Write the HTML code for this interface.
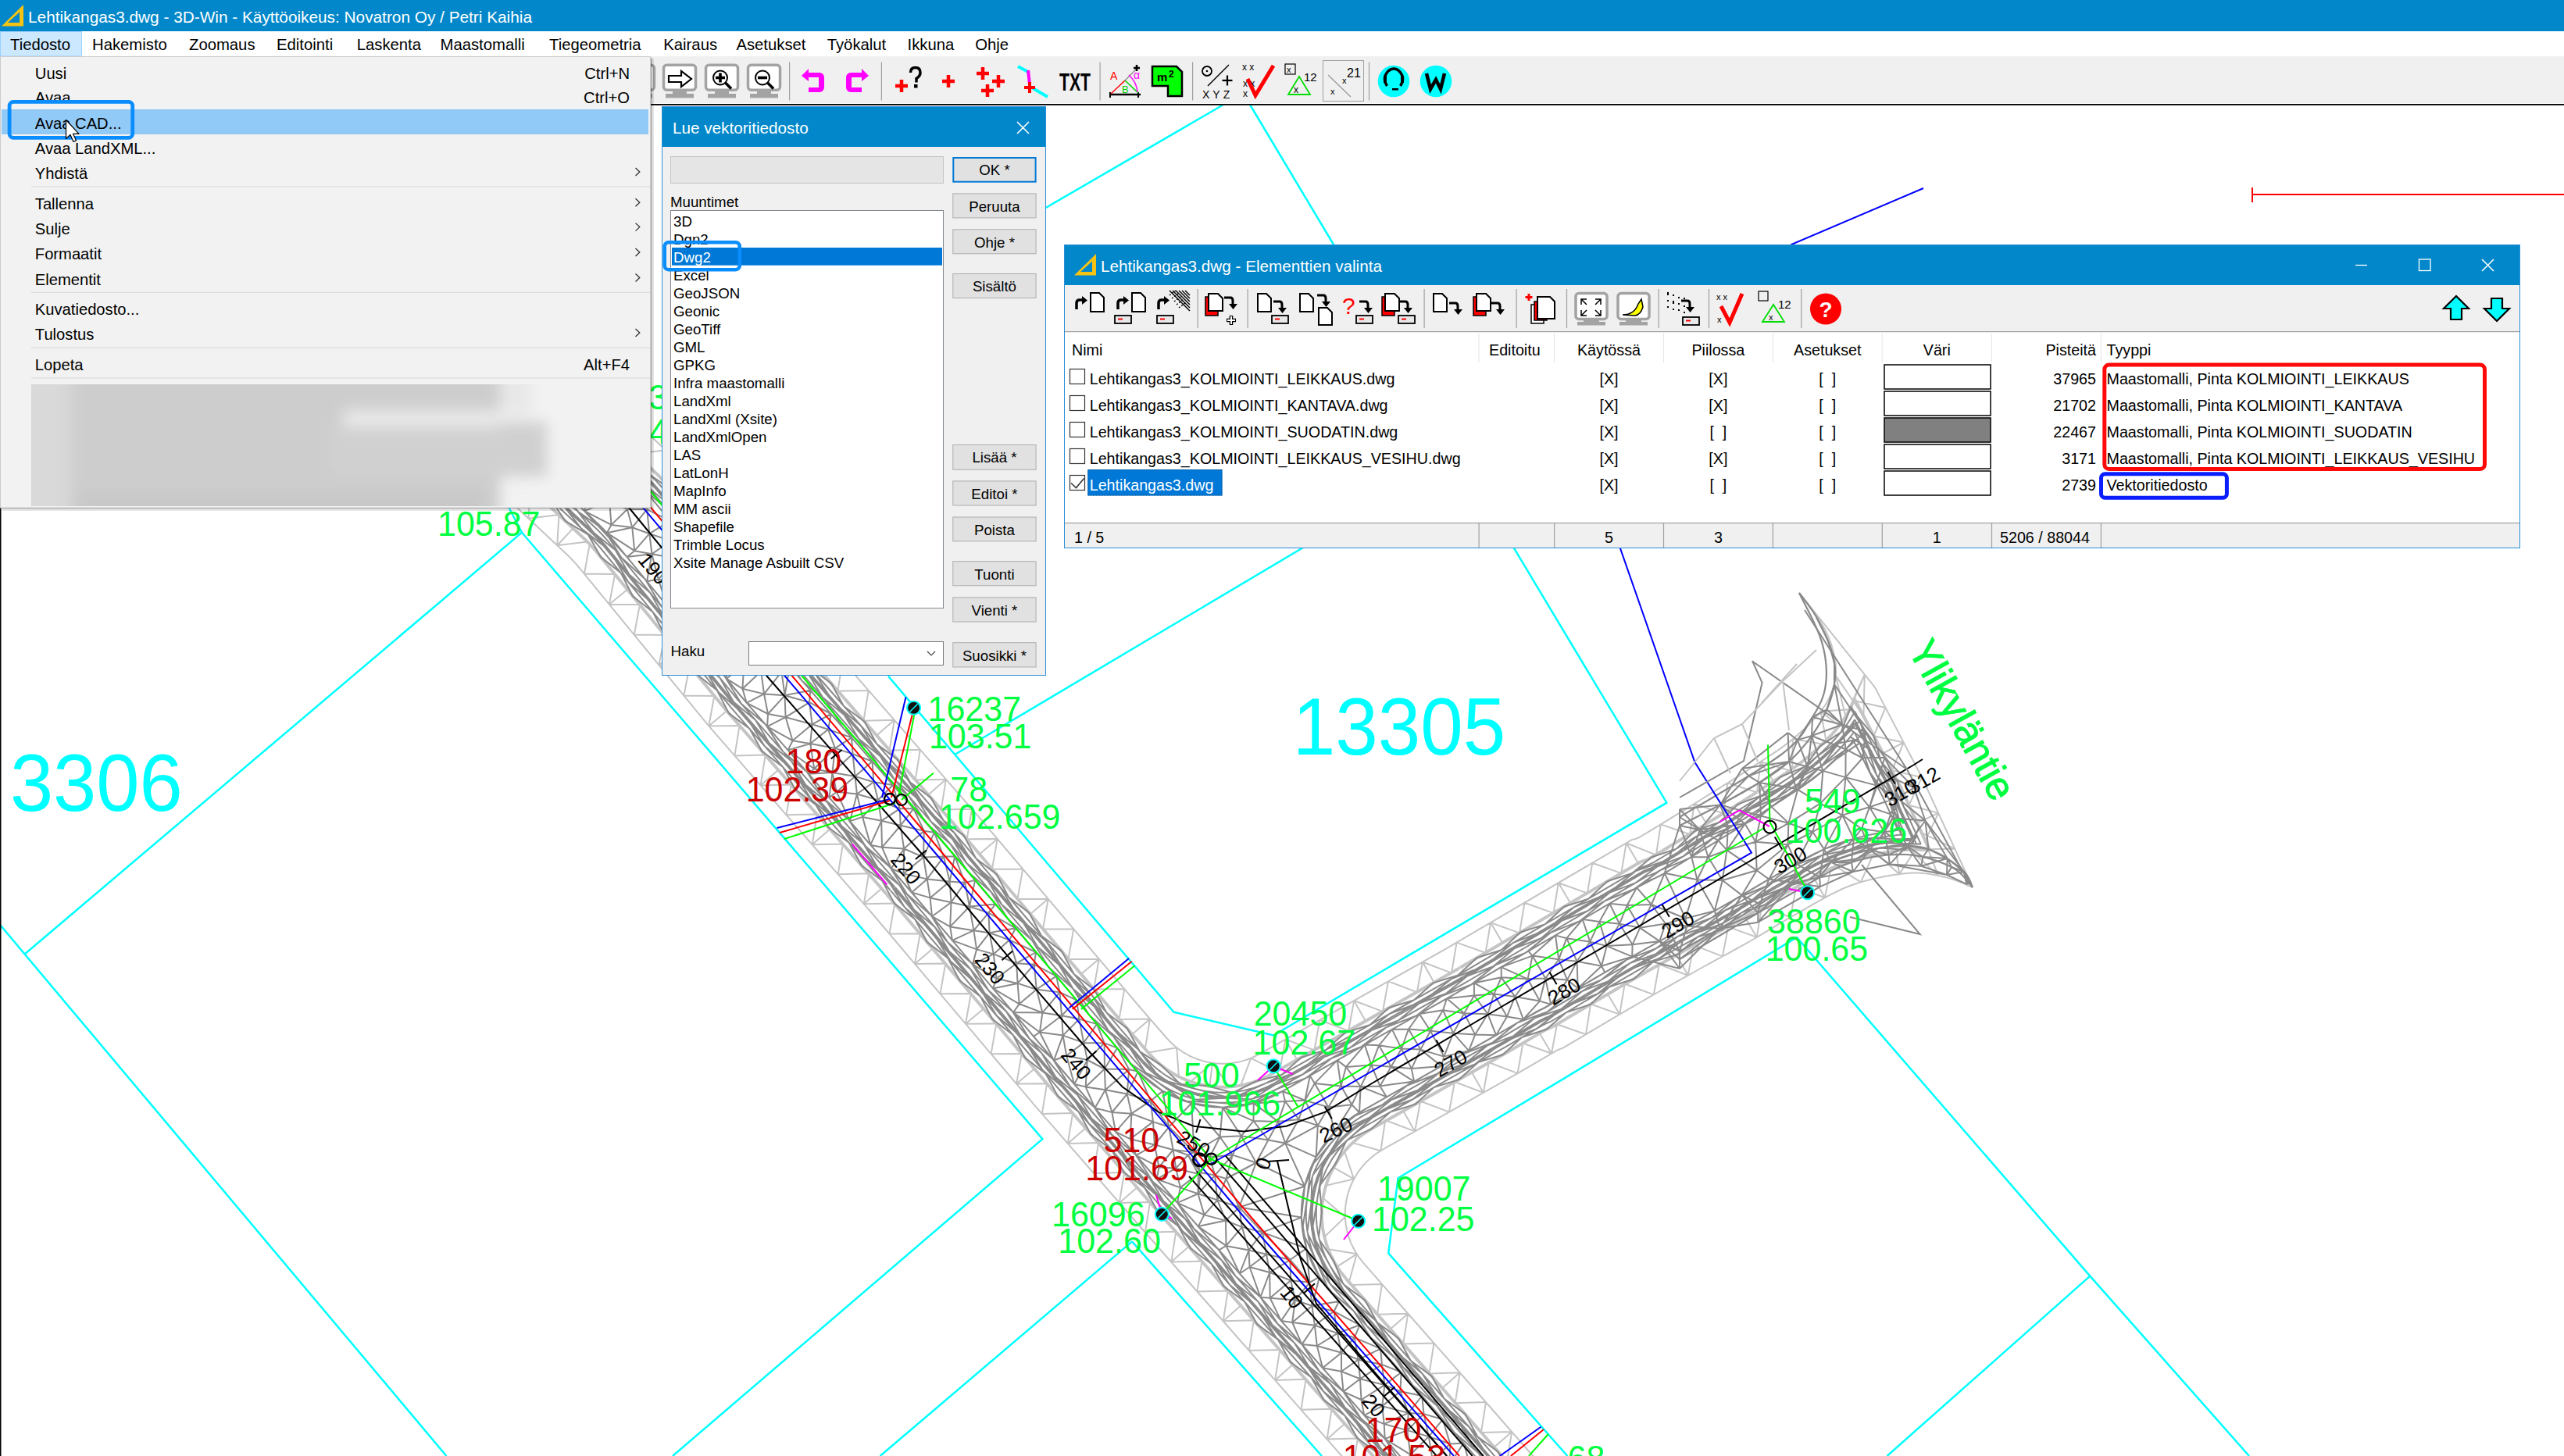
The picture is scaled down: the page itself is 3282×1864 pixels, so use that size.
<!DOCTYPE html>
<html><head><meta charset="utf-8"><style>
html,body{margin:0;padding:0;background:#fff;overflow:hidden}
svg{display:block;font-family:"Liberation Sans",sans-serif}
</style></head><body>
<svg width="3282" height="1864" viewBox="0 0 3282 1864">
<rect x="0" y="0" width="3282" height="1864" fill="#fff"/>
<polyline points="0.0,1183.9 571.5,1864.0" fill="none" stroke="#00ffff" stroke-width="2.5"/><polyline points="31.0,1222.0 668.0,681.8 652.0,651.0 600.0,560.0" fill="none" stroke="#00ffff" stroke-width="2.5"/><polyline points="668.0,681.8 1334.4,1458.1 861.0,1864.0" fill="none" stroke="#00ffff" stroke-width="2.5"/><polyline points="1449.0,1589.4 1126.6,1864.0" fill="none" stroke="#00ffff" stroke-width="2.5"/><polyline points="1449.0,1589.4 1692.0,1864.0" fill="none" stroke="#00ffff" stroke-width="2.5"/><polyline points="1566.0,134.0 1330.0,271.0 1100.0,405.0" fill="none" stroke="#00ffff" stroke-width="2.5"/><polyline points="1600.0,134.0 1707.0,313.0 1800.0,470.0" fill="none" stroke="#00ffff" stroke-width="2.5"/><polyline points="1137.0,865.6 1502.5,1295.7 1630.2,1325.5 2133.4,1027.7 1938.5,702.7 1880.0,600.0" fill="none" stroke="#00ffff" stroke-width="2.5"/><polyline points="1222.6,965.7 1700.0,682.0" fill="none" stroke="#00ffff" stroke-width="2.5"/><polyline points="2000.0,1381.9 1789.6,1508.2 1777.2,1604.4 2006.4,1864.0" fill="none" stroke="#00ffff" stroke-width="2.5"/><polyline points="2000.0,1381.9 2300.0,1200.0 2675.3,1633.6 2879.0,1864.0" fill="none" stroke="#00ffff" stroke-width="2.5"/><polyline points="2675.3,1633.6 2415.5,1864.0" fill="none" stroke="#00ffff" stroke-width="2.5"/><path d="M493.1 491.4L493.6 492.0M493.6 492.0L494.4 492.8M494.4 492.8L494.9 493.3M494.9 493.3L729.0 713.1M729.0 713.1L730.4 714.5M730.4 714.5L737.5 722.1M737.5 722.1L738.8 723.6M738.8 723.6L906.0 927.9M906.0 927.9L906.3 928.2M906.3 928.2L906.7 928.7M906.7 928.7L906.8 928.8M906.8 928.8L908.0 930.2M908.0 930.2L908.1 930.3M908.1 930.3L1111.1 1163.3M1111.1 1163.3L1111.3 1163.4M1111.3 1163.4L1112.0 1164.3M1112.0 1164.3L1112.2 1164.5M1112.2 1164.5L1321.1 1411.2M1321.1 1411.2L1321.4 1411.6M1321.4 1411.6L1453.8 1564.0M1453.8 1564.0L1774.2 1928.5M1774.2 1928.5L1774.3 1928.6M1774.3 1928.6L1884.5 2054.5M1884.5 2054.5L1885.0 2055.0M1885.0 2055.0L1885.7 2055.8M1885.7 2055.8L1886.3 2056.3M1886.3 2056.3L1886.8 2055.9M1886.8 2055.9L1887.7 2055.2M1887.7 2055.2L1888.3 2054.8M1888.3 2054.8L2022.7 1937.1M2022.7 1937.1L2023.2 1936.6M2023.2 1936.6L2024.0 1935.9M2024.0 1935.9L2024.5 1935.4M2024.5 1935.4L2024.1 1934.8M2024.1 1934.8L2023.4 1933.9M2023.4 1933.9L2022.9 1933.3M2022.9 1933.3L1912.8 1807.5M1912.8 1807.5L1745.9 1617.6M1745.9 1617.6L1744.9 1616.4M1744.9 1616.4L1740.5 1610.8M1740.5 1610.8L1738.7 1608.4M1738.7 1608.4L1735.3 1603.0M1735.3 1603.0L1733.8 1600.5M1733.8 1600.5L1730.9 1594.8M1730.9 1594.8L1729.6 1592.1M1729.6 1592.1L1727.3 1586.1M1727.3 1586.1L1726.3 1583.3M1726.3 1583.3L1724.6 1577.1M1724.6 1577.1L1723.9 1574.2M1723.9 1574.2L1722.8 1567.9M1722.8 1567.9L1722.4 1565.0M1722.4 1565.0L1721.9 1558.6M1721.9 1558.6L1721.8 1555.6M1721.8 1555.6L1721.9 1549.2M1721.9 1549.2L1722.1 1546.3M1722.1 1546.3L1722.9 1539.9M1722.9 1539.9L1723.4 1537.0M1723.4 1537.0L1724.8 1530.7M1724.8 1530.7L1725.5 1527.9M1725.5 1527.9L1727.5 1521.8M1727.5 1521.8L1728.6 1519.0M1728.6 1519.0L1731.2 1513.1M1731.2 1513.1L1732.5 1510.5M1732.5 1510.5L1735.7 1504.9M1735.7 1504.9L1737.2 1502.4M1737.2 1502.4L1740.9 1497.1M1740.9 1497.1L1742.7 1494.8M1742.7 1494.8L1746.9 1489.9M1746.9 1489.9L1749.0 1487.8M1749.0 1487.8L1753.6 1483.4M1753.6 1483.4L1755.9 1481.4M1755.9 1481.4L1760.9 1477.5M1760.9 1477.5L1763.3 1475.8M1763.3 1475.8L1769.4 1472.0M1769.4 1472.0L1770.7 1471.2M1770.7 1471.2L1943.9 1373.4M1943.9 1373.4L1945.2 1372.7M1945.2 1372.7L1991.8 1345.3M1991.8 1345.3L1994.0 1344.1M1994.0 1344.1L1996.2 1343.2M1996.2 1343.2L1998.6 1342.4M1998.6 1342.4L2000.0 1342.0M2000.0 1342.0L2000.6 1341.6M2000.6 1341.6L2007.8 1337.4M2007.8 1337.4L2018.4 1331.1M2018.4 1331.1L2031.0 1323.6M2031.0 1323.6L2045.0 1315.3M2045.0 1315.3L2059.6 1306.7M2059.6 1306.7L2059.6 1306.7M2059.6 1306.7L2074.0 1298.2M2074.0 1298.2L2074.1 1298.1M2074.1 1298.1L2087.7 1290.1M2087.7 1290.1L2087.8 1290.1M2087.8 1290.1L2099.9 1283.0M2099.9 1283.0L2100.1 1283.0M2100.1 1283.0L2111.0 1276.7M2111.0 1276.7L2111.1 1276.6M2111.1 1276.6L2121.8 1270.5M2121.8 1270.5L2121.9 1270.5M2121.9 1270.5L2132.3 1264.6M2132.3 1264.6L2132.4 1264.6M2132.4 1264.6L2142.5 1258.9M2142.5 1258.9L2142.5 1258.9M2142.5 1258.9L2152.3 1253.4M2152.3 1253.4L2152.4 1253.4M2152.4 1253.4L2161.9 1248.1M2161.9 1248.1L2171.1 1243.0M2171.1 1243.0L2180.0 1238.0M2180.0 1238.0L2180.0 1238.0M2180.0 1238.0L2188.4 1233.3M2188.4 1233.3L2188.5 1233.3M2188.5 1233.3L2196.5 1228.9M2196.5 1228.9L2196.5 1228.9M2196.5 1228.9L2204.1 1224.8M2204.1 1224.8L2204.2 1224.7M2204.2 1224.7L2211.5 1220.8M2211.5 1220.8L2218.6 1216.9M2218.6 1216.9L2225.7 1213.0M2225.7 1213.0L2232.7 1209.1M2232.7 1209.1L2239.9 1205.0M2239.9 1205.0L2240.1 1205.0M2240.1 1205.0L2247.0 1201.0M2247.0 1201.0L2247.2 1200.9M2247.2 1200.9L2253.8 1196.9M2253.8 1196.9L2260.6 1192.9M2260.6 1192.9L2267.2 1188.8M2267.2 1188.8L2267.3 1188.8M2267.3 1188.8L2273.9 1184.8M2273.9 1184.8L2274.1 1184.7M2274.1 1184.7L2280.8 1180.7M2280.8 1180.7L2281.1 1180.5M2281.1 1180.5L2288.1 1176.5M2288.1 1176.5L2288.4 1176.3M2288.4 1176.3L2296.0 1172.0M2296.0 1172.0L2304.2 1167.4M2304.2 1167.4L2304.3 1167.3M2304.3 1167.3L2312.8 1162.3M2312.8 1162.3L2321.7 1157.2M2321.7 1157.2L2321.9 1157.1M2321.9 1157.1L2330.7 1152.1M2330.7 1152.1L2331.2 1151.8M2331.2 1151.8L2339.9 1147.0M2339.9 1147.0L2340.6 1146.7M2340.6 1146.7L2349.1 1142.3M2349.1 1142.3L2350.1 1141.8M2350.1 1141.8L2358.2 1138.0M2358.2 1138.0L2359.5 1137.4M2359.5 1137.4L2367.3 1134.3M2367.3 1134.3L2368.8 1133.7M2368.8 1133.7L2376.6 1131.0M2376.6 1131.0L2377.8 1130.6M2377.8 1130.6L2386.2 1128.1M2386.2 1128.1L2387.3 1127.8M2387.3 1127.8L2395.9 1125.6M2395.9 1125.6L2396.8 1125.4M2396.8 1125.4L2405.5 1123.4M2405.5 1123.4L2406.4 1123.2M2406.4 1123.2L2414.9 1121.6M2414.9 1121.6L2415.8 1121.4M2415.8 1121.4L2424.0 1120.1M2424.0 1120.1L2424.8 1120.0M2424.8 1120.0L2432.6 1118.9M2432.6 1118.9L2433.4 1118.8M2433.4 1118.8L2440.3 1118.1M2440.3 1118.1L2441.7 1118.0M2441.7 1118.0L2447.4 1117.6M2447.4 1117.6L2449.3 1117.6M2449.3 1117.6L2454.4 1117.6M2454.4 1117.6L2456.1 1117.6M2456.1 1117.6L2461.0 1117.9M2461.0 1117.9L2462.5 1118.1M2462.5 1118.1L2467.2 1118.6M2467.2 1118.6L2468.5 1118.8M2468.5 1118.8L2473.2 1119.5M2473.2 1119.5L2474.2 1119.7M2474.2 1119.7L2479.0 1120.6M2479.0 1120.6L2479.6 1120.8M2479.6 1120.8L2484.6 1121.8M2484.6 1121.8L2484.8 1121.9M2484.8 1121.9L2489.5 1122.9M2489.5 1122.9L2490.5 1123.1M2490.5 1123.1L2494.4 1124.1M2494.4 1124.1L2496.1 1124.6M2496.1 1124.6L2499.9 1125.8M2499.9 1125.8L2501.2 1126.2M2501.2 1126.2L2505.2 1127.7M2505.2 1127.7L2506.1 1128.0M2506.1 1128.0L2510.3 1129.7M2510.3 1129.7L2510.9 1129.9M2510.9 1129.9L2514.9 1131.7M2514.9 1131.7L2515.2 1131.8M2515.2 1131.8L2519.0 1133.5M2519.0 1133.5L2522.2 1134.9M2522.2 1134.9L2522.6 1135.0M2522.6 1135.0L2524.3 1135.7M2524.3 1135.7L2524.9 1135.9M2524.9 1135.9L2524.7 1135.3M2524.7 1135.3L2460.2 995.3M2460.2 995.3L2459.8 994.7M2459.8 994.7L2400.3 880.6M2400.3 880.6L2400.0 880.0M2400.0 880.0L2399.5 879.4M2399.5 879.4L2303.5 759.6M2303.5 759.6L2303.3 759.4M2303.3 759.4L2303.4 759.6M2303.4 759.6L2305.8 762.8M2305.8 762.8L2306.0 763.1M2306.0 763.1L2309.8 768.2M2309.8 768.2L2314.5 774.3M2314.5 774.3L2314.7 774.5M2314.7 774.5L2319.6 781.2M2319.6 781.2L2319.9 781.6M2319.9 781.6L2324.8 788.4M2324.8 788.4L2325.3 789.1M2325.3 789.1L2329.7 795.6M2329.7 795.6L2330.4 796.7M2330.4 796.7L2334.0 802.5M2334.0 802.5L2335.0 804.2M2335.0 804.2L2337.5 809.0M2337.5 809.0L2338.4 811.0M2338.4 811.0L2340.5 815.7M2340.5 815.7L2341.0 817.0M2341.0 817.0L2343.0 822.1M2343.0 822.1L2343.5 823.4M2343.5 823.4L2345.1 828.4M2345.1 828.4L2345.5 829.9M2345.5 829.9L2346.8 834.7M2346.8 834.7L2347.2 836.3M2347.2 836.3L2348.2 840.9M2348.2 840.9L2348.5 842.7M2348.5 842.7L2349.2 847.1M2349.2 847.1L2349.5 849.0M2349.5 849.0L2349.8 853.0M2349.8 853.0L2349.9 855.2M2349.9 855.2L2350.0 858.9M2350.0 858.9L2349.9 861.1M2349.9 861.1L2349.7 864.6M2349.7 864.6L2349.5 866.8M2349.5 866.8L2349.1 870.1M2349.1 870.1L2348.7 872.4M2348.7 872.4L2348.1 875.5M2348.1 875.5L2347.5 877.7M2347.5 877.7L2346.6 880.9M2346.6 880.9L2345.9 883.0M2345.9 883.0L2344.7 886.2M2344.7 886.2L2343.9 888.1M2343.9 888.1L2342.4 891.5M2342.4 891.5L2341.6 893.3M2341.6 893.3L2339.6 896.9M2339.6 896.9L2338.8 898.4M2338.8 898.4L2336.5 902.2M2336.5 902.2L2335.5 903.8M2335.5 903.8L2332.8 907.7M2332.8 907.7L2331.7 909.1M2331.7 909.1L2328.4 913.3M2328.4 913.3L2327.5 914.4M2327.5 914.4L2323.6 918.9M2323.6 918.9L2322.8 919.8M2322.8 919.8L2318.4 924.4M2318.4 924.4L2317.7 925.2M2317.7 925.2L2312.9 929.9M2312.9 929.9L2312.3 930.5M2312.3 930.5L2307.1 935.4M2307.1 935.4L2306.6 935.8M2306.6 935.8L2301.2 940.7M2301.2 940.7L2300.8 941.1M2300.8 941.1L2295.3 945.7M2295.3 945.7L2294.7 946.3M2294.7 946.3L2289.2 950.6M2289.2 950.6L2288.4 951.3M2288.4 951.3L2282.7 955.6M2282.7 955.6L2282.0 956.1M2282.0 956.1L2275.9 960.4M2275.9 960.4L2275.4 960.8M2275.4 960.8L2268.9 965.2M2268.9 965.2L2268.5 965.4M2268.5 965.4L2261.7 969.9M2261.7 969.9L2261.5 970.0M2261.5 970.0L2254.4 974.6M2254.4 974.6L2247.3 979.2M2247.3 979.2L2240.0 984.0M2240.0 984.0L2233.0 988.6M2233.0 988.6L2232.8 988.7M2232.8 988.7L2225.9 993.2M2225.9 993.2L2225.8 993.3M2225.8 993.3L2218.8 997.7M2218.8 997.7L2218.7 997.8M2218.7 997.8L2211.6 1002.3M2211.6 1002.3L2211.5 1002.3M2211.5 1002.3L2204.2 1006.9M2204.2 1006.9L2204.2 1007.0M2204.2 1007.0L2196.5 1011.7M2196.5 1011.7L2196.5 1011.7M2196.5 1011.7L2188.5 1016.7M2188.5 1016.7L2180.0 1022.0M2180.0 1022.0L2171.1 1027.5M2171.1 1027.5L2161.9 1033.2M2161.9 1033.2L2161.9 1033.3M2161.9 1033.3L2152.4 1039.1M2152.4 1039.1L2152.3 1039.1M2152.3 1039.1L2142.5 1045.2M2142.5 1045.2L2142.5 1045.2M2142.5 1045.2L2132.4 1051.4M2132.4 1051.4L2132.3 1051.4M2132.3 1051.4L2121.9 1057.8M2121.9 1057.8L2121.8 1057.8M2121.8 1057.8L2111.1 1064.3M2111.1 1064.3L2111.1 1064.3M2111.1 1064.3L2100.0 1071.0M2100.0 1071.0L2100.0 1071.0M2100.0 1071.0L2099.9 1071.1M2099.9 1071.1L2097.2 1072.5M2097.2 1072.5L2094.4 1073.6M2094.4 1073.6L2091.6 1074.5M2091.6 1074.5L2090.2 1074.7M2090.2 1074.7L2089.4 1074.9M2089.4 1074.9L2088.7 1075.2M2088.7 1075.2L2087.7 1075.8M2087.7 1075.8L2087.1 1076.1M2087.1 1076.1L1853.9 1212.9M1853.9 1212.9L1853.7 1213.0M1853.7 1213.0L1852.5 1213.6M1852.5 1213.6L1852.3 1213.8M1852.3 1213.8L1612.6 1349.2M1612.6 1349.2L1611.3 1349.9M1611.3 1349.9L1604.9 1353.0M1604.9 1353.0L1602.3 1354.2M1602.3 1354.2L1596.3 1356.5M1596.3 1356.5L1593.5 1357.4M1593.5 1357.4L1587.4 1359.1M1587.4 1359.1L1584.6 1359.8M1584.6 1359.8L1578.3 1360.8M1578.3 1360.8L1575.4 1361.2M1575.4 1361.2L1569.0 1361.7M1569.0 1361.7L1566.1 1361.7M1566.1 1361.7L1559.8 1361.6M1559.8 1361.6L1556.8 1361.4M1556.8 1361.4L1550.5 1360.6M1550.5 1360.6L1547.6 1360.1M1547.6 1360.1L1541.4 1358.7M1541.4 1358.7L1538.6 1357.9M1538.6 1357.9L1532.6 1356.0M1532.6 1356.0L1529.8 1354.9M1529.8 1354.9L1524.0 1352.3M1524.0 1352.3L1521.4 1351.0M1521.4 1351.0L1515.9 1347.9M1515.9 1347.9L1513.4 1346.3M1513.4 1346.3L1508.2 1342.7M1508.2 1342.7L1505.9 1340.9M1505.9 1340.9L1501.0 1336.8M1501.0 1336.8L1498.9 1334.7M1498.9 1334.7L1494.0 1329.6M1494.0 1329.6L1493.0 1328.5M1493.0 1328.5L1461.7 1292.5M1461.7 1292.5L1461.6 1292.4M1461.6 1292.4L1460.9 1291.6M1460.9 1291.6L1460.8 1291.5M1460.8 1291.5L1251.9 1044.7M1251.9 1044.7L1251.1 1043.8M1251.1 1043.8L1048.8 811.7M1048.8 811.7L1048.5 811.4M1048.5 811.4L1046.9 809.5M1046.9 809.5L1046.6 809.1M1046.6 809.1L873.9 598.2M873.9 598.2L873.6 597.8M873.6 597.8L871.9 595.9M871.9 595.9L871.6 595.5M871.6 595.5L865.8 589.4M865.8 589.4L865.5 589.0M865.5 589.0L863.6 587.1M863.6 587.1L863.3 586.8M863.3 586.8L620.8 359.2M620.8 359.2L620.3 358.7M620.3 358.7L619.4 357.9M619.4 357.9L618.9 357.5M618.9 357.5L618.3 358.0M618.3 358.0L617.5 358.8M617.5 358.8L617.0 359.3M617.0 359.3L494.8 489.5M494.8 489.5L494.3 490.0M494.3 490.0L493.5 490.9M493.5 490.9L493.1 491.4M493.1 491.4L552.4 471.9M493.1 491.4L553.5 507.2M493.1 491.4L535.3 490.1M529.7 526.0L538.4 486.8M529.7 526.0L568.5 521.2M566.4 560.5L568.7 521.5M566.4 560.5L605.2 555.7M566.4 560.5L586.9 538.6M603.1 594.9L605.4 555.9M603.1 594.9L641.9 590.2M639.8 629.4L642.1 590.4M639.8 629.4L678.6 624.6M639.8 629.4L660.3 607.5M676.5 663.8L678.8 624.9M676.5 663.8L715.3 659.1M713.2 698.3L715.5 659.3M713.2 698.3L751.9 693.6M713.2 698.3L733.7 676.4M747.9 734.7L754.8 696.7M747.9 734.7L786.9 735.0M779.8 773.7L787.1 735.3M779.8 773.7L818.8 774.0M779.8 773.7L803.0 754.7M811.7 812.6L819.0 774.3M811.7 812.6L850.7 813.0M843.5 851.6L850.9 813.2M843.5 851.6L882.6 851.9M843.5 851.6L866.8 832.6M875.4 890.5L882.8 852.2M875.4 890.5L914.5 890.9M907.3 929.5L914.3 890.7M907.3 929.5L946.6 928.9M907.3 929.5L930.2 910.0M940.4 967.4L946.6 928.9M940.4 967.4L979.4 966.5M973.5 1005.4L979.7 966.8M973.5 1005.4L1012.5 1004.5M973.5 1005.4L996.1 985.7M1006.6 1043.3L1012.8 1004.8M1006.6 1043.3L1045.6 1042.4M1039.7 1081.3L1045.8 1042.7M1039.7 1081.3L1078.7 1080.4M1039.7 1081.3L1062.3 1061.5M1072.7 1119.2L1078.9 1080.7M1072.7 1119.2L1111.8 1118.3M1105.8 1157.2L1112.0 1118.6M1105.8 1157.2L1144.7 1156.4M1105.8 1157.2L1128.4 1137.4M1138.4 1195.5L1145.2 1157.0M1138.4 1195.5L1177.5 1195.2M1171.0 1233.9L1177.7 1195.4M1171.0 1233.9L1210.0 1233.6M1171.0 1233.9L1193.9 1214.5M1203.5 1272.3L1210.2 1233.9M1203.5 1272.3L1242.6 1272.0M1236.0 1310.7L1242.8 1272.3M1236.0 1310.7L1275.1 1310.4M1236.0 1310.7L1258.9 1291.4M1268.6 1349.2L1275.3 1310.7M1268.6 1349.2L1307.6 1348.9M1301.1 1387.6L1307.8 1349.1M1301.1 1387.6L1340.2 1387.3M1301.1 1387.6L1324.0 1368.2M1333.8 1425.9L1340.1 1387.3M1333.8 1425.9L1372.9 1425.1M1366.8 1463.9L1373.1 1425.3M1366.8 1463.9L1405.9 1463.1M1366.8 1463.9L1389.5 1444.2M1399.8 1501.9L1406.1 1463.3M1399.8 1501.9L1438.9 1501.1M1432.8 1539.9L1439.1 1501.3M1432.8 1539.9L1471.9 1539.1M1432.8 1539.9L1455.5 1520.2M1465.9 1577.8L1472.0 1539.2M1465.9 1577.8L1505.0 1576.8M1499.2 1615.6L1505.2 1577.1M1499.2 1615.6L1538.2 1614.6M1499.2 1615.6L1521.7 1595.8M1532.4 1653.4L1538.4 1614.9M1532.4 1653.4L1571.5 1652.4M1565.7 1691.3L1571.7 1652.7M1565.7 1691.3L1604.7 1690.2M1565.7 1691.3L1588.2 1671.4M1598.9 1729.1L1604.9 1690.5M1598.9 1729.1L1637.9 1728.0M1632.1 1766.9L1638.2 1728.3M1632.1 1766.9L1671.2 1765.8M1632.1 1766.9L1654.7 1747.1M1665.4 1804.7L1671.4 1766.1M1665.4 1804.7L1704.4 1803.7M1698.6 1842.5L1704.6 1803.9M1698.6 1842.5L1737.6 1841.5M1698.6 1842.5L1721.1 1822.7M1731.8 1880.3L1737.9 1841.7M1731.8 1880.3L1770.9 1879.3M1765.1 1918.1L1771.1 1879.5M1765.1 1918.1L1804.1 1917.1M1765.1 1918.1L1787.6 1898.3M1798.3 1956.0L1804.4 1917.4M1798.3 1956.0L1837.3 1955.0M1831.4 1993.9L1837.5 1955.3M1831.4 1993.9L1870.5 1992.9M1831.4 1993.9L1854.0 1974.1M1864.6 2031.8L1870.7 1993.2M1864.6 2031.8L1905.7 1999.7M1899.6 2044.9L1872.6 1995.4M1899.6 2044.9L1907.9 1997.7M1899.6 2044.9L1889.1 2014.2M1937.4 2011.7L1898.9 2005.6M1937.4 2011.7L1936.5 1972.7M1975.3 1978.6L1936.8 1972.5M1975.3 1978.6L1974.4 1939.5M1975.3 1978.6L1955.6 1956.0M2013.2 1945.4L1963.6 1949.0M2013.2 1945.4L1965.9 1913.7M2001.5 1908.8L1967.6 1945.5M2001.5 1908.8L1962.4 1909.7M2001.5 1908.8L1978.9 1928.5M1968.3 1870.9L1962.2 1909.5M1968.3 1870.9L1929.3 1871.8M1935.2 1833.0L1929.0 1871.6M1935.2 1833.0L1896.1 1833.9M1935.2 1833.0L1912.6 1852.8M1902.0 1795.1L1895.9 1833.7M1902.0 1795.1L1862.9 1796.2M1868.7 1757.3L1862.7 1795.9M1868.7 1757.3L1829.7 1758.4M1868.7 1757.3L1846.2 1777.1M1835.5 1719.5L1829.5 1758.1M1835.5 1719.5L1796.5 1720.6M1802.3 1681.7L1796.2 1720.3M1802.3 1681.7L1763.2 1682.7M1802.3 1681.7L1779.7 1701.5M1769.0 1643.9L1763.0 1682.5M1769.0 1643.9L1730.0 1644.9M1736.7 1605.3L1726.8 1641.3M1736.7 1605.3L1700.3 1599.3M1736.7 1605.3L1711.5 1621.6M1721.9 1557.9L1695.3 1583.5M1721.9 1557.9L1693.5 1533.8M1733.1 1509.4L1697.3 1517.7M1733.1 1509.4L1721.0 1474.0M1733.1 1509.4L1707.0 1494.7M1767.3 1473.3L1731.4 1463.1M1767.3 1473.3L1773.0 1435.5M1811.1 1448.4L1774.5 1434.6M1811.1 1448.4L1818.1 1410.0M1811.1 1448.4L1796.3 1422.3M1854.9 1423.6L1818.4 1409.8M1854.9 1423.6L1861.9 1385.2M1898.7 1398.9L1862.2 1385.0M1898.7 1398.9L1905.8 1360.5M1898.7 1398.9L1884.0 1372.8M1942.6 1374.1L1906.1 1360.3M1942.6 1374.1L1949.4 1335.4M1986.0 1348.7L1949.3 1335.5M1986.0 1348.7L1993.0 1311.3M1986.0 1348.7L1970.8 1322.8M2029.9 1324.3L1993.1 1311.2M2029.9 1324.3L2036.1 1285.7M2073.2 1298.6L2036.5 1285.5M2073.2 1298.6L2079.6 1260.2M2073.2 1298.6L2058.0 1272.8M2116.8 1273.4L2080.3 1259.8M2116.8 1273.4L2123.7 1235.0M2160.7 1248.7L2124.3 1234.7M2160.7 1248.7L2168.0 1210.4M2160.7 1248.7L2146.1 1222.5M2204.8 1224.4L2168.5 1210.1M2204.8 1224.4L2212.4 1186.1M2248.8 1199.9L2211.7 1186.4M2248.8 1199.9L2254.9 1161.2M2248.8 1199.9L2233.5 1174.1M2292.0 1174.2L2255.7 1160.7M2292.0 1174.2L2299.0 1135.7M2335.8 1149.3L2299.6 1135.3M2335.8 1149.3L2343.7 1111.7M2335.8 1149.3L2321.4 1123.0M2381.9 1129.4L2349.8 1109.0M2381.9 1129.4L2397.5 1094.5M2431.1 1119.1L2402.4 1093.4M2431.1 1119.1L2452.0 1087.6M2431.1 1119.1L2427.1 1089.4M2481.1 1121.1L2445.2 1087.7M2481.1 1121.1L2459.7 1066.1M2502.2 1086.6L2445.2 1087.7M2502.2 1086.6L2459.7 1066.1M2481.2 1040.9L2464.4 1076.2M2481.2 1040.9L2443.4 1030.8M2481.2 1040.9L2453.9 1053.5M2460.1 995.2L2443.5 1030.9M2460.1 995.2L2421.5 986.1M2436.8 950.5L2421.8 986.6M2436.8 950.5L2398.6 942.3M2436.8 950.5L2410.2 964.4M2413.5 905.9L2398.5 942.0M2413.5 905.9L2375.4 897.6M2386.8 863.5L2385.4 916.9M2386.8 863.5L2362.4 917.3M2386.8 863.5L2373.5 894.9M2349.7 864.9L2385.4 916.9M2349.7 864.9L2362.4 917.3M2330.5 910.7L2367.6 908.2M2330.5 910.7L2337.4 947.8M2330.5 910.7L2354.1 929.2M2294.8 946.1L2332.7 952.5M2294.8 946.1L2294.1 984.3M2253.7 975.1L2290.9 986.5M2253.7 975.1L2249.1 1013.9M2253.7 975.1L2270.0 1000.3M2211.4 1002.4L2248.4 1014.3M2211.4 1002.4L2206.2 1041.1M2168.7 1029.0L2205.7 1041.3M2168.7 1029.0L2163.2 1067.7M2168.7 1029.0L2184.5 1054.5M2125.8 1055.4L2162.7 1068.0M2125.8 1055.4L2120.0 1094.0M2081.7 1079.2L2119.4 1094.4M2081.7 1079.2L2075.3 1117.8M2081.7 1079.2L2096.9 1105.1M2038.3 1104.7L2075.0 1117.9M2038.3 1104.7L2031.9 1143.2M1994.9 1130.2L2031.6 1143.4M1994.9 1130.2L1988.5 1168.7M1994.9 1130.2L2010.1 1156.1M1951.5 1155.7L1988.2 1168.9M1951.5 1155.7L1945.1 1194.2M1908.0 1181.1L1944.8 1194.4M1908.0 1181.1L1901.6 1219.6M1908.0 1181.1L1923.2 1207.0M1864.6 1206.6L1901.3 1219.8M1864.6 1206.6L1858.1 1245.0M1820.9 1231.5L1857.4 1245.4M1820.9 1231.5L1813.9 1269.9M1820.9 1231.5L1835.6 1257.7M1777.0 1256.3L1813.6 1270.1M1777.0 1256.3L1770.0 1294.7M1733.2 1281.0L1769.7 1294.9M1733.2 1281.0L1726.2 1319.5M1733.2 1281.0L1748.0 1307.2M1689.4 1305.8L1725.9 1319.6M1689.4 1305.8L1682.4 1344.2M1645.5 1330.6L1682.1 1344.4M1645.5 1330.6L1638.5 1369.0M1645.5 1330.6L1660.3 1356.7M1601.3 1354.6L1634.4 1371.3M1601.3 1354.6L1588.1 1389.6M1552.0 1360.8L1573.3 1391.4M1552.0 1360.8L1524.1 1384.7M1552.0 1360.8L1548.3 1390.6M1506.2 1341.2L1508.9 1378.3M1506.2 1341.2L1469.8 1347.6M1472.0 1304.4L1465.8 1342.9M1472.0 1304.4L1433.1 1305.1M1472.0 1304.4L1449.4 1324.0M1439.3 1266.1L1432.6 1304.6M1439.3 1266.1L1400.3 1266.4M1406.8 1227.7L1400.1 1266.1M1406.8 1227.7L1367.7 1228.0M1406.8 1227.7L1383.9 1247.1M1374.3 1189.2L1367.5 1227.7M1374.3 1189.2L1335.2 1189.6M1341.7 1150.8L1335.0 1189.3M1341.7 1150.8L1302.7 1151.1M1341.7 1150.8L1318.8 1170.2M1309.2 1112.4L1302.5 1150.9M1309.2 1112.4L1270.1 1112.7M1276.7 1074.0L1269.9 1112.5M1276.7 1074.0L1237.6 1074.3M1276.7 1074.0L1253.8 1093.4M1244.0 1035.7L1237.7 1074.4M1244.0 1035.7L1205.0 1036.5M1210.9 997.7L1204.7 1036.3M1210.9 997.7L1171.9 998.6M1210.9 997.7L1188.3 1017.4M1177.8 959.8L1171.7 998.3M1177.8 959.8L1138.8 960.7M1144.8 921.8L1138.6 960.4M1144.8 921.8L1105.7 922.7M1144.8 921.8L1122.2 941.5M1111.7 883.9L1105.5 922.4M1111.7 883.9L1072.6 884.8M1078.6 845.9L1072.4 884.5M1078.6 845.9L1039.6 846.8M1078.6 845.9L1056.0 865.7M1045.6 807.9L1038.7 845.8M1045.6 807.9L1006.6 807.6M1013.7 769.0L1006.3 807.3M1013.7 769.0L974.7 768.6M1013.7 769.0L990.5 788.0M981.8 730.0L974.4 768.4M981.8 730.0L942.8 729.7M949.9 691.1L942.6 729.4M949.9 691.1L910.9 690.7M949.9 691.1L926.7 710.1M918.0 652.1L910.7 690.5M918.0 652.1L879.0 651.8M886.2 613.2L878.8 651.5M886.2 613.2L846.9 613.0M886.2 613.2L862.9 632.2M852.0 576.2L849.3 615.6M852.0 576.2L813.3 581.0M815.3 541.8L813.0 580.8M815.3 541.8L776.6 546.5M815.3 541.8L794.8 563.7M778.6 507.3L776.3 546.3M778.6 507.3L739.9 512.1M741.9 472.9L739.6 511.8M741.9 472.9L703.2 477.6M741.9 472.9L721.4 494.7M705.2 438.4L702.9 477.4M705.2 438.4L666.5 443.2M668.5 403.9L666.2 442.9M668.5 403.9L629.8 408.7M668.5 403.9L648.0 425.8M631.8 369.5L638.4 416.8M631.8 369.5L603.1 417.9M596.4 381.2L636.4 414.9M596.4 381.2L601.1 420.0M596.4 381.2L618.3 401.8M561.9 417.9L600.9 420.3M561.9 417.9L566.7 456.7M527.5 454.6L566.5 457.0M527.5 454.6L538.6 493.2M527.5 454.6L549.3 475.2" stroke="#c4c4c4" stroke-width="2" fill="none"/><path d="M535.3 490.1L749.5 691.2M749.5 691.2L750.2 691.9M750.2 691.9L751.6 693.3M751.6 693.3L752.3 694.0M752.3 694.0L759.4 701.7M759.4 701.7L760.1 702.4M760.1 702.4L761.4 703.9M761.4 703.9L762.0 704.6M762.0 704.6L929.2 908.9M929.2 908.9L929.4 909.1M929.4 909.1L929.6 909.4M929.6 909.4L930.7 910.6M930.7 910.6L1133.8 1143.6M1133.8 1143.6L1133.8 1143.6M1133.8 1143.6L1134.0 1143.8M1134.0 1143.8L1134.0 1143.9M1134.0 1143.9L1134.8 1144.8M1134.8 1144.8L1134.9 1144.8M1134.9 1144.8L1135.0 1145.0M1135.0 1145.0L1135.1 1145.1M1135.1 1145.1L1343.9 1391.8M1343.9 1391.8L1344.2 1392.0M1344.2 1392.0L1476.4 1544.2M1476.4 1544.2L1796.8 1908.7M1796.8 1908.7L1796.8 1908.7M1796.8 1908.7L1796.8 1908.8M1796.8 1908.8L1796.9 1908.8M1796.9 1908.8L1889.1 2014.2M1889.1 2014.2L1982.4 1932.5M1982.4 1932.5L1890.3 1827.3M1890.3 1827.3L1723.3 1637.4M1723.3 1637.4L1722.9 1636.8M1722.9 1636.8L1721.9 1635.7M1721.9 1635.7L1721.4 1635.1M1721.4 1635.1L1717.0 1629.5M1717.0 1629.5L1716.1 1628.3M1716.1 1628.3L1714.4 1625.9M1714.4 1625.9L1713.5 1624.7M1713.5 1624.7L1710.1 1619.3M1710.1 1619.3L1709.3 1618.0M1709.3 1618.0L1707.8 1615.5M1707.8 1615.5L1707.1 1614.2M1707.1 1614.2L1704.2 1608.5M1704.2 1608.5L1703.5 1607.1M1703.5 1607.1L1702.3 1604.4M1702.3 1604.4L1701.7 1603.1M1701.7 1603.1L1699.4 1597.1M1699.4 1597.1L1698.9 1595.7M1698.9 1595.7L1697.9 1592.9M1697.9 1592.9L1697.5 1591.5M1697.5 1591.5L1695.7 1585.3M1695.7 1585.3L1695.3 1583.9M1695.3 1583.9L1694.7 1581.0M1694.7 1581.0L1694.4 1579.6M1694.4 1579.6L1693.2 1573.2M1693.2 1573.2L1693.0 1571.8M1693.0 1571.8L1692.6 1568.8M1692.6 1568.8L1692.5 1567.4M1692.5 1567.4L1692.0 1561.0M1692.0 1561.0L1691.9 1559.5M1691.9 1559.5L1691.8 1556.5M1691.8 1556.5L1691.8 1555.0M1691.8 1555.0L1691.9 1548.6M1691.9 1548.6L1692.0 1547.2M1692.0 1547.2L1692.2 1544.2M1692.2 1544.2L1692.3 1542.7M1692.3 1542.7L1693.1 1536.4M1693.1 1536.4L1693.3 1534.9M1693.3 1534.9L1693.8 1532.0M1693.8 1532.0L1694.1 1530.5M1694.1 1530.5L1695.5 1524.3M1695.5 1524.3L1695.8 1522.8M1695.8 1522.8L1696.6 1520.0M1696.6 1520.0L1697.0 1518.5M1697.0 1518.5L1699.0 1512.4M1699.0 1512.4L1699.5 1511.0M1699.5 1511.0L1700.6 1508.3M1700.6 1508.3L1701.1 1506.9M1701.1 1506.9L1703.7 1501.0M1703.7 1501.0L1704.4 1499.7M1704.4 1499.7L1705.7 1497.1M1705.7 1497.1L1706.4 1495.7M1706.4 1495.7L1709.5 1490.2M1709.5 1490.2L1710.3 1488.9M1710.3 1488.9L1711.9 1486.4M1711.9 1486.4L1712.7 1485.1M1712.7 1485.1L1716.4 1479.9M1716.4 1479.9L1717.3 1478.7M1717.3 1478.7L1719.1 1476.4M1719.1 1476.4L1720.0 1475.2M1720.0 1475.2L1724.2 1470.4M1724.2 1470.4L1725.2 1469.3M1725.2 1469.3L1727.2 1467.1M1727.2 1467.1L1728.3 1466.1M1728.3 1466.1L1732.9 1461.6M1732.9 1461.6L1734.0 1460.7M1734.0 1460.7L1736.3 1458.7M1736.3 1458.7L1737.4 1457.8M1737.4 1457.8L1742.5 1453.8M1742.5 1453.8L1743.7 1453.0M1743.7 1453.0L1746.1 1451.2M1746.1 1451.2L1747.3 1450.4M1747.3 1450.4L1753.4 1446.6M1753.4 1446.6L1754.0 1446.2M1754.0 1446.2L1755.3 1445.5M1755.3 1445.5L1755.9 1445.1M1755.9 1445.1L1929.1 1347.3M1929.1 1347.3L1930.1 1346.7M1930.1 1346.7L1976.6 1319.4M1976.6 1319.4L1977.7 1318.8M1977.7 1318.8L1979.9 1317.7M1979.9 1317.7L1982.1 1316.6M1982.1 1316.6L1984.4 1315.6M1984.4 1315.6L1986.7 1314.7M1986.7 1314.7L1987.8 1314.3M1987.8 1314.3L1992.5 1311.6M1992.5 1311.6L2003.1 1305.3M2003.1 1305.3L2015.7 1297.8M2015.7 1297.8L2029.7 1289.5M2029.7 1289.5L2044.3 1280.9M2044.3 1280.9L2044.3 1280.8M2044.3 1280.8L2058.8 1272.3M2058.8 1272.3L2058.8 1272.3M2058.8 1272.3L2058.9 1272.3M2058.9 1272.3L2058.9 1272.3M2058.9 1272.3L2072.5 1264.3M2072.5 1264.3L2072.6 1264.2M2072.6 1264.2L2072.7 1264.2M2072.7 1264.2L2072.7 1264.1M2072.7 1264.1L2084.9 1257.1M2084.9 1257.1L2084.9 1257.1M2084.9 1257.1L2085.0 1257.0M2085.0 1257.0L2085.1 1257.0M2085.1 1257.0L2096.1 1250.6M2096.1 1250.6L2096.1 1250.6M2096.1 1250.6L2096.2 1250.6M2096.2 1250.6L2096.3 1250.5M2096.3 1250.5L2107.0 1244.4M2107.0 1244.4L2107.0 1244.4M2107.0 1244.4L2107.1 1244.4M2107.1 1244.4L2107.2 1244.3M2107.2 1244.3L2117.6 1238.5M2117.6 1238.5L2117.6 1238.5M2117.6 1238.5L2117.7 1238.4M2117.7 1238.4L2117.7 1238.4M2117.7 1238.4L2127.8 1232.7M2127.8 1232.7L2127.8 1232.7M2127.8 1232.7L2127.9 1232.7M2127.9 1232.7L2127.9 1232.7M2127.9 1232.7L2137.7 1227.2M2137.7 1227.2L2137.8 1227.2M2137.8 1227.2L2147.3 1221.9M2147.3 1221.9L2156.5 1216.7M2156.5 1216.7L2165.4 1211.8M2165.4 1211.8L2165.5 1211.8M2165.5 1211.8L2173.9 1207.1M2173.9 1207.1L2173.9 1207.1M2173.9 1207.1L2174.1 1207.0M2174.1 1207.0L2174.1 1207.0M2174.1 1207.0L2182.0 1202.6M2182.0 1202.6L2182.1 1202.6M2182.1 1202.6L2182.2 1202.6M2182.2 1202.6L2182.2 1202.5M2182.2 1202.5L2189.8 1198.4M2189.8 1198.4L2189.8 1198.4M2189.8 1198.4L2197.2 1194.4M2197.2 1194.4L2204.3 1190.5M2204.3 1190.5L2211.2 1186.7M2211.2 1186.7L2218.1 1182.9M2218.1 1182.9L2225.1 1179.0M2225.1 1179.0L2231.9 1175.1M2231.9 1175.1L2238.4 1171.2M2238.4 1171.2L2245.1 1167.2M2245.1 1167.2L2251.7 1163.2M2251.7 1163.2L2251.8 1163.1M2251.8 1163.1L2258.4 1159.1M2258.4 1159.1L2258.5 1159.0M2258.5 1159.0L2258.7 1159.0M2258.7 1159.0L2258.8 1158.9M2258.8 1158.9L2265.5 1154.9M2265.5 1154.9L2265.6 1154.8M2265.6 1154.8L2265.9 1154.7M2265.9 1154.7L2266.0 1154.6M2266.0 1154.6L2273.0 1150.5M2273.0 1150.5L2273.2 1150.4M2273.2 1150.4L2273.5 1150.2M2273.5 1150.2L2273.7 1150.1M2273.7 1150.1L2281.2 1145.9M2281.2 1145.9L2289.2 1141.3M2289.2 1141.3L2297.8 1136.4M2297.8 1136.4L2306.6 1131.3M2306.6 1131.3L2306.7 1131.2M2306.7 1131.2L2306.9 1131.1M2306.9 1131.1L2307.0 1131.0M2307.0 1131.0L2315.9 1126.0M2315.9 1126.0L2316.1 1125.9M2316.1 1125.9L2316.5 1125.6M2316.5 1125.6L2316.8 1125.5M2316.8 1125.5L2325.5 1120.7M2325.5 1120.7L2325.8 1120.5M2325.8 1120.5L2326.5 1120.2M2326.5 1120.2L2326.9 1120.0M2326.9 1120.0L2335.4 1115.6M2335.4 1115.6L2335.9 1115.4M2335.9 1115.4L2336.9 1114.9M2336.9 1114.9L2337.4 1114.7M2337.4 1114.7L2345.5 1110.9M2345.5 1110.9L2346.1 1110.6M2346.1 1110.6L2347.5 1110.0M2347.5 1110.0L2348.2 1109.7M2348.2 1109.7L2355.9 1106.5M2355.9 1106.5L2356.7 1106.2M2356.7 1106.2L2358.2 1105.7M2358.2 1105.7L2359.0 1105.4M2359.0 1105.4L2366.8 1102.7M2366.8 1102.7L2367.4 1102.5M2367.4 1102.5L2368.6 1102.1M2368.6 1102.1L2369.2 1101.9M2369.2 1101.9L2377.6 1099.4M2377.6 1099.4L2378.1 1099.2M2378.1 1099.2L2379.2 1098.9M2379.2 1098.9L2379.7 1098.8M2379.7 1098.8L2388.3 1096.6M2388.3 1096.6L2388.8 1096.4M2388.8 1096.4L2389.8 1096.2M2389.8 1096.2L2390.3 1096.1M2390.3 1096.1L2398.9 1094.1M2398.9 1094.1L2399.4 1094.0M2399.4 1094.0L2400.2 1093.9M2400.2 1093.9L2400.7 1093.8M2400.7 1093.8L2409.2 1092.1M2409.2 1092.1L2409.6 1092.0M2409.6 1092.0L2410.5 1091.9M2410.5 1091.9L2410.9 1091.8M2410.9 1091.8L2419.1 1090.5M2419.1 1090.5L2419.6 1090.4M2419.6 1090.4L2420.4 1090.3M2420.4 1090.3L2420.8 1090.2M2420.8 1090.2L2428.6 1089.2M2428.6 1089.2L2429.0 1089.1M2429.0 1089.1L2429.9 1089.0M2429.9 1089.0L2430.3 1089.0M2430.3 1089.0L2437.1 1088.2M2437.1 1088.2L2437.8 1088.2M2437.8 1088.2L2439.2 1088.1M2439.2 1088.1L2439.9 1088.0M2439.9 1088.0L2445.7 1087.7M2445.7 1087.7L2446.6 1087.6M2446.6 1087.6L2448.5 1087.6M2448.5 1087.6L2449.4 1087.6M2449.4 1087.6L2454.5 1087.6M2454.5 1087.6L2455.4 1087.6M2455.4 1087.6L2457.1 1087.7M2457.1 1087.7L2458.0 1087.7M2458.0 1087.7L2462.8 1088.0M2462.8 1088.0L2463.6 1088.1M2463.6 1088.1L2465.2 1088.2M2465.2 1088.2L2465.9 1088.3M2465.9 1088.3L2470.2 1088.8M2470.2 1088.8L2433.1 1008.2M2433.1 1008.2L2374.8 896.5M2374.8 896.5L2373.5 894.9M2373.5 894.9L2372.9 896.6M2372.9 896.6L2372.5 897.6M2372.5 897.6L2371.7 899.5M2371.7 899.5L2371.3 900.5M2371.3 900.5L2369.7 903.9M2369.7 903.9L2369.3 904.8M2369.3 904.8L2368.5 906.5M2368.5 906.5L2368.1 907.3M2368.1 907.3L2366.1 911.0M2366.1 911.0L2365.7 911.7M2365.7 911.7L2364.9 913.2M2364.9 913.2L2364.5 913.9M2364.5 913.9L2362.1 917.7M2362.1 917.7L2361.7 918.5M2361.7 918.5L2360.7 920.0M2360.7 920.0L2360.2 920.8M2360.2 920.8L2357.5 924.7M2357.5 924.7L2356.9 925.5M2356.9 925.5L2355.8 926.9M2355.8 926.9L2355.3 927.7M2355.3 927.7L2352.0 931.8M2352.0 931.8L2351.6 932.4M2351.6 932.4L2350.6 933.5M2350.6 933.5L2350.1 934.1M2350.1 934.1L2346.3 938.6M2346.3 938.6L2345.9 939.0M2345.9 939.0L2345.0 939.9M2345.0 939.9L2344.6 940.4M2344.6 940.4L2340.2 945.0M2340.2 945.0L2339.9 945.4M2339.9 945.4L2339.2 946.1M2339.2 946.1L2338.8 946.5M2338.8 946.5L2334.0 951.2M2334.0 951.2L2333.7 951.5M2333.7 951.5L2333.1 952.1M2333.1 952.1L2332.8 952.4M2332.8 952.4L2327.6 957.2M2327.6 957.2L2327.4 957.5M2327.4 957.5L2326.9 958.0M2326.9 958.0L2326.6 958.2M2326.6 958.2L2321.2 963.0M2321.2 963.0L2321.0 963.2M2321.0 963.2L2320.5 963.6M2320.5 963.6L2320.3 963.8M2320.3 963.8L2314.9 968.5M2314.9 968.5L2314.5 968.8M2314.5 968.8L2313.9 969.3M2313.9 969.3L2313.5 969.6M2313.5 969.6L2308.1 974.0M2308.1 974.0L2307.7 974.3M2307.7 974.3L2306.8 975.0M2306.8 975.0L2306.4 975.3M2306.4 975.3L2300.7 979.6M2300.7 979.6L2300.4 979.8M2300.4 979.8L2299.7 980.3M2299.7 980.3L2299.3 980.6M2299.3 980.6L2293.2 984.9M2293.2 984.9L2293.0 985.1M2293.0 985.1L2292.4 985.5M2292.4 985.5L2292.2 985.6M2292.2 985.6L2285.7 990.0M2285.7 990.0L2285.5 990.1M2285.5 990.1L2285.2 990.4M2285.2 990.4L2285.0 990.5M2285.0 990.5L2278.2 995.0M2278.2 995.0L2278.1 995.0M2278.1 995.0L2277.9 995.2M2277.9 995.2L2277.8 995.2M2277.8 995.2L2270.7 999.8M2270.7 999.8L2263.6 1004.4M2263.6 1004.4L2256.5 1009.1M2256.5 1009.1L2249.4 1013.7M2249.4 1013.7L2249.3 1013.8M2249.3 1013.8L2249.2 1013.9M2249.2 1013.9L2249.1 1013.9M2249.1 1013.9L2242.2 1018.4M2242.2 1018.4L2242.1 1018.4M2242.1 1018.4L2242.0 1018.5M2242.0 1018.5L2241.9 1018.6M2241.9 1018.6L2235.0 1023.0M2235.0 1023.0L2234.9 1023.0M2234.9 1023.0L2234.8 1023.1M2234.8 1023.1L2234.7 1023.2M2234.7 1023.2L2227.7 1027.6M2227.7 1027.6L2227.6 1027.7M2227.6 1027.7L2227.5 1027.7M2227.5 1027.7L2227.5 1027.7M2227.5 1027.7L2220.2 1032.3M2220.2 1032.3L2220.1 1032.4M2220.1 1032.4L2220.1 1032.4M2220.1 1032.4L2220.0 1032.4M2220.0 1032.4L2212.4 1037.2M2212.4 1037.2L2212.4 1037.2M2212.4 1037.2L2204.3 1042.2M2204.3 1042.2L2195.8 1047.5M2195.8 1047.5L2186.9 1053.0M2186.9 1053.0L2177.7 1058.7M2177.7 1058.7L2177.6 1058.8M2177.6 1058.8L2168.1 1064.6M2168.1 1064.6L2168.1 1064.7M2168.1 1064.7L2158.2 1070.7M2158.2 1070.7L2158.2 1070.7M2158.2 1070.7L2158.2 1070.8M2158.2 1070.8L2158.1 1070.8M2158.1 1070.8L2148.0 1077.0M2148.0 1077.0L2148.0 1077.0M2148.0 1077.0L2148.0 1077.0M2148.0 1077.0L2147.9 1077.0M2147.9 1077.0L2137.5 1083.4M2137.5 1083.4L2137.5 1083.4M2137.5 1083.4L2137.4 1083.4M2137.4 1083.4L2137.4 1083.5M2137.4 1083.5L2126.7 1090.0M2126.7 1090.0L2126.6 1090.0M2126.6 1090.0L2126.6 1090.0M2126.6 1090.0L2126.5 1090.0M2126.5 1090.0L2115.5 1096.7M2115.5 1096.7L2115.5 1096.7M2115.5 1096.7L2115.4 1096.8M2115.4 1096.8L2115.3 1096.8M2115.3 1096.8L2115.3 1096.8M2115.3 1096.8L2113.9 1097.6M2113.9 1097.6L2111.3 1099.0M2111.3 1099.0L2108.6 1100.3M2108.6 1100.3L2105.8 1101.4M2105.8 1101.4L2103.0 1102.4M2103.0 1102.4L2100.2 1103.2M2100.2 1103.2L1869.1 1238.8M1869.1 1238.8L1869.0 1238.8M1869.0 1238.8L1868.7 1238.9M1868.7 1238.9L1868.6 1239.0M1868.6 1239.0L1867.5 1239.6M1867.5 1239.6L1867.4 1239.7M1867.4 1239.7L1867.2 1239.8M1867.2 1239.8L1867.1 1239.9M1867.1 1239.9L1627.3 1375.3M1627.3 1375.3L1626.7 1375.6M1626.7 1375.6L1625.4 1376.3M1625.4 1376.3L1624.7 1376.7M1624.7 1376.7L1618.4 1379.9M1618.4 1379.9L1617.1 1380.5M1617.1 1380.5L1614.4 1381.7M1614.4 1381.7L1613.0 1382.2M1613.0 1382.2L1607.1 1384.5M1607.1 1384.5L1605.7 1385.0M1605.7 1385.0L1602.9 1385.9M1602.9 1385.9L1601.5 1386.3M1601.5 1386.3L1595.4 1388.0M1595.4 1388.0L1594.0 1388.4M1594.0 1388.4L1591.1 1389.0M1591.1 1389.0L1589.7 1389.3M1589.7 1389.3L1583.4 1390.4M1583.4 1390.4L1582.0 1390.6M1582.0 1390.6L1579.1 1391.0M1579.1 1391.0L1577.6 1391.1M1577.6 1391.1L1571.3 1391.6M1571.3 1391.6L1569.8 1391.7M1569.8 1391.7L1566.9 1391.7M1566.9 1391.7L1565.4 1391.7M1565.4 1391.7L1559.0 1391.6M1559.0 1391.6L1557.6 1391.5M1557.6 1391.5L1554.6 1391.3M1554.6 1391.3L1553.2 1391.2M1553.2 1391.2L1546.9 1390.4M1546.9 1390.4L1545.4 1390.2M1545.4 1390.2L1542.5 1389.7M1542.5 1389.7L1541.1 1389.4M1541.1 1389.4L1534.9 1388.0M1534.9 1388.0L1533.5 1387.6M1533.5 1387.6L1530.6 1386.9M1530.6 1386.9L1529.2 1386.4M1529.2 1386.4L1523.2 1384.5M1523.2 1384.5L1521.8 1384.0M1521.8 1384.0L1519.1 1382.9M1519.1 1382.9L1517.7 1382.4M1517.7 1382.4L1511.9 1379.8M1511.9 1379.8L1510.6 1379.2M1510.6 1379.2L1508.0 1377.9M1508.0 1377.9L1506.7 1377.2M1506.7 1377.2L1501.1 1374.0M1501.1 1374.0L1499.9 1373.3M1499.9 1373.3L1497.4 1371.7M1497.4 1371.7L1496.2 1370.9M1496.2 1370.9L1491.0 1367.3M1491.0 1367.3L1489.8 1366.4M1489.8 1366.4L1487.5 1364.6M1487.5 1364.6L1486.3 1363.7M1486.3 1363.7L1481.5 1359.5M1481.5 1359.5L1480.4 1358.6M1480.4 1358.6L1478.3 1356.5M1478.3 1356.5L1477.2 1355.5M1477.2 1355.5L1472.3 1350.4M1472.3 1350.4L1471.8 1349.8M1471.8 1349.8L1470.8 1348.8M1470.8 1348.8L1470.4 1348.2M1470.4 1348.2L1439.1 1312.2M1439.1 1312.2L1439.0 1312.1M1439.0 1312.1L1438.9 1312.0M1438.9 1312.0L1438.8 1311.9M1438.8 1311.9L1438.2 1311.1M1438.2 1311.1L1438.1 1311.1M1438.1 1311.1L1438.0 1310.9M1438.0 1310.9L1437.9 1310.9M1437.9 1310.9L1229.1 1064.2M1229.1 1064.2L1228.4 1063.4M1228.4 1063.4L1026.1 831.4M1026.1 831.4L1026.0 831.2M1026.0 831.2L1025.7 830.9M1025.7 830.9L1025.5 830.7M1025.5 830.7L1023.9 828.8M1023.9 828.8L1023.8 828.6M1023.8 828.6L1023.5 828.3M1023.5 828.3L1023.3 828.1M1023.3 828.1L850.9 617.4M850.9 617.4L849.5 615.8M849.5 615.8L844.1 610.0M844.1 610.0L842.6 608.5M842.6 608.5L620.2 399.7M620.2 399.7L535.3 490.1" stroke="#c4c4c4" stroke-width="4" fill="none"/><path d="M545.2 489.8L754.3 686.1M754.3 686.1L755.2 687.0M755.2 687.0L756.6 688.4M756.6 688.4L757.4 689.2M757.4 689.2L764.5 696.9M764.5 696.9L765.4 697.8M765.4 697.8L766.6 699.3M766.6 699.3L767.4 700.2M767.4 700.2L934.6 904.4M934.6 904.4L934.8 904.6M934.8 904.6L935.0 904.9M935.0 904.9L936.0 906.1M936.0 906.1L1139.0 1139.0M1139.0 1139.0L1139.1 1139.1M1139.1 1139.1L1139.3 1139.2M1139.3 1139.2L1139.4 1139.3M1139.4 1139.3L1140.1 1140.2M1140.1 1140.2L1140.2 1140.3M1140.2 1140.3L1140.3 1140.5M1140.3 1140.5L1140.4 1140.6M1140.4 1140.6L1349.3 1387.2M1349.3 1387.2L1349.5 1387.5M1349.5 1387.5L1481.6 1539.6M1481.6 1539.6L1802.0 1904.1M1802.0 1904.1L1802.0 1904.1M1802.0 1904.1L1802.1 1904.2M1802.1 1904.2L1802.1 1904.2M1802.1 1904.2L1889.7 2004.3M1889.7 2004.3L1972.5 1931.9M1972.5 1931.9L1885.0 1831.9M1885.0 1831.9L1718.1 1642.0M1718.1 1642.0L1717.5 1641.3M1717.5 1641.3L1716.5 1640.2M1716.5 1640.2L1716.0 1639.5M1716.0 1639.5L1711.5 1633.9M1711.5 1633.9L1710.4 1632.4M1710.4 1632.4L1708.7 1630.0M1708.7 1630.0L1707.6 1628.5M1707.6 1628.5L1704.2 1623.1M1704.2 1623.1L1703.2 1621.5M1703.2 1621.5L1701.7 1619.0M1701.7 1619.0L1700.9 1617.4M1700.9 1617.4L1697.9 1611.7M1697.9 1611.7L1697.1 1610.0M1697.1 1610.0L1695.9 1607.3M1695.9 1607.3L1695.2 1605.6M1695.2 1605.6L1692.9 1599.7M1692.9 1599.7L1692.2 1598.0M1692.2 1598.0L1691.3 1595.1M1691.3 1595.1L1690.7 1593.4M1690.7 1593.4L1689.0 1587.2M1689.0 1587.2L1688.5 1585.5M1688.5 1585.5L1687.9 1582.6M1687.9 1582.6L1687.5 1580.8M1687.5 1580.8L1686.4 1574.5M1686.4 1574.5L1686.1 1572.7M1686.1 1572.7L1685.7 1569.7M1685.7 1569.7L1685.5 1567.9M1685.5 1567.9L1685.0 1561.5M1685.0 1561.5L1684.9 1559.7M1684.9 1559.7L1684.8 1556.7M1684.8 1556.7L1684.8 1554.9M1684.8 1554.9L1684.9 1548.5M1684.9 1548.5L1685.0 1546.7M1685.0 1546.7L1685.2 1543.7M1685.2 1543.7L1685.4 1541.9M1685.4 1541.9L1686.1 1535.5M1686.1 1535.5L1686.4 1533.7M1686.4 1533.7L1686.9 1530.8M1686.9 1530.8L1687.3 1529.0M1687.3 1529.0L1688.6 1522.7M1688.6 1522.7L1689.1 1521.0M1689.1 1521.0L1689.9 1518.1M1689.9 1518.1L1690.4 1516.4M1690.4 1516.4L1692.4 1510.3M1692.4 1510.3L1693.0 1508.5M1693.0 1508.5L1694.0 1505.8M1694.0 1505.8L1694.7 1504.1M1694.7 1504.1L1697.3 1498.2M1697.3 1498.2L1698.1 1496.6M1698.1 1496.6L1699.4 1493.9M1699.4 1493.9L1700.3 1492.3M1700.3 1492.3L1703.4 1486.7M1703.4 1486.7L1704.4 1485.1M1704.4 1485.1L1705.9 1482.6M1705.9 1482.6L1707.0 1481.1M1707.0 1481.1L1710.6 1475.9M1710.6 1475.9L1711.7 1474.4M1711.7 1474.4L1713.5 1472.1M1713.5 1472.1L1714.7 1470.7M1714.7 1470.7L1718.9 1465.8M1718.9 1465.8L1720.1 1464.4M1720.1 1464.4L1722.2 1462.3M1722.2 1462.3L1723.5 1461.0M1723.5 1461.0L1728.1 1456.6M1728.1 1456.6L1729.5 1455.4M1729.5 1455.4L1731.7 1453.4M1731.7 1453.4L1733.1 1452.3M1733.1 1452.3L1738.2 1448.3M1738.2 1448.3L1739.6 1447.2M1739.6 1447.2L1742.1 1445.5M1742.1 1445.5L1743.6 1444.5M1743.6 1444.5L1749.6 1440.7M1749.6 1440.7L1750.4 1440.2M1750.4 1440.2L1751.7 1439.4M1751.7 1439.4L1752.5 1439.0M1752.5 1439.0L1925.6 1341.2M1925.6 1341.2L1926.6 1340.6M1926.6 1340.6L1973.1 1313.4M1973.1 1313.4L1974.4 1312.6M1974.4 1312.6L1976.6 1311.5M1976.6 1311.5L1979.3 1310.2M1979.3 1310.2L1981.6 1309.2M1981.6 1309.2L1984.4 1308.1M1984.4 1308.1L1984.9 1307.9M1984.9 1307.9L1989.0 1305.5M1989.0 1305.5L1999.6 1299.3M1999.6 1299.3L2012.2 1291.8M2012.2 1291.8L2026.1 1283.5M2026.1 1283.5L2040.7 1274.9M2040.7 1274.9L2040.8 1274.8M2040.8 1274.8L2055.2 1266.3M2055.2 1266.3L2055.3 1266.3M2055.3 1266.3L2055.3 1266.2M2055.3 1266.2L2055.4 1266.2M2055.4 1266.2L2069.0 1258.2M2069.0 1258.2L2069.1 1258.2M2069.1 1258.2L2069.2 1258.1M2069.2 1258.1L2069.2 1258.1M2069.2 1258.1L2081.3 1251.1M2081.3 1251.1L2081.4 1251.0M2081.4 1251.0L2081.5 1250.9M2081.5 1250.9L2081.6 1250.9M2081.6 1250.9L2092.6 1244.6M2092.6 1244.6L2092.7 1244.5M2092.7 1244.5L2092.8 1244.5M2092.8 1244.5L2092.8 1244.4M2092.8 1244.4L2103.5 1238.4M2103.5 1238.4L2103.6 1238.3M2103.6 1238.3L2103.7 1238.3M2103.7 1238.3L2103.7 1238.2M2103.7 1238.2L2114.1 1232.4M2114.1 1232.4L2114.2 1232.3M2114.2 1232.3L2114.2 1232.3M2114.2 1232.3L2114.3 1232.3M2114.3 1232.3L2124.4 1226.6M2124.4 1226.6L2124.4 1226.6M2124.4 1226.6L2124.5 1226.6M2124.5 1226.6L2124.5 1226.6M2124.5 1226.6L2134.3 1221.1M2134.3 1221.1L2134.4 1221.1M2134.4 1221.1L2143.9 1215.7M2143.9 1215.7L2153.1 1210.6M2153.1 1210.6L2162.0 1205.7M2162.0 1205.7L2162.1 1205.6M2162.1 1205.6L2170.5 1201.0M2170.5 1201.0L2170.6 1200.9M2170.6 1200.9L2170.7 1200.9M2170.7 1200.9L2170.8 1200.8M2170.8 1200.8L2178.7 1196.5M2178.7 1196.5L2178.7 1196.5M2178.7 1196.5L2178.8 1196.4M2178.8 1196.4L2178.8 1196.4M2178.8 1196.4L2186.4 1192.3M2186.4 1192.3L2186.5 1192.2M2186.5 1192.2L2193.8 1188.2M2193.8 1188.2L2200.9 1184.4M2200.9 1184.4L2207.8 1180.6M2207.8 1180.6L2214.7 1176.8M2214.7 1176.8L2221.6 1172.9M2221.6 1172.9L2228.3 1169.0M2228.3 1169.0L2234.9 1165.1M2234.9 1165.1L2241.4 1161.2M2241.4 1161.2L2248.1 1157.2M2248.1 1157.2L2248.1 1157.1M2248.1 1157.1L2254.8 1153.1M2254.8 1153.1L2254.9 1153.0M2254.9 1153.0L2255.1 1152.9M2255.1 1152.9L2255.2 1152.9M2255.2 1152.9L2261.9 1148.9M2261.9 1148.9L2262.1 1148.8M2262.1 1148.8L2262.4 1148.6M2262.4 1148.6L2262.5 1148.5M2262.5 1148.5L2269.5 1144.5M2269.5 1144.5L2269.7 1144.4M2269.7 1144.4L2270.0 1144.2M2270.0 1144.2L2270.3 1144.0M2270.3 1144.0L2277.8 1139.8M2277.8 1139.8L2285.8 1135.3M2285.8 1135.3L2294.3 1130.3M2294.3 1130.3L2303.1 1125.2M2303.1 1125.2L2303.2 1125.1M2303.2 1125.1L2303.5 1125.0M2303.5 1125.0L2303.6 1124.9M2303.6 1124.9L2312.4 1119.9M2312.4 1119.9L2312.7 1119.8M2312.7 1119.8L2313.1 1119.5M2313.1 1119.5L2313.4 1119.4M2313.4 1119.4L2322.1 1114.6M2322.1 1114.6L2322.6 1114.4M2322.6 1114.4L2323.3 1114.0M2323.3 1114.0L2323.7 1113.8M2323.7 1113.8L2332.2 1109.4M2332.2 1109.4L2332.8 1109.1M2332.8 1109.1L2333.8 1108.6M2333.8 1108.6L2334.4 1108.3M2334.4 1108.3L2342.5 1104.5M2342.5 1104.5L2343.3 1104.1M2343.3 1104.1L2344.7 1103.5M2344.7 1103.5L2345.6 1103.2M2345.6 1103.2L2353.3 1100.0M2353.3 1100.0L2354.2 1099.7M2354.2 1099.7L2355.7 1099.1M2355.7 1099.1L2356.7 1098.8M2356.7 1098.8L2364.5 1096.0M2364.5 1096.0L2365.3 1095.8M2365.3 1095.8L2366.5 1095.4M2366.5 1095.4L2367.2 1095.2M2367.2 1095.2L2375.6 1092.7M2375.6 1092.7L2376.3 1092.5M2376.3 1092.5L2377.3 1092.2M2377.3 1092.2L2378.0 1092.0M2378.0 1092.0L2386.6 1089.8M2386.6 1089.8L2387.2 1089.6M2387.2 1089.6L2388.1 1089.4M2388.1 1089.4L2388.7 1089.3M2388.7 1089.3L2397.4 1087.3M2397.4 1087.3L2397.9 1087.2M2397.9 1087.2L2398.8 1087.0M2398.8 1087.0L2399.4 1086.9M2399.4 1086.9L2407.9 1085.2M2407.9 1085.2L2408.4 1085.2M2408.4 1085.2L2409.3 1085.0M2409.3 1085.0L2409.8 1084.9M2409.8 1084.9L2418.0 1083.6M2418.0 1083.6L2418.5 1083.5M2418.5 1083.5L2419.4 1083.4M2419.4 1083.4L2419.9 1083.3M2419.9 1083.3L2427.6 1082.2M2427.6 1082.2L2428.2 1082.2M2428.2 1082.2L2429.0 1082.1M2429.0 1082.1L2429.6 1082.0M2429.6 1082.0L2436.4 1081.3M2436.4 1081.3L2437.3 1081.2M2437.3 1081.2L2438.7 1081.1M2438.7 1081.1L2439.5 1081.0M2439.5 1081.0L2445.3 1080.7M2445.3 1080.7L2446.4 1080.6M2446.4 1080.6L2448.3 1080.6M2448.3 1080.6L2449.4 1080.6M2449.4 1080.6L2454.5 1080.6M2454.5 1080.6L2455.6 1080.6M2455.6 1080.6L2457.3 1080.7M2457.3 1080.7L2458.4 1080.7M2458.4 1080.7L2458.8 1080.7M2458.8 1080.7L2426.8 1011.3M2426.8 1011.3L2374.2 910.6M2374.2 910.6L2372.3 914.3M2372.3 914.3L2371.8 915.2M2371.8 915.2L2371.0 916.6M2371.0 916.6L2370.4 917.5M2370.4 917.5L2368.1 921.4M2368.1 921.4L2367.5 922.3M2367.5 922.3L2366.5 923.8M2366.5 923.8L2365.9 924.8M2365.9 924.8L2363.2 928.7M2363.2 928.7L2362.6 929.6M2362.6 929.6L2361.5 931.1M2361.5 931.1L2360.8 932.0M2360.8 932.0L2357.5 936.1M2357.5 936.1L2357.0 936.8M2357.0 936.8L2356.0 938.0M2356.0 938.0L2355.4 938.7M2355.4 938.7L2351.5 943.2M2351.5 943.2L2351.0 943.7M2351.0 943.7L2350.2 944.6M2350.2 944.6L2349.7 945.2M2349.7 945.2L2345.3 949.8M2345.3 949.8L2344.9 950.3M2344.9 950.3L2344.2 951.0M2344.2 951.0L2343.8 951.4M2343.8 951.4L2338.9 956.2M2338.9 956.2L2338.6 956.6M2338.6 956.6L2338.0 957.2M2338.0 957.2L2337.6 957.5M2337.6 957.5L2332.4 962.4M2332.4 962.4L2332.1 962.7M2332.1 962.7L2331.6 963.1M2331.6 963.1L2331.3 963.4M2331.3 963.4L2325.9 968.3M2325.9 968.3L2325.6 968.5M2325.6 968.5L2325.1 968.9M2325.1 968.9L2324.9 969.1M2324.9 969.1L2319.4 973.8M2319.4 973.8L2319.0 974.1M2319.0 974.1L2318.3 974.7M2318.3 974.7L2317.9 975.1M2317.9 975.1L2312.5 979.4M2312.5 979.4L2312.0 979.8M2312.0 979.8L2311.1 980.5M2311.1 980.5L2310.6 980.9M2310.6 980.9L2304.9 985.2M2304.9 985.2L2304.5 985.5M2304.5 985.5L2303.8 986.0M2303.8 986.0L2303.4 986.3M2303.4 986.3L2297.2 990.6M2297.2 990.6L2296.9 990.9M2296.9 990.9L2296.4 991.2M2296.4 991.2L2296.1 991.4M2296.1 991.4L2289.6 995.8M2289.6 995.8L2289.4 996.0M2289.4 996.0L2289.1 996.2M2289.1 996.2L2288.8 996.3M2288.8 996.3L2282.0 1000.8M2282.0 1000.8L2281.9 1000.9M2281.9 1000.9L2281.7 1001.0M2281.7 1001.0L2281.6 1001.1M2281.6 1001.1L2274.6 1005.7M2274.6 1005.7L2267.4 1010.3M2267.4 1010.3L2260.3 1014.9M2260.3 1014.9L2253.3 1019.6M2253.3 1019.6L2253.2 1019.6M2253.2 1019.6L2253.0 1019.7M2253.0 1019.7L2252.9 1019.8M2252.9 1019.8L2246.0 1024.3M2246.0 1024.3L2245.9 1024.3M2245.9 1024.3L2245.8 1024.4M2245.8 1024.4L2245.7 1024.5M2245.7 1024.5L2238.7 1028.9M2238.7 1028.9L2238.7 1028.9M2238.7 1028.9L2238.5 1029.0M2238.5 1029.0L2238.5 1029.1M2238.5 1029.1L2231.4 1033.5M2231.4 1033.5L2231.3 1033.6M2231.3 1033.6L2231.2 1033.6M2231.2 1033.6L2231.2 1033.7M2231.2 1033.7L2223.9 1038.3M2223.9 1038.3L2223.8 1038.3M2223.8 1038.3L2223.8 1038.3M2223.8 1038.3L2223.7 1038.4M2223.7 1038.4L2216.1 1043.1M2216.1 1043.1L2216.1 1043.1M2216.1 1043.1L2208.0 1048.1M2208.0 1048.1L2199.5 1053.4M2199.5 1053.4L2190.6 1059.0M2190.6 1059.0L2181.4 1064.7M2181.4 1064.7L2181.3 1064.7M2181.3 1064.7L2171.8 1070.6M2171.8 1070.6L2171.7 1070.6M2171.7 1070.6L2161.9 1076.7M2161.9 1076.7L2161.9 1076.7M2161.9 1076.7L2161.8 1076.7M2161.8 1076.7L2161.8 1076.8M2161.8 1076.8L2151.7 1082.9M2151.7 1082.9L2151.7 1083.0M2151.7 1083.0L2151.6 1083.0M2151.6 1083.0L2151.6 1083.0M2151.6 1083.0L2141.2 1089.4M2141.2 1089.4L2141.1 1089.4M2141.1 1089.4L2141.1 1089.4M2141.1 1089.4L2141.0 1089.5M2141.0 1089.5L2130.3 1095.9M2130.3 1095.9L2130.3 1096.0M2130.3 1096.0L2130.2 1096.0M2130.2 1096.0L2130.1 1096.0M2130.1 1096.0L2119.1 1102.7M2119.1 1102.7L2119.1 1102.7M2119.1 1102.7L2119.0 1102.8M2119.0 1102.8L2118.9 1102.8M2118.9 1102.8L2118.8 1102.8M2118.8 1102.8L2117.2 1103.8M2117.2 1103.8L2114.6 1105.2M2114.6 1105.2L2111.2 1106.7M2111.2 1106.7L2108.4 1107.9M2108.4 1107.9L2105.0 1109.1M2105.0 1109.1L2103.0 1109.7M2103.0 1109.7L1872.6 1244.8M1872.6 1244.8L1872.5 1244.9M1872.5 1244.9L1872.3 1245.0M1872.3 1245.0L1872.1 1245.1M1872.1 1245.1L1871.0 1245.7M1871.0 1245.7L1870.9 1245.8M1870.9 1245.8L1870.7 1245.9M1870.7 1245.9L1870.5 1246.0M1870.5 1246.0L1630.8 1381.4M1630.8 1381.4L1630.0 1381.8M1630.0 1381.8L1628.7 1382.5M1628.7 1382.5L1627.9 1382.9M1627.9 1382.9L1621.5 1386.1M1621.5 1386.1L1619.9 1386.9M1619.9 1386.9L1617.2 1388.1M1617.2 1388.1L1615.5 1388.8M1615.5 1388.8L1609.6 1391.0M1609.6 1391.0L1607.9 1391.6M1607.9 1391.6L1605.1 1392.6M1605.1 1392.6L1603.4 1393.1M1603.4 1393.1L1597.3 1394.8M1597.3 1394.8L1595.5 1395.2M1595.5 1395.2L1592.7 1395.9M1592.7 1395.9L1590.9 1396.2M1590.9 1396.2L1584.6 1397.3M1584.6 1397.3L1582.8 1397.6M1582.8 1397.6L1579.9 1397.9M1579.9 1397.9L1578.1 1398.1M1578.1 1398.1L1571.8 1398.6M1571.8 1398.6L1570.0 1398.7M1570.0 1398.7L1567.0 1398.7M1567.0 1398.7L1565.2 1398.7M1565.2 1398.7L1558.9 1398.6M1558.9 1398.6L1557.1 1398.5M1557.1 1398.5L1554.1 1398.3M1554.1 1398.3L1552.3 1398.1M1552.3 1398.1L1546.0 1397.3M1546.0 1397.3L1544.2 1397.1M1544.2 1397.1L1541.3 1396.6M1541.3 1396.6L1539.6 1396.2M1539.6 1396.2L1533.4 1394.8M1533.4 1394.8L1531.6 1394.4M1531.6 1394.4L1528.8 1393.6M1528.8 1393.6L1527.1 1393.1M1527.1 1393.1L1521.0 1391.1M1521.0 1391.1L1519.3 1390.5M1519.3 1390.5L1516.6 1389.5M1516.6 1389.5L1514.9 1388.8M1514.9 1388.8L1509.1 1386.2M1509.1 1386.2L1507.4 1385.4M1507.4 1385.4L1504.8 1384.1M1504.8 1384.1L1503.2 1383.3M1503.2 1383.3L1497.7 1380.1M1497.7 1380.1L1496.1 1379.2M1496.1 1379.2L1493.7 1377.7M1493.7 1377.7L1492.1 1376.7M1492.1 1376.7L1486.9 1373.0M1486.9 1373.0L1485.5 1371.9M1485.5 1371.9L1483.2 1370.1M1483.2 1370.1L1481.8 1369.0M1481.8 1369.0L1476.9 1364.9M1476.9 1364.9L1475.6 1363.6M1475.6 1363.6L1473.5 1361.6M1473.5 1361.6L1472.2 1360.3M1472.2 1360.3L1467.3 1355.2M1467.3 1355.2L1466.7 1354.6M1466.7 1354.6L1465.7 1353.5M1465.7 1353.5L1465.1 1352.8M1465.1 1352.8L1433.8 1316.8M1433.8 1316.8L1433.7 1316.7M1433.7 1316.7L1433.6 1316.5M1433.6 1316.5L1433.5 1316.4M1433.5 1316.4L1432.9 1315.7M1432.9 1315.7L1432.8 1315.6M1432.8 1315.6L1432.7 1315.5M1432.7 1315.5L1432.6 1315.4M1432.6 1315.4L1223.7 1068.7M1223.7 1068.7L1223.1 1068.0M1223.1 1068.0L1020.9 836.0M1020.9 836.0L1020.7 835.8M1020.7 835.8L1020.4 835.4M1020.4 835.4L1020.2 835.2M1020.2 835.2L1018.6 833.3M1018.6 833.3L1018.4 833.1M1018.4 833.1L1018.1 832.8M1018.1 832.8L1017.9 832.5M1017.9 832.5L845.5 621.9M845.5 621.9L844.3 620.5M844.3 620.5L839.0 614.9M839.0 614.9L837.7 613.5M837.7 613.5L620.5 409.6M620.5 409.6L545.2 489.8M552.3 489.6L757.7 682.5M757.7 682.5L758.7 683.5M758.7 683.5L760.1 684.8M760.1 684.8L761.1 685.8M761.1 685.8L768.2 693.5M768.2 693.5L769.1 694.5M769.1 694.5L770.4 696.0M770.4 696.0L771.3 697.0M771.3 697.0L938.4 901.2M938.4 901.2L938.9 901.7M938.9 901.7L939.8 902.8M939.8 902.8L1142.8 1135.7M1142.8 1135.7L1142.9 1135.8M1142.9 1135.8L1143.0 1135.9M1143.0 1135.9L1143.1 1136.1M1143.1 1136.1L1143.9 1136.9M1143.9 1136.9L1144.0 1137.1M1144.0 1137.1L1144.1 1137.2M1144.1 1137.2L1144.2 1137.3M1144.2 1137.3L1353.1 1384.0M1353.1 1384.0L1353.3 1384.2M1353.3 1384.2L1485.4 1536.3M1485.4 1536.3L1805.8 1900.8M1805.8 1900.8L1805.8 1900.8M1805.8 1900.8L1805.8 1900.9M1805.8 1900.9L1805.9 1900.9M1805.9 1900.9L1890.2 1997.3M1890.2 1997.3L1965.5 1931.4M1965.5 1931.4L1881.2 1835.2M1881.2 1835.2L1714.3 1645.3M1714.3 1645.3L1713.7 1644.5M1713.7 1644.5L1712.7 1643.4M1712.7 1643.4L1712.0 1642.6M1712.0 1642.6L1707.6 1637.0M1707.6 1637.0L1706.3 1635.3M1706.3 1635.3L1704.6 1632.9M1704.6 1632.9L1703.4 1631.2M1703.4 1631.2L1700.0 1625.8M1700.0 1625.8L1698.9 1624.0M1698.9 1624.0L1697.4 1621.5M1697.4 1621.5L1696.4 1619.7M1696.4 1619.7L1693.5 1613.9M1693.5 1613.9L1692.6 1612.1M1692.6 1612.1L1691.4 1609.4M1691.4 1609.4L1690.6 1607.5M1690.6 1607.5L1688.2 1601.5M1688.2 1601.5L1687.5 1599.6M1687.5 1599.6L1686.5 1596.8M1686.5 1596.8L1685.9 1594.8M1685.9 1594.8L1684.2 1588.6M1684.2 1588.6L1683.7 1586.6M1683.7 1586.6L1683.0 1583.7M1683.0 1583.7L1682.6 1581.7M1682.6 1581.7L1681.4 1575.4M1681.4 1575.4L1681.1 1573.3M1681.1 1573.3L1680.7 1570.4M1680.7 1570.4L1680.5 1568.3M1680.5 1568.3L1680.0 1561.9M1680.0 1561.9L1679.9 1559.8M1679.9 1559.8L1679.8 1556.9M1679.8 1556.9L1679.8 1554.8M1679.8 1554.8L1679.9 1548.4M1679.9 1548.4L1680.0 1546.3M1680.0 1546.3L1680.2 1543.4M1680.2 1543.4L1680.4 1541.3M1680.4 1541.3L1681.2 1534.9M1681.2 1534.9L1681.5 1532.9M1681.5 1532.9L1682.0 1530.0M1682.0 1530.0L1682.4 1527.9M1682.4 1527.9L1683.8 1521.7M1683.8 1521.7L1684.2 1519.7M1684.2 1519.7L1685.0 1516.8M1685.0 1516.8L1685.6 1514.8M1685.6 1514.8L1687.6 1508.7M1687.6 1508.7L1688.3 1506.8M1688.3 1506.8L1689.4 1504.0M1689.4 1504.0L1690.2 1502.1M1690.2 1502.1L1692.7 1496.2M1692.7 1496.2L1693.6 1494.3M1693.6 1494.3L1694.9 1491.7M1694.9 1491.7L1695.9 1489.8M1695.9 1489.8L1699.1 1484.3M1699.1 1484.3L1700.1 1482.5M1700.1 1482.5L1701.7 1480.0M1701.7 1480.0L1702.9 1478.2M1702.9 1478.2L1706.6 1473.0M1706.6 1473.0L1707.8 1471.3M1707.8 1471.3L1709.6 1469.0M1709.6 1469.0L1710.9 1467.4M1710.9 1467.4L1715.1 1462.5M1715.1 1462.5L1716.5 1461.0M1716.5 1461.0L1718.5 1458.8M1718.5 1458.8L1720.0 1457.4M1720.0 1457.4L1724.6 1453.0M1724.6 1453.0L1726.2 1451.6M1726.2 1451.6L1728.4 1449.6M1728.4 1449.6L1730.0 1448.3M1730.0 1448.3L1735.1 1444.4M1735.1 1444.4L1736.8 1443.1M1736.8 1443.1L1739.2 1441.4M1739.2 1441.4L1740.9 1440.3M1740.9 1440.3L1747.0 1436.5M1747.0 1436.5L1747.8 1435.9M1747.8 1435.9L1749.1 1435.2M1749.1 1435.2L1750.0 1434.6M1750.0 1434.6L1923.1 1336.9M1923.1 1336.9L1924.1 1336.3M1924.1 1336.3L1970.6 1309.1M1970.6 1309.1L1972.1 1308.2M1972.1 1308.2L1974.2 1307.1M1974.2 1307.1L1977.3 1305.6M1977.3 1305.6L1979.6 1304.6M1979.6 1304.6L1982.8 1303.4M1982.8 1303.4L1986.4 1301.2M1986.4 1301.2L1997.0 1295.0M1997.0 1295.0L2009.6 1287.5M2009.6 1287.5L2023.6 1279.2M2023.6 1279.2L2038.2 1270.6M2038.2 1270.6L2038.2 1270.5M2038.2 1270.5L2052.7 1262.0M2052.7 1262.0L2052.7 1262.0M2052.7 1262.0L2052.8 1261.9M2052.8 1261.9L2052.8 1261.9M2052.8 1261.9L2066.5 1253.9M2066.5 1253.9L2066.5 1253.9M2066.5 1253.9L2066.6 1253.8M2066.6 1253.8L2066.7 1253.8M2066.7 1253.8L2078.8 1246.7M2078.8 1246.7L2078.9 1246.7M2078.9 1246.7L2079.0 1246.6M2079.0 1246.6L2079.1 1246.6M2079.1 1246.6L2090.1 1240.2M2090.1 1240.2L2090.2 1240.2M2090.2 1240.2L2090.3 1240.1M2090.3 1240.1L2090.4 1240.1M2090.4 1240.1L2101.0 1234.0M2101.0 1234.0L2101.1 1234.0M2101.1 1234.0L2101.2 1233.9M2101.2 1233.9L2101.3 1233.9M2101.3 1233.9L2111.7 1228.0M2111.7 1228.0L2111.7 1228.0M2111.7 1228.0L2111.8 1228.0M2111.8 1228.0L2111.8 1227.9M2111.8 1227.9L2121.9 1222.3M2121.9 1222.3L2122.0 1222.2M2122.0 1222.2L2122.0 1222.2M2122.0 1222.2L2122.1 1222.2M2122.1 1222.2L2131.9 1216.7M2131.9 1216.7L2131.9 1216.7M2131.9 1216.7L2141.4 1211.4M2141.4 1211.4L2150.7 1206.3M2150.7 1206.3L2159.6 1201.3M2159.6 1201.3L2159.6 1201.3M2159.6 1201.3L2168.1 1196.6M2168.1 1196.6L2168.2 1196.5M2168.2 1196.5L2168.3 1196.5M2168.3 1196.5L2168.4 1196.4M2168.4 1196.4L2176.3 1192.1M2176.3 1192.1L2176.3 1192.1M2176.3 1192.1L2176.4 1192.0M2176.4 1192.0L2176.5 1192.0M2176.5 1192.0L2184.0 1187.9M2184.0 1187.9L2184.1 1187.8M2184.1 1187.8L2191.4 1183.9M2191.4 1183.9L2198.5 1180.0M2198.5 1180.0L2205.4 1176.2M2205.4 1176.2L2212.2 1172.4M2212.2 1172.4L2219.1 1168.6M2219.1 1168.6L2225.8 1164.7M2225.8 1164.7L2232.3 1160.9M2232.3 1160.9L2238.9 1156.9M2238.9 1156.9L2245.5 1152.9M2245.5 1152.9L2245.6 1152.8M2245.6 1152.8L2252.2 1148.8M2252.2 1148.8L2252.4 1148.8M2252.4 1148.8L2252.5 1148.7M2252.5 1148.7L2252.6 1148.6M2252.6 1148.6L2259.4 1144.6M2259.4 1144.6L2259.6 1144.5M2259.6 1144.5L2259.8 1144.3M2259.8 1144.3L2260.0 1144.2M2260.0 1144.2L2267.0 1140.1M2267.0 1140.1L2267.2 1140.0M2267.2 1140.0L2267.6 1139.8M2267.6 1139.8L2267.8 1139.7M2267.8 1139.7L2275.3 1135.5M2275.3 1135.5L2283.3 1130.9M2283.3 1130.9L2291.8 1126.0M2291.8 1126.0L2300.6 1120.9M2300.6 1120.9L2300.7 1120.8M2300.7 1120.8L2301.0 1120.7M2301.0 1120.7L2301.1 1120.6M2301.1 1120.6L2309.9 1115.6M2309.9 1115.6L2310.2 1115.4M2310.2 1115.4L2310.7 1115.1M2310.7 1115.1L2311.0 1115.0M2311.0 1115.0L2319.7 1110.2M2319.7 1110.2L2320.2 1109.9M2320.2 1109.9L2320.9 1109.6M2320.9 1109.6L2321.4 1109.3M2321.4 1109.3L2329.9 1105.0M2329.9 1105.0L2330.6 1104.6M2330.6 1104.6L2331.6 1104.1M2331.6 1104.1L2332.3 1103.8M2332.3 1103.8L2340.4 1100.0M2340.4 1100.0L2341.3 1099.6M2341.3 1099.6L2342.7 1099.0M2342.7 1099.0L2343.7 1098.6M2343.7 1098.6L2351.4 1095.4M2351.4 1095.4L2352.5 1095.0M2352.5 1095.0L2354.0 1094.4M2354.0 1094.4L2355.0 1094.0M2355.0 1094.0L2362.9 1091.3M2362.9 1091.3L2363.8 1091.0M2363.8 1091.0L2365.0 1090.6M2365.0 1090.6L2365.8 1090.4M2365.8 1090.4L2374.2 1087.9M2374.2 1087.9L2374.9 1087.7M2374.9 1087.7L2376.0 1087.4M2376.0 1087.4L2376.7 1087.2M2376.7 1087.2L2385.3 1084.9M2385.3 1084.9L2386.0 1084.8M2386.0 1084.8L2387.0 1084.5M2387.0 1084.5L2387.6 1084.4M2387.6 1084.4L2396.3 1082.4M2396.3 1082.4L2396.9 1082.3M2396.9 1082.3L2397.8 1082.1M2397.8 1082.1L2398.4 1082.0M2398.4 1082.0L2406.9 1080.3M2406.9 1080.3L2407.5 1080.2M2407.5 1080.2L2408.4 1080.1M2408.4 1080.1L2409.0 1080.0M2409.0 1080.0L2417.2 1078.6M2417.2 1078.6L2417.8 1078.5M2417.8 1078.5L2418.6 1078.4M2418.6 1078.4L2419.2 1078.3M2419.2 1078.3L2427.0 1077.3M2427.0 1077.3L2427.6 1077.2M2427.6 1077.2L2428.4 1077.1M2428.4 1077.1L2429.0 1077.0M2429.0 1077.0L2435.9 1076.3M2435.9 1076.3L2436.9 1076.2M2436.9 1076.2L2438.2 1076.1M2438.2 1076.1L2439.2 1076.0M2439.2 1076.0L2445.0 1075.7M2445.0 1075.7L2446.3 1075.6M2446.3 1075.6L2448.1 1075.6M2448.1 1075.6L2449.4 1075.6M2449.4 1075.6L2450.9 1075.6M2450.9 1075.6L2422.3 1013.5M2422.3 1013.5L2374.1 921.2M2374.1 921.2L2372.4 923.9M2372.4 923.9L2371.7 925.0M2371.7 925.0L2370.7 926.6M2370.7 926.6L2370.0 927.6M2370.0 927.6L2367.3 931.5M2367.3 931.5L2366.6 932.6M2366.6 932.6L2365.5 934.0M2365.5 934.0L2364.7 935.1M2364.7 935.1L2361.5 939.2M2361.5 939.2L2360.8 940.0M2360.8 940.0L2359.9 941.2M2359.9 941.2L2359.2 942.0M2359.2 942.0L2355.3 946.4M2355.3 946.4L2354.8 947.1M2354.8 947.1L2353.9 948.0M2353.9 948.0L2353.4 948.6M2353.4 948.6L2349.0 953.3M2349.0 953.3L2348.5 953.8M2348.5 953.8L2347.8 954.5M2347.8 954.5L2347.3 955.0M2347.3 955.0L2342.5 959.8M2342.5 959.8L2342.0 960.2M2342.0 960.2L2341.4 960.8M2341.4 960.8L2341.0 961.2M2341.0 961.2L2335.8 966.0M2335.8 966.0L2335.5 966.3M2335.5 966.3L2335.0 966.8M2335.0 966.8L2334.6 967.2M2334.6 967.2L2329.2 972.0M2329.2 972.0L2328.9 972.3M2328.9 972.3L2328.4 972.6M2328.4 972.6L2328.1 972.9M2328.1 972.9L2322.7 977.6M2322.7 977.6L2322.2 978.0M2322.2 978.0L2321.5 978.5M2321.5 978.5L2321.1 978.9M2321.1 978.9L2315.7 983.3M2315.7 983.3L2315.1 983.8M2315.1 983.8L2314.2 984.4M2314.2 984.4L2313.6 984.9M2313.6 984.9L2307.9 989.2M2307.9 989.2L2307.4 989.5M2307.4 989.5L2306.8 990.0M2306.8 990.0L2306.3 990.4M2306.3 990.4L2300.1 994.7M2300.1 994.7L2299.8 995.0M2299.8 995.0L2299.3 995.3M2299.3 995.3L2298.9 995.6M2298.9 995.6L2292.4 1000.0M2292.4 1000.0L2292.2 1000.1M2292.2 1000.1L2291.8 1000.4M2291.8 1000.4L2291.6 1000.5M2291.6 1000.5L2284.8 1005.0M2284.8 1005.0L2284.6 1005.1M2284.6 1005.1L2284.5 1005.2M2284.5 1005.2L2284.3 1005.3M2284.3 1005.3L2277.3 1009.9M2277.3 1009.9L2270.2 1014.5M2270.2 1014.5L2263.0 1019.1M2263.0 1019.1L2256.0 1023.7M2256.0 1023.7L2255.9 1023.8M2255.9 1023.8L2255.7 1023.9M2255.7 1023.9L2255.6 1024.0M2255.6 1024.0L2248.7 1028.5M2248.7 1028.5L2248.6 1028.5M2248.6 1028.5L2248.5 1028.6M2248.5 1028.6L2248.4 1028.7M2248.4 1028.7L2241.4 1033.1M2241.4 1033.1L2241.3 1033.2M2241.3 1033.2L2241.2 1033.2M2241.2 1033.2L2241.1 1033.3M2241.1 1033.3L2234.1 1037.8M2234.1 1037.8L2234.0 1037.8M2234.0 1037.8L2233.9 1037.9M2233.9 1037.9L2233.8 1037.9M2233.8 1037.9L2226.5 1042.5M2226.5 1042.5L2226.5 1042.5M2226.5 1042.5L2226.4 1042.6M2226.4 1042.6L2226.4 1042.6M2226.4 1042.6L2218.8 1047.3M2218.8 1047.3L2218.7 1047.4M2218.7 1047.4L2210.7 1052.4M2210.7 1052.4L2202.2 1057.7M2202.2 1057.7L2193.3 1063.2M2193.3 1063.2L2184.0 1068.9M2184.0 1068.9L2184.0 1069.0M2184.0 1069.0L2174.4 1074.8M2174.4 1074.8L2174.4 1074.9M2174.4 1074.9L2164.5 1080.9M2164.5 1080.9L2164.5 1081.0M2164.5 1081.0L2164.4 1081.0M2164.4 1081.0L2164.4 1081.0M2164.4 1081.0L2154.3 1087.2M2154.3 1087.2L2154.3 1087.2M2154.3 1087.2L2154.2 1087.3M2154.2 1087.3L2154.2 1087.3M2154.2 1087.3L2143.8 1093.6M2143.8 1093.6L2143.7 1093.7M2143.7 1093.7L2143.7 1093.7M2143.7 1093.7L2143.6 1093.7M2143.6 1093.7L2132.9 1100.2M2132.9 1100.2L2132.8 1100.3M2132.8 1100.3L2132.8 1100.3M2132.8 1100.3L2132.7 1100.3M2132.7 1100.3L2121.7 1107.0M2121.7 1107.0L2121.6 1107.0M2121.6 1107.0L2121.5 1107.1M2121.5 1107.1L2121.5 1107.1M2121.5 1107.1L2121.4 1107.1M2121.4 1107.1L2119.6 1108.2M2119.6 1108.2L2116.9 1109.6M2116.9 1109.6L2113.1 1111.4M2113.1 1111.4L2110.3 1112.5M2110.3 1112.5L2106.4 1113.9M2106.4 1113.9L2105.0 1114.3M2105.0 1114.3L1875.1 1249.1M1875.1 1249.1L1875.0 1249.2M1875.0 1249.2L1874.8 1249.3M1874.8 1249.3L1874.6 1249.4M1874.6 1249.4L1873.5 1250.0M1873.5 1250.0L1873.3 1250.1M1873.3 1250.1L1873.1 1250.3M1873.1 1250.3L1873.0 1250.3M1873.0 1250.3L1633.2 1385.7M1633.2 1385.7L1632.3 1386.2M1632.3 1386.2L1631.0 1386.9M1631.0 1386.9L1630.1 1387.4M1630.1 1387.4L1623.8 1390.6M1623.8 1390.6L1621.9 1391.5M1621.9 1391.5L1619.2 1392.6M1619.2 1392.6L1617.3 1393.4M1617.3 1393.4L1611.4 1395.7M1611.4 1395.7L1609.5 1396.4M1609.5 1396.4L1606.7 1397.3M1606.7 1397.3L1604.7 1397.9M1604.7 1397.9L1598.6 1399.6M1598.6 1399.6L1596.6 1400.1M1596.6 1400.1L1593.7 1400.7M1593.7 1400.7L1591.7 1401.1M1591.7 1401.1L1585.5 1402.2M1585.5 1402.2L1583.4 1402.5M1583.4 1402.5L1580.5 1402.9M1580.5 1402.9L1578.5 1403.1M1578.5 1403.1L1572.1 1403.6M1572.1 1403.6L1570.1 1403.7M1570.1 1403.7L1567.2 1403.7M1567.2 1403.7L1565.1 1403.7M1565.1 1403.7L1558.8 1403.6M1558.8 1403.6L1556.7 1403.5M1556.7 1403.5L1553.8 1403.3M1553.8 1403.3L1551.7 1403.1M1551.7 1403.1L1545.4 1402.3M1545.4 1402.3L1543.4 1402.0M1543.4 1402.0L1540.5 1401.5M1540.5 1401.5L1538.5 1401.1M1538.5 1401.1L1532.3 1399.7M1532.3 1399.7L1530.3 1399.2M1530.3 1399.2L1527.5 1398.4M1527.5 1398.4L1525.5 1397.8M1525.5 1397.8L1519.5 1395.9M1519.5 1395.9L1517.5 1395.2M1517.5 1395.2L1514.8 1394.1M1514.8 1394.1L1512.9 1393.3M1512.9 1393.3L1507.1 1390.8M1507.1 1390.8L1505.2 1389.9M1505.2 1389.9L1502.6 1388.6M1502.6 1388.6L1500.8 1387.6M1500.8 1387.6L1495.2 1384.5M1495.2 1384.5L1493.5 1383.4M1493.5 1383.4L1491.0 1381.9M1491.0 1381.9L1489.3 1380.7M1489.3 1380.7L1484.1 1377.1M1484.1 1377.1L1482.4 1375.9M1482.4 1375.9L1480.1 1374.1M1480.1 1374.1L1478.5 1372.8M1478.5 1372.8L1473.7 1368.6M1473.7 1368.6L1472.2 1367.3M1472.2 1367.3L1470.0 1365.3M1470.0 1365.3L1468.6 1363.8M1468.6 1363.8L1463.7 1358.7M1463.7 1358.7L1463.0 1357.9M1463.0 1357.9L1462.0 1356.9M1462.0 1356.9L1461.3 1356.1M1461.3 1356.1L1430.0 1320.0M1430.0 1320.0L1429.9 1319.9M1429.9 1319.9L1429.8 1319.8M1429.8 1319.8L1429.7 1319.7M1429.7 1319.7L1429.1 1318.9M1429.1 1318.9L1429.0 1318.8M1429.0 1318.8L1428.8 1318.7M1428.8 1318.7L1428.8 1318.6M1428.8 1318.6L1219.9 1072.0M1219.9 1072.0L1219.3 1071.2M1219.3 1071.2L1017.1 839.3M1017.1 839.3L1016.9 839.1M1016.9 839.1L1016.6 838.7M1016.6 838.7L1016.4 838.5M1016.4 838.5L1014.8 836.6M1014.8 836.6L1014.6 836.3M1014.6 836.3L1014.3 836.0M1014.3 836.0L1014.1 835.7M1014.1 835.7L841.7 625.2M841.7 625.2L840.6 623.9M840.6 623.9L835.4 618.3M835.4 618.3L834.2 617.1M834.2 617.1L620.7 416.7M620.7 416.7L552.3 489.6M555.1 489.5L759.1 681.0M759.1 681.0L760.1 682.0M760.1 682.0L761.5 683.4M761.5 683.4L762.5 684.5M762.5 684.5L769.7 692.1M769.7 692.1L770.6 693.2M770.6 693.2L771.9 694.7M771.9 694.7L772.8 695.7M772.8 695.7L940.0 899.9M940.0 899.9L940.4 900.4M940.4 900.4L941.3 901.5M941.3 901.5L1144.3 1134.4M1144.3 1134.4L1144.4 1134.5M1144.4 1134.5L1144.6 1134.6M1144.6 1134.6L1144.7 1134.8M1144.7 1134.8L1145.4 1135.6M1145.4 1135.6L1145.5 1135.8M1145.5 1135.8L1145.7 1135.9M1145.7 1135.9L1145.8 1136.0M1145.8 1136.0L1354.6 1382.7M1354.6 1382.7L1354.8 1382.9M1354.8 1382.9L1486.9 1535.0M1486.9 1535.0L1807.3 1899.5M1807.3 1899.5L1807.3 1899.5M1807.3 1899.5L1807.4 1899.6M1807.4 1899.6L1807.4 1899.6M1807.4 1899.6L1890.4 1994.4M1890.4 1994.4L1962.6 1931.2M1962.6 1931.2L1879.7 1836.5M1879.7 1836.5L1712.8 1646.6M1712.8 1646.6L1712.1 1645.8M1712.1 1645.8L1711.2 1644.7M1711.2 1644.7L1710.5 1643.8M1710.5 1643.8L1706.0 1638.2M1706.0 1638.2L1704.7 1636.5M1704.7 1636.5L1703.0 1634.1M1703.0 1634.1L1701.8 1632.3M1701.8 1632.3L1698.3 1626.9M1698.3 1626.9L1697.2 1625.0M1697.2 1625.0L1695.7 1622.5M1695.7 1622.5L1694.6 1620.6M1694.6 1620.6L1691.7 1614.9M1691.7 1614.9L1690.8 1612.9M1690.8 1612.9L1689.5 1610.2M1689.5 1610.2L1688.7 1608.2M1688.7 1608.2L1686.3 1602.2M1686.3 1602.2L1685.6 1600.2M1685.6 1600.2L1684.6 1597.4M1684.6 1597.4L1684.0 1595.3M1684.0 1595.3L1682.3 1589.1M1682.3 1589.1L1681.7 1587.0M1681.7 1587.0L1681.0 1584.2M1681.0 1584.2L1680.6 1582.0M1680.6 1582.0L1679.5 1575.7M1679.5 1575.7L1679.1 1573.6M1679.1 1573.6L1678.8 1570.6M1678.8 1570.6L1678.5 1568.5M1678.5 1568.5L1678.0 1562.1M1678.0 1562.1L1677.9 1559.9M1677.9 1559.9L1677.8 1556.9M1677.8 1556.9L1677.8 1554.8M1677.8 1554.8L1677.9 1548.4M1677.9 1548.4L1678.0 1546.2M1678.0 1546.2L1678.2 1543.2M1678.2 1543.2L1678.4 1541.1M1678.4 1541.1L1679.2 1534.7M1679.2 1534.7L1679.5 1532.6M1679.5 1532.6L1680.0 1529.6M1680.0 1529.6L1680.4 1527.5M1680.4 1527.5L1681.8 1521.2M1681.8 1521.2L1682.3 1519.1M1682.3 1519.1L1683.1 1516.3M1683.1 1516.3L1683.7 1514.2M1683.7 1514.2L1685.7 1508.1M1685.7 1508.1L1686.4 1506.0M1686.4 1506.0L1687.5 1503.3M1687.5 1503.3L1688.3 1501.3M1688.3 1501.3L1690.9 1495.4M1690.9 1495.4L1691.8 1493.4M1691.8 1493.4L1693.2 1490.8M1693.2 1490.8L1694.2 1488.9M1694.2 1488.9L1697.3 1483.3M1697.3 1483.3L1698.4 1481.4M1698.4 1481.4L1700.0 1478.9M1700.0 1478.9L1701.2 1477.1M1701.2 1477.1L1704.9 1471.9M1704.9 1471.9L1706.2 1470.1M1706.2 1470.1L1708.0 1467.8M1708.0 1467.8L1709.4 1466.1M1709.4 1466.1L1713.6 1461.2M1713.6 1461.2L1715.0 1459.6M1715.0 1459.6L1717.1 1457.5M1717.1 1457.5L1718.6 1455.9M1718.6 1455.9L1723.3 1451.5M1723.3 1451.5L1724.9 1450.1M1724.9 1450.1L1727.1 1448.1M1727.1 1448.1L1728.8 1446.7M1728.8 1446.7L1733.9 1442.8M1733.9 1442.8L1735.6 1441.5M1735.6 1441.5L1738.0 1439.8M1738.0 1439.8L1739.8 1438.6M1739.8 1438.6L1745.9 1434.8M1745.9 1434.8L1746.8 1434.2M1746.8 1434.2L1748.1 1433.4M1748.1 1433.4L1749.0 1432.9M1749.0 1432.9L1922.1 1335.1M1922.1 1335.1L1923.1 1334.6M1923.1 1334.6L1969.5 1307.3M1969.5 1307.3L1971.1 1306.5M1971.1 1306.5L1973.3 1305.3M1973.3 1305.3L1976.6 1303.7M1976.6 1303.7L1978.8 1302.8M1978.8 1302.8L1981.9 1301.6M1981.9 1301.6L1985.4 1299.5M1985.4 1299.5L1996.0 1293.2M1996.0 1293.2L2008.6 1285.7M2008.6 1285.7L2022.5 1277.5M2022.5 1277.5L2037.1 1268.8M2037.1 1268.8L2037.2 1268.8M2037.2 1268.8L2051.7 1260.3M2051.7 1260.3L2051.7 1260.2M2051.7 1260.2L2051.8 1260.2M2051.8 1260.2L2051.8 1260.2M2051.8 1260.2L2065.5 1252.2M2065.5 1252.2L2065.5 1252.1M2065.5 1252.1L2065.6 1252.1M2065.6 1252.1L2065.7 1252.0M2065.7 1252.0L2077.8 1245.0M2077.8 1245.0L2077.9 1244.9M2077.9 1244.9L2078.0 1244.9M2078.0 1244.9L2078.1 1244.8M2078.1 1244.8L2089.1 1238.5M2089.1 1238.5L2089.2 1238.5M2089.2 1238.5L2089.3 1238.4M2089.3 1238.4L2089.4 1238.4M2089.4 1238.4L2100.1 1232.3M2100.1 1232.3L2100.1 1232.2M2100.1 1232.2L2100.2 1232.2M2100.2 1232.2L2100.3 1232.1M2100.3 1232.1L2110.7 1226.3M2110.7 1226.3L2110.7 1226.2M2110.7 1226.2L2110.8 1226.2M2110.8 1226.2L2110.9 1226.2M2110.9 1226.2L2120.9 1220.5M2120.9 1220.5L2121.0 1220.5M2121.0 1220.5L2121.0 1220.5M2121.0 1220.5L2121.1 1220.4M2121.1 1220.4L2130.9 1215.0M2130.9 1215.0L2130.9 1214.9M2130.9 1214.9L2140.5 1209.6M2140.5 1209.6L2149.7 1204.5M2149.7 1204.5L2158.6 1199.6M2158.6 1199.6L2158.7 1199.5M2158.7 1199.5L2167.1 1194.8M2167.1 1194.8L2167.2 1194.8M2167.2 1194.8L2167.3 1194.7M2167.3 1194.7L2167.4 1194.7M2167.4 1194.7L2175.3 1190.3M2175.3 1190.3L2175.4 1190.3M2175.4 1190.3L2175.4 1190.3M2175.4 1190.3L2175.5 1190.2M2175.5 1190.2L2183.1 1186.1M2183.1 1186.1L2183.1 1186.1M2183.1 1186.1L2190.5 1182.1M2190.5 1182.1L2197.5 1178.3M2197.5 1178.3L2204.4 1174.5M2204.4 1174.5L2211.3 1170.7M2211.3 1170.7L2218.1 1166.8M2218.1 1166.8L2224.8 1163.0M2224.8 1163.0L2231.3 1159.1M2231.3 1159.1L2237.8 1155.2M2237.8 1155.2L2244.4 1151.2M2244.4 1151.2L2244.5 1151.1M2244.5 1151.1L2251.2 1147.1M2251.2 1147.1L2251.3 1147.0M2251.3 1147.0L2251.5 1146.9M2251.5 1146.9L2251.6 1146.9M2251.6 1146.9L2258.4 1142.9M2258.4 1142.9L2258.5 1142.7M2258.5 1142.7L2258.8 1142.6M2258.8 1142.6L2259.0 1142.5M2259.0 1142.5L2266.0 1138.4M2266.0 1138.4L2266.2 1138.3M2266.2 1138.3L2266.6 1138.1M2266.6 1138.1L2266.8 1137.9M2266.8 1137.9L2274.3 1133.7M2274.3 1133.7L2282.3 1129.2M2282.3 1129.2L2290.8 1124.3M2290.8 1124.3L2299.6 1119.2M2299.6 1119.2L2299.7 1119.1M2299.7 1119.1L2300.0 1118.9M2300.0 1118.9L2300.1 1118.9M2300.1 1118.9L2308.9 1113.8M2308.9 1113.8L2309.3 1113.6M2309.3 1113.6L2309.7 1113.4M2309.7 1113.4L2310.0 1113.2M2310.0 1113.2L2318.8 1108.4M2318.8 1108.4L2319.3 1108.2M2319.3 1108.2L2320.0 1107.8M2320.0 1107.8L2320.5 1107.5M2320.5 1107.5L2329.0 1103.2M2329.0 1103.2L2329.7 1102.8M2329.7 1102.8L2330.7 1102.3M2330.7 1102.3L2331.4 1102.0M2331.4 1102.0L2339.5 1098.2M2339.5 1098.2L2340.5 1097.7M2340.5 1097.7L2341.9 1097.1M2341.9 1097.1L2342.9 1096.7M2342.9 1096.7L2350.6 1093.6M2350.6 1093.6L2351.8 1093.1M2351.8 1093.1L2353.3 1092.6M2353.3 1092.6L2354.4 1092.2M2354.4 1092.2L2362.3 1089.4M2362.3 1089.4L2363.1 1089.1M2363.1 1089.1L2364.3 1088.7M2364.3 1088.7L2365.2 1088.5M2365.2 1088.5L2373.6 1086.0M2373.6 1086.0L2374.4 1085.7M2374.4 1085.7L2375.4 1085.4M2375.4 1085.4L2376.2 1085.2M2376.2 1085.2L2384.8 1083.0M2384.8 1083.0L2385.5 1082.8M2385.5 1082.8L2386.5 1082.6M2386.5 1082.6L2387.2 1082.4M2387.2 1082.4L2395.8 1080.5M2395.8 1080.5L2396.5 1080.3M2396.5 1080.3L2397.4 1080.2M2397.4 1080.2L2398.0 1080.0M2398.0 1080.0L2406.6 1078.4M2406.6 1078.4L2407.2 1078.3M2407.2 1078.3L2408.0 1078.1M2408.0 1078.1L2408.6 1078.0M2408.6 1078.0L2416.9 1076.7M2416.9 1076.7L2417.5 1076.6M2417.5 1076.6L2418.3 1076.4M2418.3 1076.4L2418.9 1076.3M2418.9 1076.3L2426.7 1075.3M2426.7 1075.3L2427.3 1075.2M2427.3 1075.2L2428.2 1075.1M2428.2 1075.1L2428.8 1075.0M2428.8 1075.0L2435.7 1074.3M2435.7 1074.3L2436.7 1074.2M2436.7 1074.2L2438.1 1074.1M2438.1 1074.1L2439.1 1074.0M2439.1 1074.0L2444.9 1073.7M2444.9 1073.7L2446.2 1073.6M2446.2 1073.6L2447.8 1073.6M2447.8 1073.6L2420.5 1014.4M2420.5 1014.4L2374.0 925.2M2374.0 925.2L2373.4 926.1M2373.4 926.1L2372.4 927.6M2372.4 927.6L2371.7 928.8M2371.7 928.8L2369.0 932.7M2369.0 932.7L2368.2 933.8M2368.2 933.8L2367.1 935.2M2367.1 935.2L2366.3 936.3M2366.3 936.3L2363.0 940.5M2363.0 940.5L2362.4 941.3M2362.4 941.3L2361.4 942.5M2361.4 942.5L2360.7 943.3M2360.7 943.3L2356.8 947.7M2356.8 947.7L2356.2 948.4M2356.2 948.4L2355.4 949.3M2355.4 949.3L2354.8 950.0M2354.8 950.0L2350.4 954.6M2350.4 954.6L2349.9 955.2M2349.9 955.2L2349.2 955.9M2349.2 955.9L2348.7 956.4M2348.7 956.4L2343.9 961.2M2343.9 961.2L2343.4 961.6M2343.4 961.6L2342.8 962.2M2342.8 962.2L2342.4 962.6M2342.4 962.6L2337.2 967.5M2337.2 967.5L2336.8 967.8M2336.8 967.8L2336.3 968.3M2336.3 968.3L2335.9 968.6M2335.9 968.6L2330.5 973.5M2330.5 973.5L2330.2 973.8M2330.2 973.8L2329.8 974.2M2329.8 974.2L2329.4 974.4M2329.4 974.4L2324.0 979.1M2324.0 979.1L2323.5 979.5M2323.5 979.5L2322.8 980.1M2322.8 980.1L2322.3 980.5M2322.3 980.5L2316.9 984.9M2316.9 984.9L2316.3 985.4M2316.3 985.4L2315.4 986.0M2315.4 986.0L2314.8 986.5M2314.8 986.5L2309.1 990.8M2309.1 990.8L2308.6 991.2M2308.6 991.2L2307.9 991.6M2307.9 991.6L2307.4 992.0M2307.4 992.0L2301.3 996.4M2301.3 996.4L2300.9 996.6M2300.9 996.6L2300.4 997.0M2300.4 997.0L2300.0 997.2M2300.0 997.2L2293.5 1001.6M2293.5 1001.6L2293.3 1001.8M2293.3 1001.8L2292.9 1002.0M2292.9 1002.0L2292.7 1002.2M2292.7 1002.2L2285.9 1006.7M2285.9 1006.7L2285.7 1006.8M2285.7 1006.8L2285.6 1006.9M2285.6 1006.9L2285.4 1007.0M2285.4 1007.0L2278.4 1011.5M2278.4 1011.5L2271.3 1016.1M2271.3 1016.1L2264.1 1020.8M2264.1 1020.8L2257.1 1025.4M2257.1 1025.4L2257.0 1025.5M2257.0 1025.5L2256.8 1025.6M2256.8 1025.6L2256.7 1025.7M2256.7 1025.7L2249.8 1030.1M2249.8 1030.1L2249.7 1030.2M2249.7 1030.2L2249.6 1030.3M2249.6 1030.3L2249.5 1030.4M2249.5 1030.4L2242.5 1034.8M2242.5 1034.8L2242.4 1034.9M2242.4 1034.9L2242.3 1034.9M2242.3 1034.9L2242.2 1035.0M2242.2 1035.0L2235.1 1039.5M2235.1 1039.5L2235.1 1039.5M2235.1 1039.5L2235.0 1039.6M2235.0 1039.6L2234.9 1039.6M2234.9 1039.6L2227.6 1044.2M2227.6 1044.2L2227.6 1044.2M2227.6 1044.2L2227.5 1044.3M2227.5 1044.3L2227.5 1044.3M2227.5 1044.3L2219.8 1049.0M2219.8 1049.0L2219.8 1049.1M2219.8 1049.1L2211.7 1054.1M2211.7 1054.1L2203.2 1059.4M2203.2 1059.4L2194.3 1064.9M2194.3 1064.9L2185.1 1070.6M2185.1 1070.6L2185.0 1070.7M2185.0 1070.7L2175.5 1076.6M2175.5 1076.6L2175.4 1076.6M2175.4 1076.6L2165.6 1082.6M2165.6 1082.6L2165.5 1082.7M2165.5 1082.7L2165.5 1082.7M2165.5 1082.7L2165.5 1082.7M2165.5 1082.7L2155.4 1088.9M2155.4 1088.9L2155.3 1088.9M2155.3 1088.9L2155.3 1089.0M2155.3 1089.0L2155.2 1089.0M2155.2 1089.0L2144.8 1095.3M2144.8 1095.3L2144.8 1095.4M2144.8 1095.4L2144.7 1095.4M2144.7 1095.4L2144.6 1095.4M2144.6 1095.4L2133.9 1101.9M2133.9 1101.9L2133.9 1102.0M2133.9 1102.0L2133.8 1102.0M2133.8 1102.0L2133.8 1102.0M2133.8 1102.0L2122.7 1108.7M2122.7 1108.7L2122.7 1108.7M2122.7 1108.7L2122.6 1108.8M2122.6 1108.8L2122.5 1108.8M2122.5 1108.8L2122.4 1108.9M2122.4 1108.9L2120.5 1109.9M2120.5 1109.9L2117.9 1111.3M2117.9 1111.3L2113.9 1113.2M2113.9 1113.2L2111.1 1114.3M2111.1 1114.3L2106.9 1115.8M2106.9 1115.8L2105.8 1116.2M2105.8 1116.2L1876.1 1250.8M1876.1 1250.8L1876.0 1250.9M1876.0 1250.9L1875.8 1251.0M1875.8 1251.0L1875.6 1251.1M1875.6 1251.1L1874.5 1251.8M1874.5 1251.8L1874.3 1251.9M1874.3 1251.9L1874.1 1252.0M1874.1 1252.0L1874.0 1252.1M1874.0 1252.1L1634.2 1387.5M1634.2 1387.5L1633.3 1388.0M1633.3 1388.0L1632.0 1388.7M1632.0 1388.7L1631.0 1389.2M1631.0 1389.2L1624.7 1392.4M1624.7 1392.4L1622.7 1393.3M1622.7 1393.3L1620.0 1394.5M1620.0 1394.5L1618.1 1395.3M1618.1 1395.3L1612.1 1397.6M1612.1 1397.6L1610.1 1398.3M1610.1 1398.3L1607.3 1399.2M1607.3 1399.2L1605.3 1399.8M1605.3 1399.8L1599.1 1401.5M1599.1 1401.5L1597.0 1402.1M1597.0 1402.1L1594.2 1402.7M1594.2 1402.7L1592.1 1403.1M1592.1 1403.1L1585.8 1404.2M1585.8 1404.2L1583.7 1404.5M1583.7 1404.5L1580.8 1404.9M1580.8 1404.9L1578.6 1405.1M1578.6 1405.1L1572.3 1405.6M1572.3 1405.6L1570.1 1405.7M1570.1 1405.7L1567.2 1405.7M1567.2 1405.7L1565.1 1405.7M1565.1 1405.7L1558.7 1405.6M1558.7 1405.6L1556.6 1405.5M1556.6 1405.5L1553.6 1405.3M1553.6 1405.3L1551.5 1405.1M1551.5 1405.1L1545.2 1404.3M1545.2 1404.3L1543.0 1404.0M1543.0 1404.0L1540.2 1403.5M1540.2 1403.5L1538.0 1403.1M1538.0 1403.1L1531.8 1401.7M1531.8 1401.7L1529.8 1401.1M1529.8 1401.1L1526.9 1400.4M1526.9 1400.4L1524.9 1399.7M1524.9 1399.7L1518.8 1397.8M1518.8 1397.8L1516.8 1397.0M1516.8 1397.0L1514.1 1396.0M1514.1 1396.0L1512.1 1395.2M1512.1 1395.2L1506.3 1392.6M1506.3 1392.6L1504.3 1391.7M1504.3 1391.7L1501.7 1390.4M1501.7 1390.4L1499.8 1389.4M1499.8 1389.4L1494.3 1386.2M1494.3 1386.2L1492.4 1385.1M1492.4 1385.1L1489.9 1383.6M1489.9 1383.6L1488.1 1382.4M1488.1 1382.4L1482.9 1378.7M1482.9 1378.7L1481.2 1377.5M1481.2 1377.5L1478.9 1375.7M1478.9 1375.7L1477.2 1374.3M1477.2 1374.3L1472.4 1370.2M1472.4 1370.2L1470.8 1368.7M1470.8 1368.7L1468.7 1366.7M1468.7 1366.7L1467.1 1365.2M1467.1 1365.2L1462.2 1360.1M1462.2 1360.1L1461.5 1359.3M1461.5 1359.3L1460.5 1358.2M1460.5 1358.2L1459.8 1357.4M1459.8 1357.4L1428.5 1321.4M1428.5 1321.4L1428.4 1321.3M1428.4 1321.3L1428.3 1321.1M1428.3 1321.1L1428.2 1321.0M1428.2 1321.0L1427.5 1320.2M1427.5 1320.2L1427.4 1320.1M1427.4 1320.1L1427.3 1320.0M1427.3 1320.0L1427.2 1319.9M1427.2 1319.9L1218.4 1073.3M1218.4 1073.3L1217.8 1072.5M1217.8 1072.5L1015.6 840.6M1015.6 840.6L1015.4 840.4M1015.4 840.4L1015.1 840.0M1015.1 840.0L1014.8 839.7M1014.8 839.7L1013.2 837.9M1013.2 837.9L1013.0 837.6M1013.0 837.6L1012.7 837.2M1012.7 837.2L1012.5 837.0M1012.5 837.0L840.2 626.5M840.2 626.5L839.1 625.2M839.1 625.2L834.0 619.7M834.0 619.7L832.8 618.6M832.8 618.6L620.8 419.5M620.8 419.5L555.1 489.5M563.6 489.2L763.2 676.7M763.2 676.7L764.4 677.8M764.4 677.8L765.8 679.2M765.8 679.2L766.9 680.4M766.9 680.4L774.0 688.0M774.0 688.0L775.1 689.2M775.1 689.2L776.4 690.7M776.4 690.7L777.5 691.9M777.5 691.9L944.6 896.1M944.6 896.1L945.0 896.6M945.0 896.6L945.9 897.6M945.9 897.6L1148.8 1130.4M1148.8 1130.4L1149.0 1130.6M1149.0 1130.6L1149.1 1130.7M1149.1 1130.7L1149.2 1130.9M1149.2 1130.9L1150.0 1131.7M1150.0 1131.7L1150.1 1131.9M1150.1 1131.9L1150.2 1132.0M1150.2 1132.0L1150.3 1132.2M1150.3 1132.2L1359.2 1378.8M1359.2 1378.8L1359.3 1379.0M1359.3 1379.0L1491.4 1531.1M1491.4 1531.1L1811.8 1895.5M1811.8 1895.5L1811.8 1895.5M1811.8 1895.5L1811.9 1895.6M1811.9 1895.6L1811.9 1895.6M1811.9 1895.6L1891.0 1986.0M1891.0 1986.0L1954.2 1930.7M1954.2 1930.7L1875.2 1840.5M1875.2 1840.5L1708.3 1650.6M1708.3 1650.6L1707.5 1649.6M1707.5 1649.6L1706.6 1648.5M1706.6 1648.5L1705.8 1647.6M1705.8 1647.6L1701.3 1642.0M1701.3 1642.0L1699.8 1640.0M1699.8 1640.0L1698.1 1637.6M1698.1 1637.6L1696.7 1635.5M1696.7 1635.5L1693.2 1630.1M1693.2 1630.1L1692.0 1628.0M1692.0 1628.0L1690.5 1625.5M1690.5 1625.5L1689.3 1623.3M1689.3 1623.3L1686.4 1617.6M1686.4 1617.6L1685.3 1615.4M1685.3 1615.4L1684.1 1612.7M1684.1 1612.7L1683.1 1610.4M1683.1 1610.4L1680.8 1604.4M1680.8 1604.4L1679.9 1602.1M1679.9 1602.1L1679.0 1599.3M1679.0 1599.3L1678.2 1597.0M1678.2 1597.0L1676.5 1590.8M1676.5 1590.8L1675.9 1588.4M1675.9 1588.4L1675.2 1585.5M1675.2 1585.5L1674.7 1583.1M1674.7 1583.1L1673.6 1576.8M1673.6 1576.8L1673.2 1574.3M1673.2 1574.3L1672.8 1571.4M1672.8 1571.4L1672.6 1568.9M1672.6 1568.9L1672.0 1562.6M1672.0 1562.6L1671.9 1560.1M1671.9 1560.1L1671.8 1557.1M1671.8 1557.1L1671.8 1554.7M1671.8 1554.7L1671.9 1548.2M1671.9 1548.2L1672.0 1545.8M1672.0 1545.8L1672.2 1542.8M1672.2 1542.8L1672.5 1540.4M1672.5 1540.4L1673.2 1534.0M1673.2 1534.0L1673.6 1531.6M1673.6 1531.6L1674.1 1528.6M1674.1 1528.6L1674.6 1526.2M1674.6 1526.2L1675.9 1519.9M1675.9 1519.9L1676.5 1517.5M1676.5 1517.5L1677.3 1514.7M1677.3 1514.7L1678.0 1512.3M1678.0 1512.3L1680.0 1506.2M1680.0 1506.2L1680.8 1503.9M1680.8 1503.9L1681.9 1501.1M1681.9 1501.1L1682.8 1498.9M1682.8 1498.9L1685.4 1493.0M1685.4 1493.0L1686.5 1490.7M1686.5 1490.7L1687.8 1488.1M1687.8 1488.1L1689.0 1485.9M1689.0 1485.9L1692.1 1480.3M1692.1 1480.3L1693.4 1478.2M1693.4 1478.2L1694.9 1475.7M1694.9 1475.7L1696.3 1473.7M1696.3 1473.7L1700.0 1468.4M1700.0 1468.4L1701.5 1466.4M1701.5 1466.4L1703.3 1464.1M1703.3 1464.1L1704.9 1462.2M1704.9 1462.2L1709.0 1457.3M1709.0 1457.3L1710.7 1455.5M1710.7 1455.5L1712.7 1453.3M1712.7 1453.3L1714.5 1451.6M1714.5 1451.6L1719.1 1447.2M1719.1 1447.2L1721.0 1445.5M1721.0 1445.5L1723.2 1443.6M1723.2 1443.6L1725.1 1442.0M1725.1 1442.0L1730.2 1438.1M1730.2 1438.1L1732.2 1436.6M1732.2 1436.6L1734.6 1434.9M1734.6 1434.9L1736.6 1433.5M1736.6 1433.5L1742.7 1429.7M1742.7 1429.7L1743.7 1429.1M1743.7 1429.1L1745.0 1428.3M1745.0 1428.3L1746.1 1427.7M1746.1 1427.7L1919.2 1329.9M1919.2 1329.9L1920.1 1329.4M1920.1 1329.4L1966.5 1302.2M1966.5 1302.2L1968.3 1301.2M1968.3 1301.2L1970.5 1300.0M1970.5 1300.0L1974.2 1298.2M1974.2 1298.2L1976.4 1297.3M1976.4 1297.3L1979.3 1296.2M1979.3 1296.2L1982.3 1294.3M1982.3 1294.3L1992.9 1288.1M1992.9 1288.1L2005.5 1280.6M2005.5 1280.6L2019.5 1272.3M2019.5 1272.3L2034.1 1263.7M2034.1 1263.7L2034.2 1263.6M2034.2 1263.6L2048.6 1255.1M2048.6 1255.1L2048.7 1255.1M2048.7 1255.1L2048.8 1255.0M2048.8 1255.0L2048.8 1255.0M2048.8 1255.0L2062.4 1247.0M2062.4 1247.0L2062.5 1247.0M2062.5 1247.0L2062.6 1246.9M2062.6 1246.9L2062.7 1246.9M2062.7 1246.9L2074.8 1239.8M2074.8 1239.8L2074.9 1239.7M2074.9 1239.7L2075.0 1239.7M2075.0 1239.7L2075.1 1239.6M2075.1 1239.6L2086.1 1233.3M2086.1 1233.3L2086.2 1233.3M2086.2 1233.3L2086.3 1233.2M2086.3 1233.2L2086.4 1233.1M2086.4 1233.1L2097.1 1227.1M2097.1 1227.1L2097.2 1227.0M2097.2 1227.0L2097.3 1227.0M2097.3 1227.0L2097.3 1226.9M2097.3 1226.9L2107.7 1221.1M2107.7 1221.1L2107.8 1221.0M2107.8 1221.0L2107.9 1221.0M2107.9 1221.0L2107.9 1220.9M2107.9 1220.9L2118.0 1215.3M2118.0 1215.3L2118.1 1215.3M2118.1 1215.3L2118.1 1215.2M2118.1 1215.2L2118.2 1215.2M2118.2 1215.2L2128.0 1209.7M2128.0 1209.7L2128.0 1209.7M2128.0 1209.7L2137.6 1204.4M2137.6 1204.4L2146.8 1199.3M2146.8 1199.3L2155.7 1194.3M2155.7 1194.3L2155.8 1194.3M2155.8 1194.3L2164.2 1189.6M2164.2 1189.6L2164.3 1189.5M2164.3 1189.5L2164.4 1189.5M2164.4 1189.5L2164.5 1189.4M2164.5 1189.4L2172.4 1185.1M2172.4 1185.1L2172.5 1185.0M2172.5 1185.0L2172.6 1185.0M2172.6 1185.0L2172.6 1185.0M2172.6 1185.0L2180.2 1180.8M2180.2 1180.8L2180.3 1180.8M2180.3 1180.8L2187.6 1176.8M2187.6 1176.8L2194.7 1173.0M2194.7 1173.0L2201.5 1169.2M2201.5 1169.2L2208.3 1165.4M2208.3 1165.4L2215.2 1161.6M2215.2 1161.6L2221.8 1157.8M2221.8 1157.8L2228.2 1154.0M2228.2 1154.0L2234.7 1150.1M2234.7 1150.1L2241.3 1146.1M2241.3 1146.1L2241.4 1146.0M2241.4 1146.0L2248.1 1142.0M2248.1 1142.0L2248.2 1141.9M2248.2 1141.9L2248.4 1141.8M2248.4 1141.8L2248.5 1141.7M2248.5 1141.7L2255.3 1137.7M2255.3 1137.7L2255.5 1137.6M2255.5 1137.6L2255.8 1137.4M2255.8 1137.4L2256.0 1137.3M2256.0 1137.3L2263.0 1133.2M2263.0 1133.2L2263.3 1133.1M2263.3 1133.1L2263.6 1132.9M2263.6 1132.9L2263.9 1132.7M2263.9 1132.7L2271.4 1128.5M2271.4 1128.5L2279.3 1124.0M2279.3 1124.0L2287.8 1119.1M2287.8 1119.1L2296.6 1114.0M2296.6 1114.0L2296.8 1113.9M2296.8 1113.9L2297.0 1113.7M2297.0 1113.7L2297.2 1113.6M2297.2 1113.6L2306.0 1108.6M2306.0 1108.6L2306.3 1108.4M2306.3 1108.4L2306.8 1108.2M2306.8 1108.2L2307.2 1107.9M2307.2 1107.9L2315.9 1103.2M2315.9 1103.2L2316.5 1102.9M2316.5 1102.9L2317.2 1102.5M2317.2 1102.5L2317.7 1102.2M2317.7 1102.2L2326.2 1097.8M2326.2 1097.8L2327.1 1097.4M2327.1 1097.4L2328.1 1096.9M2328.1 1096.9L2328.9 1096.5M2328.9 1096.5L2337.0 1092.7M2337.0 1092.7L2338.1 1092.2M2338.1 1092.2L2339.5 1091.6M2339.5 1091.6L2340.7 1091.1M2340.7 1091.1L2348.4 1088.0M2348.4 1088.0L2349.6 1087.5M2349.6 1087.5L2351.2 1086.9M2351.2 1086.9L2352.4 1086.5M2352.4 1086.5L2360.3 1083.8M2360.3 1083.8L2361.3 1083.4M2361.3 1083.4L2362.5 1083.0M2362.5 1083.0L2363.5 1082.7M2363.5 1082.7L2371.9 1080.2M2371.9 1080.2L2372.8 1080.0M2372.8 1080.0L2373.8 1079.7M2373.8 1079.7L2374.7 1079.4M2374.7 1079.4L2383.3 1077.2M2383.3 1077.2L2384.1 1077.0M2384.1 1077.0L2385.1 1076.8M2385.1 1076.8L2385.9 1076.6M2385.9 1076.6L2394.5 1074.6M2394.5 1074.6L2395.3 1074.5M2395.3 1074.5L2396.2 1074.3M2396.2 1074.3L2396.9 1074.1M2396.9 1074.1L2405.4 1072.5M2405.4 1072.5L2406.1 1072.4M2406.1 1072.4L2407.0 1072.2M2407.0 1072.2L2407.7 1072.1M2407.7 1072.1L2415.9 1070.7M2415.9 1070.7L2416.6 1070.6M2416.6 1070.6L2417.4 1070.5M2417.4 1070.5L2418.1 1070.4M2418.1 1070.4L2425.9 1069.4M2425.9 1069.4L2426.6 1069.3M2426.6 1069.3L2427.5 1069.2M2427.5 1069.2L2428.2 1069.1M2428.2 1069.1L2435.0 1068.4M2435.0 1068.4L2436.2 1068.2M2436.2 1068.2L2437.6 1068.1M2437.6 1068.1L2438.6 1068.1M2438.6 1068.1L2415.1 1017.0M2415.1 1017.0L2373.3 936.9M2373.3 936.9L2373.0 937.3M2373.0 937.3L2371.9 938.8M2371.9 938.8L2371.0 940.0M2371.0 940.0L2367.8 944.2M2367.8 944.2L2367.0 945.1M2367.0 945.1L2366.0 946.3M2366.0 946.3L2365.2 947.2M2365.2 947.2L2361.4 951.7M2361.4 951.7L2360.7 952.4M2360.7 952.4L2359.9 953.3M2359.9 953.3L2359.2 954.1M2359.2 954.1L2354.8 958.7M2354.8 958.7L2354.2 959.4M2354.2 959.4L2353.5 960.1M2353.5 960.1L2352.9 960.7M2352.9 960.7L2348.1 965.5M2348.1 965.5L2347.6 965.9M2347.6 965.9L2347.0 966.5M2347.0 966.5L2346.5 967.0M2346.5 967.0L2341.3 971.8M2341.3 971.8L2340.9 972.2M2340.9 972.2L2340.4 972.7M2340.4 972.7L2339.9 973.1M2339.9 973.1L2334.5 977.9M2334.5 977.9L2334.2 978.3M2334.2 978.3L2333.7 978.7M2333.7 978.7L2333.3 979.0M2333.3 979.0L2327.9 983.6M2327.9 983.6L2327.3 984.1M2327.3 984.1L2326.7 984.7M2326.7 984.7L2326.1 985.2M2326.1 985.2L2320.7 989.5M2320.7 989.5L2320.0 990.1M2320.0 990.1L2319.1 990.8M2319.1 990.8L2318.4 991.3M2318.4 991.3L2312.7 995.6M2312.7 995.6L2312.1 996.0M2312.1 996.0L2311.5 996.5M2311.5 996.5L2310.9 996.9M2310.9 996.9L2304.8 1001.2M2304.8 1001.2L2304.3 1001.5M2304.3 1001.5L2303.8 1001.9M2303.8 1001.9L2303.4 1002.2M2303.4 1002.2L2296.9 1006.6M2296.9 1006.6L2296.6 1006.8M2296.6 1006.8L2296.3 1007.0M2296.3 1007.0L2296.0 1007.2M2296.0 1007.2L2289.2 1011.7M2289.2 1011.7L2289.0 1011.8M2289.0 1011.8L2288.8 1011.9M2288.8 1011.9L2288.7 1012.0M2288.7 1012.0L2281.6 1016.6M2281.6 1016.6L2274.5 1021.2M2274.5 1021.2L2267.4 1025.8M2267.4 1025.8L2260.4 1030.4M2260.4 1030.4L2260.3 1030.5M2260.3 1030.5L2260.1 1030.6M2260.1 1030.6L2260.0 1030.7M2260.0 1030.7L2253.1 1035.2M2253.1 1035.2L2252.9 1035.2M2252.9 1035.2L2252.8 1035.3M2252.8 1035.3L2252.7 1035.4M2252.7 1035.4L2245.7 1039.9M2245.7 1039.9L2245.6 1039.9M2245.6 1039.9L2245.5 1040.0M2245.5 1040.0L2245.4 1040.1M2245.4 1040.1L2238.3 1044.5M2238.3 1044.5L2238.3 1044.6M2238.3 1044.6L2238.2 1044.6M2238.2 1044.6L2238.1 1044.7M2238.1 1044.7L2230.8 1049.3M2230.8 1049.3L2230.7 1049.3M2230.7 1049.3L2230.7 1049.3M2230.7 1049.3L2230.6 1049.4M2230.6 1049.4L2223.0 1054.1M2223.0 1054.1L2222.9 1054.2M2222.9 1054.2L2214.9 1059.2M2214.9 1059.2L2206.4 1064.5M2206.4 1064.5L2197.5 1070.0M2197.5 1070.0L2188.2 1075.7M2188.2 1075.7L2188.2 1075.8M2188.2 1075.8L2178.6 1081.7M2178.6 1081.7L2178.6 1081.7M2178.6 1081.7L2168.7 1087.8M2168.7 1087.8L2168.7 1087.8M2168.7 1087.8L2168.6 1087.8M2168.6 1087.8L2168.6 1087.8M2168.6 1087.8L2158.5 1094.0M2158.5 1094.0L2158.4 1094.1M2158.4 1094.1L2158.4 1094.1M2158.4 1094.1L2158.3 1094.1M2158.3 1094.1L2147.9 1100.5M2147.9 1100.5L2147.9 1100.5M2147.9 1100.5L2147.8 1100.5M2147.8 1100.5L2147.8 1100.6M2147.8 1100.6L2137.0 1107.1M2137.0 1107.1L2137.0 1107.1M2137.0 1107.1L2136.9 1107.1M2136.9 1107.1L2136.8 1107.2M2136.8 1107.2L2125.8 1113.8M2125.8 1113.8L2125.8 1113.9M2125.8 1113.9L2125.7 1113.9M2125.7 1113.9L2125.6 1114.0M2125.6 1114.0L2125.5 1114.0M2125.5 1114.0L2123.3 1115.2M2123.3 1115.2L2120.7 1116.6M2120.7 1116.6L2116.1 1118.8M2116.1 1118.8L2113.4 1119.9M2113.4 1119.9L2108.6 1121.6M2108.6 1121.6L2108.2 1121.7M2108.2 1121.7L1879.2 1256.0M1879.2 1256.0L1879.0 1256.1M1879.0 1256.1L1878.8 1256.2M1878.8 1256.2L1878.6 1256.3M1878.6 1256.3L1877.5 1257.0M1877.5 1257.0L1877.3 1257.1M1877.3 1257.1L1877.1 1257.2M1877.1 1257.2L1876.9 1257.3M1876.9 1257.3L1637.2 1392.7M1637.2 1392.7L1636.1 1393.3M1636.1 1393.3L1634.8 1394.0M1634.8 1394.0L1633.7 1394.5M1633.7 1394.5L1627.4 1397.7M1627.4 1397.7L1625.2 1398.8M1625.2 1398.8L1622.5 1400.0M1622.5 1400.0L1620.2 1400.9M1620.2 1400.9L1614.3 1403.2M1614.3 1403.2L1612.0 1404.0M1612.0 1404.0L1609.2 1404.9M1609.2 1404.9L1606.9 1405.6M1606.9 1405.6L1600.7 1407.3M1600.7 1407.3L1598.4 1407.9M1598.4 1407.9L1595.5 1408.5M1595.5 1408.5L1593.1 1409.0M1593.1 1409.0L1586.8 1410.1M1586.8 1410.1L1584.4 1410.5M1584.4 1410.5L1581.5 1410.8M1581.5 1410.8L1579.1 1411.1M1579.1 1411.1L1572.7 1411.5M1572.7 1411.5L1570.3 1411.7M1570.3 1411.7L1567.4 1411.7M1567.4 1411.7L1564.9 1411.7M1564.9 1411.7L1558.6 1411.6M1558.6 1411.6L1556.1 1411.5M1556.1 1411.5L1553.2 1411.2M1553.2 1411.2L1550.8 1411.0M1550.8 1411.0L1544.4 1410.2M1544.4 1410.2L1542.0 1409.9M1542.0 1409.9L1539.1 1409.4M1539.1 1409.4L1536.7 1408.9M1536.7 1408.9L1530.5 1407.5M1530.5 1407.5L1528.2 1406.9M1528.2 1406.9L1525.3 1406.2M1525.3 1406.2L1523.0 1405.4M1523.0 1405.4L1517.0 1403.5M1517.0 1403.5L1514.7 1402.6M1514.7 1402.6L1511.9 1401.6M1511.9 1401.6L1509.7 1400.7M1509.7 1400.7L1503.8 1398.1M1503.8 1398.1L1501.6 1397.1M1501.6 1397.1L1499.0 1395.7M1499.0 1395.7L1496.8 1394.6M1496.8 1394.6L1491.3 1391.5M1491.3 1391.5L1489.2 1390.2M1489.2 1390.2L1486.7 1388.7M1486.7 1388.7L1484.7 1387.3M1484.7 1387.3L1479.5 1383.7M1479.5 1383.7L1477.5 1382.2M1477.5 1382.2L1475.2 1380.4M1475.2 1380.4L1473.3 1378.9M1473.3 1378.9L1468.5 1374.7M1468.5 1374.7L1466.7 1373.1M1466.7 1373.1L1464.5 1371.1M1464.5 1371.1L1462.8 1369.3M1462.8 1369.3L1457.9 1364.2M1457.9 1364.2L1457.1 1363.3M1457.1 1363.3L1456.1 1362.2M1456.1 1362.2L1455.3 1361.3M1455.3 1361.3L1424.0 1325.3M1424.0 1325.3L1423.9 1325.2M1423.9 1325.2L1423.7 1325.0M1423.7 1325.0L1423.6 1324.9M1423.6 1324.9L1423.0 1324.2M1423.0 1324.2L1422.9 1324.0M1422.9 1324.0L1422.8 1323.9M1422.8 1323.9L1422.7 1323.8M1422.7 1323.8L1213.8 1077.2M1213.8 1077.2L1213.2 1076.5M1213.2 1076.5L1011.1 844.6M1011.1 844.6L1010.8 844.3M1010.8 844.3L1010.5 843.9M1010.5 843.9L1010.3 843.6M1010.3 843.6L1008.7 841.7M1008.7 841.7L1008.4 841.4M1008.4 841.4L1008.1 841.1M1008.1 841.1L1007.9 840.8M1007.9 840.8L835.7 630.5M835.7 630.5L834.7 629.3M834.7 629.3L829.8 624.0M829.8 624.0L828.8 623.0M828.8 623.0L621.1 428.0M621.1 428.0L563.6 489.2M572.1 489.0L767.3 672.3M767.3 672.3L768.6 673.6M768.6 673.6L770.0 675.0M770.0 675.0L771.3 676.3M771.3 676.3L778.4 683.9M778.4 683.9L779.7 685.3M779.7 685.3L780.9 686.8M780.9 686.8L782.1 688.1M782.1 688.1L949.2 892.3M949.2 892.3L949.6 892.7M949.6 892.7L950.4 893.7M950.4 893.7L1153.4 1126.5M1153.4 1126.5L1153.5 1126.6M1153.5 1126.6L1153.6 1126.8M1153.6 1126.8L1153.8 1126.9M1153.8 1126.9L1154.5 1127.8M1154.5 1127.8L1154.6 1128.0M1154.6 1128.0L1154.8 1128.1M1154.8 1128.1L1154.9 1128.3M1154.9 1128.3L1363.8 1374.9M1363.8 1374.9L1363.9 1375.1M1363.9 1375.1L1495.9 1527.1M1495.9 1527.1L1816.3 1891.5M1816.3 1891.5L1816.3 1891.6M1816.3 1891.6L1816.4 1891.6M1816.4 1891.6L1816.4 1891.7M1816.4 1891.7L1891.5 1977.5M1891.5 1977.5L1945.7 1930.1M1945.7 1930.1L1870.7 1844.4M1870.7 1844.4L1703.8 1654.5M1703.8 1654.5L1702.9 1653.5M1702.9 1653.5L1702.0 1652.4M1702.0 1652.4L1701.1 1651.3M1701.1 1651.3L1696.6 1645.7M1696.6 1645.7L1695.0 1643.5M1695.0 1643.5L1693.2 1641.1M1693.2 1641.1L1691.7 1638.8M1691.7 1638.8L1688.2 1633.4M1688.2 1633.4L1686.8 1631.0M1686.8 1631.0L1685.3 1628.5M1685.3 1628.5L1684.0 1626.0M1684.0 1626.0L1681.0 1620.3M1681.0 1620.3L1679.8 1617.9M1679.8 1617.9L1678.6 1615.2M1678.6 1615.2L1677.5 1612.6M1677.5 1612.6L1675.2 1606.6M1675.2 1606.6L1674.2 1604.0M1674.2 1604.0L1673.3 1601.2M1673.3 1601.2L1672.5 1598.6M1672.5 1598.6L1670.7 1592.4M1670.7 1592.4L1670.0 1589.7M1670.0 1589.7L1669.4 1586.9M1669.4 1586.9L1668.8 1584.2M1668.8 1584.2L1667.7 1577.8M1667.7 1577.8L1667.2 1575.1M1667.2 1575.1L1666.9 1572.2M1666.9 1572.2L1666.6 1569.4M1666.6 1569.4L1666.1 1563.0M1666.1 1563.0L1665.9 1560.3M1665.9 1560.3L1665.8 1557.3M1665.8 1557.3L1665.8 1554.5M1665.8 1554.5L1665.9 1548.1M1665.9 1548.1L1666.1 1545.4M1666.1 1545.4L1666.3 1542.4M1666.3 1542.4L1666.5 1539.7M1666.5 1539.7L1667.3 1533.3M1667.3 1533.3L1667.7 1530.5M1667.7 1530.5L1668.2 1527.6M1668.2 1527.6L1668.7 1524.9M1668.7 1524.9L1670.1 1518.7M1670.1 1518.7L1670.7 1516.0M1670.7 1516.0L1671.5 1513.1M1671.5 1513.1L1672.3 1510.5M1672.3 1510.5L1674.3 1504.4M1674.3 1504.4L1675.2 1501.8M1675.2 1501.8L1676.3 1499.0M1676.3 1499.0L1677.3 1496.4M1677.3 1496.4L1679.9 1490.6M1679.9 1490.6L1681.1 1488.1M1681.1 1488.1L1682.4 1485.4M1682.4 1485.4L1683.7 1483.0M1683.7 1483.0L1686.9 1477.4M1686.9 1477.4L1688.3 1475.0M1688.3 1475.0L1689.9 1472.5M1689.9 1472.5L1691.4 1470.2M1691.4 1470.2L1695.1 1465.0M1695.1 1465.0L1696.7 1462.7M1696.7 1462.7L1698.6 1460.4M1698.6 1460.4L1700.3 1458.3M1700.3 1458.3L1704.5 1453.4M1704.5 1453.4L1706.4 1451.3M1706.4 1451.3L1708.4 1449.2M1708.4 1449.2L1710.3 1447.2M1710.3 1447.2L1715.0 1442.8M1715.0 1442.8L1717.0 1441.0M1717.0 1441.0L1719.3 1439.0M1719.3 1439.0L1721.4 1437.3M1721.4 1437.3L1726.5 1433.3M1726.5 1433.3L1728.7 1431.7M1728.7 1431.7L1731.1 1430.0M1731.1 1430.0L1733.4 1428.4M1733.4 1428.4L1739.5 1424.6M1739.5 1424.6L1740.7 1423.9M1740.7 1423.9L1741.9 1423.1M1741.9 1423.1L1743.1 1422.4M1743.1 1422.4L1916.2 1324.7M1916.2 1324.7L1917.1 1324.2M1917.1 1324.2L1963.5 1297.0M1963.5 1297.0L1965.5 1295.9M1965.5 1295.9L1967.7 1294.7M1967.7 1294.7L1971.8 1292.7M1971.8 1292.7L1974.1 1291.7M1974.1 1291.7L1976.6 1290.8M1976.6 1290.8L1979.3 1289.2M1979.3 1289.2L1989.9 1282.9M1989.9 1282.9L2002.5 1275.4M2002.5 1275.4L2016.4 1267.2M2016.4 1267.2L2031.0 1258.5M2031.0 1258.5L2031.1 1258.5M2031.1 1258.5L2045.6 1249.9M2045.6 1249.9L2045.6 1249.9M2045.6 1249.9L2045.7 1249.9M2045.7 1249.9L2045.8 1249.8M2045.8 1249.8L2059.4 1241.8M2059.4 1241.8L2059.5 1241.8M2059.5 1241.8L2059.6 1241.7M2059.6 1241.7L2059.7 1241.7M2059.7 1241.7L2071.8 1234.6M2071.8 1234.6L2071.9 1234.6M2071.9 1234.6L2072.0 1234.5M2072.0 1234.5L2072.2 1234.4M2072.2 1234.4L2083.1 1228.1M2083.1 1228.1L2083.2 1228.0M2083.2 1228.0L2083.3 1228.0M2083.3 1228.0L2083.4 1227.9M2083.4 1227.9L2094.1 1221.8M2094.1 1221.8L2094.2 1221.8M2094.2 1221.8L2094.3 1221.7M2094.3 1221.7L2094.4 1221.7M2094.4 1221.7L2104.8 1215.8M2104.8 1215.8L2104.8 1215.8M2104.8 1215.8L2104.9 1215.8M2104.9 1215.8L2105.0 1215.7M2105.0 1215.7L2115.1 1210.1M2115.1 1210.1L2115.1 1210.0M2115.1 1210.0L2115.2 1210.0M2115.2 1210.0L2115.2 1210.0M2115.2 1210.0L2125.0 1204.5M2125.0 1204.5L2125.1 1204.5M2125.1 1204.5L2134.6 1199.1M2134.6 1199.1L2143.9 1194.0M2143.9 1194.0L2152.7 1189.1M2152.7 1189.1L2152.8 1189.0M2152.8 1189.0L2161.3 1184.3M2161.3 1184.3L2161.4 1184.3M2161.4 1184.3L2161.5 1184.2M2161.5 1184.2L2161.6 1184.2M2161.6 1184.2L2169.5 1179.8M2169.5 1179.8L2169.6 1179.8M2169.6 1179.8L2169.7 1179.7M2169.7 1179.7L2169.8 1179.7M2169.8 1179.7L2177.3 1175.6M2177.3 1175.6L2177.4 1175.5M2177.4 1175.5L2184.7 1171.6M2184.7 1171.6L2191.8 1167.7M2191.8 1167.7L2198.6 1164.0M2198.6 1164.0L2205.4 1160.2M2205.4 1160.2L2212.2 1156.4M2212.2 1156.4L2218.7 1152.6M2218.7 1152.6L2225.1 1148.8M2225.1 1148.8L2231.6 1144.9M2231.6 1144.9L2238.2 1140.9M2238.2 1140.9L2238.3 1140.9M2238.3 1140.9L2245.0 1136.8M2245.0 1136.8L2245.2 1136.7M2245.2 1136.7L2245.3 1136.6M2245.3 1136.6L2245.5 1136.6M2245.5 1136.6L2252.2 1132.5M2252.2 1132.5L2252.5 1132.4M2252.5 1132.4L2252.7 1132.2M2252.7 1132.2L2253.0 1132.1M2253.0 1132.1L2260.0 1128.0M2260.0 1128.0L2260.3 1127.9M2260.3 1127.9L2260.6 1127.7M2260.6 1127.7L2260.9 1127.5M2260.9 1127.5L2268.4 1123.3M2268.4 1123.3L2276.3 1118.8M2276.3 1118.8L2284.7 1113.9M2284.7 1113.9L2293.6 1108.8M2293.6 1108.8L2293.8 1108.7M2293.8 1108.7L2294.0 1108.5M2294.0 1108.5L2294.2 1108.4M2294.2 1108.4L2303.0 1103.4M2303.0 1103.4L2303.4 1103.2M2303.4 1103.2L2303.9 1102.9M2303.9 1102.9L2304.3 1102.7M2304.3 1102.7L2313.0 1097.9M2313.0 1097.9L2313.7 1097.6M2313.7 1097.6L2314.4 1097.2M2314.4 1097.2L2315.0 1096.9M2315.0 1096.9L2323.5 1092.5M2323.5 1092.5L2324.4 1092.0M2324.4 1092.0L2325.4 1091.5M2325.4 1091.5L2326.4 1091.1M2326.4 1091.1L2334.5 1087.3M2334.5 1087.3L2335.7 1086.7M2335.7 1086.7L2337.1 1086.1M2337.1 1086.1L2338.4 1085.6M2338.4 1085.6L2346.1 1082.4M2346.1 1082.4L2347.5 1081.9M2347.5 1081.9L2349.0 1081.3M2349.0 1081.3L2350.5 1080.8M2350.5 1080.8L2358.3 1078.1M2358.3 1078.1L2359.5 1077.7M2359.5 1077.7L2360.7 1077.3M2360.7 1077.3L2361.8 1077.0M2361.8 1077.0L2370.2 1074.5M2370.2 1074.5L2371.2 1074.2M2371.2 1074.2L2372.2 1073.9M2372.2 1073.9L2373.2 1073.6M2373.2 1073.6L2381.8 1071.4M2381.8 1071.4L2382.7 1071.2M2382.7 1071.2L2383.7 1070.9M2383.7 1070.9L2384.6 1070.7M2384.6 1070.7L2393.2 1068.8M2393.2 1068.8L2394.0 1068.6M2394.0 1068.6L2394.9 1068.4M2394.9 1068.4L2395.8 1068.2M2395.8 1068.2L2404.3 1066.6M2404.3 1066.6L2405.1 1066.4M2405.1 1066.4L2405.9 1066.3M2405.9 1066.3L2406.7 1066.2M2406.7 1066.2L2414.9 1064.8M2414.9 1064.8L2415.7 1064.7M2415.7 1064.7L2416.6 1064.6M2416.6 1064.6L2417.3 1064.5M2417.3 1064.5L2425.1 1063.4M2425.1 1063.4L2425.9 1063.3M2425.9 1063.3L2426.8 1063.2M2426.8 1063.2L2427.6 1063.1M2427.6 1063.1L2429.6 1062.9M2429.6 1062.9L2409.7 1019.7M2409.7 1019.7L2372.3 948.0M2372.3 948.0L2371.6 948.9M2371.6 948.9L2370.7 950.1M2370.7 950.1L2369.8 951.2M2369.8 951.2L2365.9 955.6M2365.9 955.6L2365.1 956.5M2365.1 956.5L2364.3 957.4M2364.3 957.4L2363.5 958.2M2363.5 958.2L2359.2 962.9M2359.2 962.9L2358.5 963.5M2358.5 963.5L2357.8 964.3M2357.8 964.3L2357.1 964.9M2357.1 964.9L2352.3 969.7M2352.3 969.7L2351.8 970.3M2351.8 970.3L2351.1 970.8M2351.1 970.8L2350.6 971.4M2350.6 971.4L2345.4 976.2M2345.4 976.2L2344.9 976.7M2344.9 976.7L2344.4 977.1M2344.4 977.1L2343.9 977.6M2343.9 977.6L2338.5 982.4M2338.5 982.4L2338.1 982.8M2338.1 982.8L2337.7 983.2M2337.7 983.2L2337.2 983.5M2337.2 983.5L2331.8 988.2M2331.8 988.2L2331.2 988.7M2331.2 988.7L2330.5 989.3M2330.5 989.3L2329.9 989.8M2329.9 989.8L2324.5 994.2M2324.5 994.2L2323.7 994.8M2323.7 994.8L2322.8 995.5M2322.8 995.5L2322.0 996.1M2322.0 996.1L2316.3 1000.4M2316.3 1000.4L2315.7 1000.9M2315.7 1000.9L2315.0 1001.3M2315.0 1001.3L2314.4 1001.8M2314.4 1001.8L2308.2 1006.1M2308.2 1006.1L2307.8 1006.5M2307.8 1006.5L2307.2 1006.8M2307.2 1006.8L2306.8 1007.2M2306.8 1007.2L2300.3 1011.6M2300.3 1011.6L2299.9 1011.8M2299.9 1011.8L2299.6 1012.0M2299.6 1012.0L2299.3 1012.2M2299.3 1012.2L2292.5 1016.7M2292.5 1016.7L2292.3 1016.8M2292.3 1016.8L2292.1 1016.9M2292.1 1016.9L2292.0 1017.0M2292.0 1017.0L2284.9 1021.6M2284.9 1021.6L2277.8 1026.2M2277.8 1026.2L2270.7 1030.8M2270.7 1030.8L2263.7 1035.4M2263.7 1035.4L2263.5 1035.5M2263.5 1035.5L2263.4 1035.6M2263.4 1035.6L2263.2 1035.7M2263.2 1035.7L2256.3 1040.2M2256.3 1040.2L2256.2 1040.3M2256.2 1040.3L2256.1 1040.4M2256.1 1040.4L2255.9 1040.5M2255.9 1040.5L2249.0 1044.9M2249.0 1044.9L2248.9 1045.0M2248.9 1045.0L2248.7 1045.1M2248.7 1045.1L2248.6 1045.1M2248.6 1045.1L2241.6 1049.6M2241.6 1049.6L2241.5 1049.7M2241.5 1049.7L2241.4 1049.7M2241.4 1049.7L2241.3 1049.8M2241.3 1049.8L2234.0 1054.4M2234.0 1054.4L2233.9 1054.4M2233.9 1054.4L2233.9 1054.4M2233.9 1054.4L2233.8 1054.5M2233.8 1054.5L2226.2 1059.2M2226.2 1059.2L2226.1 1059.3M2226.1 1059.3L2218.1 1064.3M2218.1 1064.3L2209.6 1069.6M2209.6 1069.6L2200.6 1075.1M2200.6 1075.1L2191.4 1080.8M2191.4 1080.8L2191.3 1080.9M2191.3 1080.9L2181.8 1086.8M2181.8 1086.8L2181.7 1086.8M2181.7 1086.8L2171.9 1092.9M2171.9 1092.9L2171.8 1092.9M2171.8 1092.9L2171.8 1092.9M2171.8 1092.9L2171.7 1093.0M2171.7 1093.0L2161.6 1099.1M2161.6 1099.1L2161.6 1099.2M2161.6 1099.2L2161.5 1099.2M2161.5 1099.2L2161.5 1099.2M2161.5 1099.2L2151.1 1105.6M2151.1 1105.6L2151.0 1105.6M2151.0 1105.6L2150.9 1105.7M2150.9 1105.7L2150.9 1105.7M2150.9 1105.7L2140.1 1112.2M2140.1 1112.2L2140.1 1112.2M2140.1 1112.2L2140.0 1112.3M2140.0 1112.3L2139.9 1112.3M2139.9 1112.3L2128.9 1118.9M2128.9 1118.9L2128.8 1119.0M2128.8 1119.0L2128.7 1119.1M2128.7 1119.1L2128.7 1119.1M2128.7 1119.1L2128.6 1119.2M2128.6 1119.2L2126.1 1120.5M2126.1 1120.5L2123.5 1121.9M2123.5 1121.9L2118.4 1124.3M2118.4 1124.3L2115.6 1125.5M2115.6 1125.5L2110.6 1127.2M2110.6 1127.2L1882.2 1261.2M1882.2 1261.2L1882.0 1261.3M1882.0 1261.3L1881.8 1261.4M1881.8 1261.4L1881.6 1261.5M1881.6 1261.5L1880.5 1262.2M1880.5 1262.2L1880.3 1262.3M1880.3 1262.3L1880.1 1262.4M1880.1 1262.4L1879.9 1262.5M1879.9 1262.5L1640.1 1397.9M1640.1 1397.9L1638.9 1398.6M1638.9 1398.6L1637.6 1399.3M1637.6 1399.3L1636.4 1399.9M1636.4 1399.9L1630.1 1403.1M1630.1 1403.1L1627.6 1404.3M1627.6 1404.3L1624.9 1405.4M1624.9 1405.4L1622.4 1406.5M1622.4 1406.5L1616.4 1408.8M1616.4 1408.8L1613.9 1409.7M1613.9 1409.7L1611.1 1410.6M1611.1 1410.6L1608.5 1411.4M1608.5 1411.4L1602.3 1413.1M1602.3 1413.1L1599.7 1413.8M1599.7 1413.8L1596.8 1414.4M1596.8 1414.4L1594.1 1414.9M1594.1 1414.9L1587.9 1416.0M1587.9 1416.0L1585.1 1416.4M1585.1 1416.4L1582.2 1416.8M1582.2 1416.8L1579.5 1417.1M1579.5 1417.1L1573.2 1417.5M1573.2 1417.5L1570.4 1417.7M1570.4 1417.7L1567.5 1417.7M1567.5 1417.7L1564.8 1417.7M1564.8 1417.7L1558.4 1417.6M1558.4 1417.6L1555.7 1417.4M1555.7 1417.4L1552.8 1417.2M1552.8 1417.2L1550.0 1417.0M1550.0 1417.0L1543.7 1416.2M1543.7 1416.2L1541.0 1415.8M1541.0 1415.8L1538.1 1415.3M1538.1 1415.3L1535.4 1414.8M1535.4 1414.8L1529.2 1413.4M1529.2 1413.4L1526.6 1412.7M1526.6 1412.7L1523.7 1411.9M1523.7 1411.9L1521.1 1411.1M1521.1 1411.1L1515.1 1409.2M1515.1 1409.2L1512.5 1408.2M1512.5 1408.2L1509.8 1407.2M1509.8 1407.2L1507.2 1406.1M1507.2 1406.1L1501.4 1403.6M1501.4 1403.6L1498.9 1402.4M1498.9 1402.4L1496.3 1401.1M1496.3 1401.1L1493.9 1399.8M1493.9 1399.8L1488.4 1396.7M1488.4 1396.7L1486.0 1395.3M1486.0 1395.3L1483.5 1393.7M1483.5 1393.7L1481.2 1392.2M1481.2 1392.2L1476.0 1388.6M1476.0 1388.6L1473.8 1386.9M1473.8 1386.9L1471.5 1385.1M1471.5 1385.1L1469.4 1383.4M1469.4 1383.4L1464.6 1379.3M1464.6 1379.3L1462.5 1377.4M1462.5 1377.4L1460.4 1375.4M1460.4 1375.4L1458.5 1373.5M1458.5 1373.5L1453.6 1368.4M1453.6 1368.4L1452.6 1367.4M1452.6 1367.4L1451.6 1366.3M1451.6 1366.3L1450.7 1365.3M1450.7 1365.3L1419.4 1329.2M1419.4 1329.2L1419.3 1329.1M1419.3 1329.1L1419.2 1329.0M1419.2 1329.0L1419.1 1328.8M1419.1 1328.8L1418.4 1328.1M1418.4 1328.1L1418.3 1327.9M1418.3 1327.9L1418.2 1327.8M1418.2 1327.8L1418.1 1327.7M1418.1 1327.7L1209.3 1081.0M1209.3 1081.0L1208.7 1080.4M1208.7 1080.4L1006.6 848.5M1006.6 848.5L1006.3 848.2M1006.3 848.2L1006.0 847.8M1006.0 847.8L1005.7 847.5M1005.7 847.5L1004.1 845.6M1004.1 845.6L1003.8 845.3M1003.8 845.3L1003.5 844.9M1003.5 844.9L1003.2 844.6M1003.2 844.6L831.1 634.3M831.1 634.3L830.3 633.4M830.3 633.4L825.4 628.2M825.4 628.2L824.6 627.3M824.6 627.3L621.4 436.5M621.4 436.5L572.1 489.0M535.3 490.1L567.1 466.5M535.3 490.1L568.5 511.7M582.4 534.3L563.9 507.3M582.4 534.3L610.6 551.2M629.6 578.6L611.0 551.6M629.6 578.6L657.7 595.4M676.7 622.8L658.1 595.8M676.7 622.8L704.8 639.6M723.8 667.1L705.3 640.1M723.8 667.1L751.9 683.9M769.0 713.1L753.0 684.9M769.0 713.1L794.7 733.5M809.9 763.2L795.1 734.0M809.9 763.2L835.6 783.5M850.9 813.2L836.0 784.0M850.9 813.2L876.6 833.5M891.8 863.2L877.0 834.0M891.8 863.2L917.5 883.5M932.9 913.1L917.8 883.8M932.9 913.1L959.2 932.6M975.3 961.8L959.6 933.1M975.3 961.8L1001.6 981.4M1017.8 1010.5L1002.1 981.8M1017.8 1010.5L1044.1 1030.1M1060.3 1059.3L1044.5 1030.5M1060.3 1059.3L1086.6 1078.8M1102.8 1108.0L1087.0 1079.3M1102.8 1108.0L1129.1 1127.5M1145.0 1156.9L1129.5 1128.1M1145.0 1156.9L1171.1 1176.8M1186.8 1206.2L1171.5 1177.2M1186.8 1206.2L1212.8 1226.1M1228.6 1255.5L1213.2 1226.6M1228.6 1255.5L1254.6 1275.4M1270.3 1304.8L1255.0 1275.9M1270.3 1304.8L1296.4 1324.7M1312.1 1354.2L1296.8 1325.2M1312.1 1354.2L1338.1 1374.1M1354.0 1403.4L1338.5 1374.5M1354.0 1403.4L1380.3 1422.9M1396.4 1452.2L1380.7 1423.4M1396.4 1452.2L1422.7 1471.7M1438.8 1501.0L1423.1 1472.2M1438.8 1501.0L1465.0 1520.5M1481.2 1549.7L1465.4 1521.0M1481.2 1549.7L1507.6 1569.1M1523.9 1598.3L1508.0 1569.6M1523.9 1598.3L1550.2 1617.7M1566.5 1646.8L1550.7 1618.2M1566.5 1646.8L1592.9 1666.2M1609.2 1695.4L1593.3 1666.7M1609.2 1695.4L1635.6 1714.8M1651.9 1743.9L1636.0 1715.2M1651.9 1743.9L1678.3 1763.3M1694.6 1792.4L1678.7 1763.8M1694.6 1792.4L1720.9 1811.9M1737.2 1841.0L1721.4 1812.3M1737.2 1841.0L1763.6 1860.4M1779.9 1889.5L1764.0 1860.9M1779.9 1889.5L1806.3 1909.0M1822.5 1938.1L1806.7 1909.4M1822.5 1938.1L1848.8 1957.6M1865.1 1986.8L1849.3 1958.1M1865.1 1986.8L1891.7 2002.6M1910.3 1995.6L1882.6 1996.2M1910.3 1995.6L1929.8 1969.3M1958.9 1953.1L1930.2 1968.9M1958.9 1953.1L1967.4 1926.0M1960.4 1907.4L1968.3 1935.5M1960.4 1907.4L1934.0 1887.9M1917.8 1858.7L1933.6 1887.4M1917.8 1858.7L1891.5 1839.3M1875.2 1810.1L1891.1 1838.8M1875.2 1810.1L1848.8 1790.7M1832.5 1761.6L1848.4 1790.2M1832.5 1761.6L1806.1 1742.2M1789.9 1713.0L1805.7 1741.7M1789.9 1713.0L1763.5 1693.6M1747.2 1664.5L1763.0 1693.2M1747.2 1664.5L1720.8 1645.1M1707.0 1614.0L1719.2 1643.3M1707.0 1614.0L1689.1 1587.6M1691.9 1552.0L1688.1 1583.6M1691.9 1552.0L1689.3 1520.2M1709.3 1490.5L1690.4 1516.3M1709.3 1490.5L1722.7 1461.8M1754.9 1445.7L1725.8 1458.8M1754.9 1445.7L1779.2 1423.9M1811.2 1413.9L1779.9 1423.5M1811.2 1413.9L1835.6 1392.0M1867.5 1382.1L1836.2 1391.7M1867.5 1382.1L1891.9 1360.3M1923.7 1350.3L1892.4 1359.9M1923.7 1350.3L1948.0 1328.1M1979.6 1317.8L1948.6 1327.7M1979.6 1317.8L2004.4 1296.4M2035.7 1285.9L2004.6 1296.2M2035.7 1285.9L2059.7 1263.7M2091.5 1253.3L2060.4 1263.3M2091.5 1253.3L2115.8 1231.4M2147.8 1221.6L2116.5 1231.0M2147.8 1221.6L2172.4 1199.9M2204.5 1190.4L2173.0 1199.6M2204.5 1190.4L2229.0 1168.6M2260.3 1158.0L2229.3 1168.4M2260.3 1158.0L2284.5 1136.0M2316.4 1125.7L2285.2 1135.6M2316.4 1125.7L2341.4 1105.0M2375.5 1100.0L2343.4 1104.1M2375.5 1100.0L2404.6 1085.9M2438.9 1088.1L2406.6 1085.5M2438.9 1088.1L2454.0 1070.3M2456.3 1058.5L2448.0 1080.6M2456.3 1058.5L2436.5 1032.4M2428.8 1000.0L2436.4 1032.1M2428.8 1000.0L2407.8 974.9M2398.9 942.7L2407.5 974.3M2398.9 942.7L2377.9 917.6M2369.4 904.5L2389.0 939.0M2369.4 904.5L2356.6 937.3M2329.9 955.1L2356.7 937.1M2329.9 955.1L2310.4 981.1M2278.8 994.6L2308.9 982.2M2278.8 994.6L2255.8 1017.9M2224.5 1029.6L2255.2 1018.3M2224.5 1029.6L2201.1 1052.5M2169.6 1063.7L2200.5 1052.8M2169.6 1063.7L2146.0 1086.4M2114.4 1097.3L2145.2 1086.9M2114.4 1097.3L2089.3 1117.7M2057.7 1128.1L2088.9 1118.0M2057.7 1128.1L2033.7 1150.3M2002.0 1160.8L2033.1 1150.7M2002.0 1160.8L1977.9 1183.0M1946.2 1193.5L1977.4 1183.4M1946.2 1193.5L1922.2 1215.7M1890.5 1226.2L1921.6 1216.1M1890.5 1226.2L1866.4 1248.3M1834.4 1258.4L1865.7 1248.7M1834.4 1258.4L1810.0 1280.2M1778.1 1290.1L1809.4 1280.5M1778.1 1290.1L1753.7 1312.0M1721.8 1321.9L1753.1 1312.3M1721.8 1321.9L1697.4 1343.7M1665.6 1353.7L1696.9 1344.1M1665.6 1353.7L1641.1 1375.5M1608.5 1384.0L1639.7 1376.3M1608.5 1384.0L1580.0 1397.9M1544.9 1390.1L1575.6 1398.3M1544.9 1390.1L1513.1 1388.0M1486.6 1363.9L1509.2 1386.3M1486.6 1363.9L1459.7 1346.6M1442.8 1316.5L1458.5 1345.2M1442.8 1316.5L1416.8 1296.7M1401.0 1267.2L1416.3 1296.2M1401.0 1267.2L1375.0 1247.3M1359.2 1217.9L1374.5 1246.8M1359.2 1217.9L1333.2 1198.0M1317.4 1168.6L1332.8 1197.5M1317.4 1168.6L1291.4 1148.7M1275.7 1119.2L1291.0 1148.2M1275.7 1119.2L1249.6 1099.3M1233.9 1069.9L1249.2 1098.9M1233.9 1069.9L1207.6 1050.2M1191.5 1021.1L1207.3 1049.8M1191.5 1021.1L1165.2 1001.6M1149.0 972.4L1164.8 1001.1M1149.0 972.4L1122.7 952.9M1106.6 923.7L1122.3 952.4M1106.6 923.7L1080.3 904.2M1064.1 875.0L1079.9 903.7M1064.1 875.0L1037.8 855.4M1021.7 826.1L1037.2 854.8M1021.7 826.1L996.1 805.8M980.8 776.1L995.7 805.3M980.8 776.1L955.1 755.8M939.9 726.1L954.7 755.3M939.9 726.1L914.2 705.8M898.9 676.1L913.8 705.3M898.9 676.1L873.2 655.8M858.0 626.1L872.8 655.3M858.0 626.1L830.8 607.1M812.5 580.3L831.0 607.3M812.5 580.3L784.4 563.5M765.4 536.0L783.9 563.1M765.4 536.0L737.3 519.2M718.3 491.8L736.8 518.8M718.3 491.8L690.2 475.0M671.2 447.6L689.7 474.6M671.2 447.6L643.0 430.8M624.0 403.3L643.8 431.5M624.0 403.3L598.6 432.9M579.6 443.0L606.6 424.5M579.6 443.0L562.8 471.1M545.2 489.8L585.9 456.7M545.2 489.8L587.9 520.3M611.6 552.1L583.6 516.2M611.6 552.1L649.2 577.8M678.0 614.4L649.9 578.5M678.0 614.4L715.6 640.1M744.3 676.8L716.3 640.9M744.3 676.8L779.9 704.4M804.3 745.2L781.2 705.9M804.3 745.2L838.2 775.6M861.9 815.6L838.8 776.4M861.9 815.6L895.8 846.0M919.6 886.1L896.5 846.8M919.6 886.1L954.0 916.1M978.8 955.2L954.5 916.7M978.8 955.2L1013.7 984.5M1038.7 1023.8L1014.4 985.3M1038.7 1023.8L1073.5 1053.1M1098.5 1092.5L1074.2 1053.9M1098.5 1092.5L1133.3 1121.8M1158.0 1161.4L1134.1 1122.6M1158.0 1161.4L1192.4 1191.2M1216.9 1230.8L1193.1 1192.0M1216.9 1230.8L1251.3 1260.7M1275.7 1300.3L1252.0 1261.5M1275.7 1300.3L1310.1 1330.1M1334.5 1369.8L1310.8 1330.9M1334.5 1369.8L1369.2 1399.4M1394.0 1438.7L1369.8 1400.2M1394.0 1438.7L1428.8 1468.1M1453.7 1507.5L1429.5 1468.9M1453.7 1507.5L1488.5 1536.9M1513.6 1576.0L1489.2 1537.6M1513.6 1576.0L1548.6 1605.2M1573.7 1644.4L1549.3 1606.0M1573.7 1644.4L1608.7 1673.6M1633.8 1712.8L1609.4 1674.4M1633.8 1712.8L1668.8 1742.0M1694.0 1781.2L1669.5 1742.8M1694.0 1781.2L1728.9 1810.3M1754.1 1849.5L1729.6 1811.1M1754.1 1849.5L1789.0 1878.7M1814.2 1918.0L1789.7 1879.5M1814.2 1918.0L1849.1 1947.2M1874.1 1986.5L1849.7 1948.0M1874.1 1986.5L1911.7 1975.8M1940.4 1960.0L1901.9 1984.3M1940.4 1960.0L1956.5 1924.2M1940.7 1895.5L1959.9 1933.6M1940.7 1895.5L1905.8 1866.2M1880.7 1827.0L1905.1 1865.4M1880.7 1827.0L1845.7 1797.8M1820.6 1758.6L1845.0 1797.0M1820.6 1758.6L1785.6 1729.4M1760.5 1690.2L1784.9 1728.6M1760.5 1690.2L1725.5 1661.0M1702.4 1620.2L1723.9 1659.2M1702.4 1620.2L1680.6 1581.8M1686.6 1532.4L1679.5 1576.0M1686.6 1532.4L1694.2 1488.8M1730.4 1454.6L1697.1 1483.7M1730.4 1454.6L1763.4 1424.8M1808.2 1407.5L1765.5 1423.6M1808.2 1407.5L1843.9 1379.3M1887.5 1362.8L1844.8 1378.8M1887.5 1362.8L1923.2 1334.5M1966.4 1317.3L1924.0 1334.1M1966.4 1317.3L2002.2 1289.6M2045.3 1272.1L2003.0 1289.0M2045.3 1272.1L2080.6 1243.4M2124.2 1226.7L2081.6 1242.8M2124.2 1226.7L2160.1 1198.7M2203.9 1182.7L2161.1 1198.2M2203.9 1182.7L2239.6 1154.1M2282.7 1137.0L2240.4 1153.7M2282.7 1137.0L2318.3 1108.7M2363.9 1096.3L2320.4 1107.6M2363.9 1096.3L2405.2 1078.6M2453.2 1080.6L2403.2 1079.0M2453.2 1080.6L2428.9 1032.7M2422.6 1003.3L2435.6 1047.2M2422.6 1003.3L2395.6 966.6M2380.5 922.6L2395.1 965.7M2380.5 922.6L2345.8 959.3M2324.5 969.5L2360.9 943.1M2324.5 969.5L2293.2 1001.9M2250.0 1021.7L2291.5 1003.0M2250.0 1021.7L2215.8 1051.6M2172.8 1070.0L2214.7 1052.2M2172.8 1070.0L2138.1 1099.4M2093.9 1115.0L2137.1 1100.0M2093.9 1115.0L2058.6 1143.8M2015.4 1161.1L2057.7 1144.3M2015.4 1161.1L1980.1 1189.9M1936.8 1207.1L1979.2 1190.4M1936.8 1207.1L1901.6 1235.9M1858.2 1253.0L1900.6 1236.5M1858.2 1253.0L1822.4 1281.2M1778.9 1297.7L1821.5 1281.7M1778.9 1297.7L1743.1 1326.0M1699.6 1342.5L1742.2 1326.5M1699.6 1342.5L1663.9 1370.7M1620.1 1386.8L1662.5 1371.5M1620.1 1386.8L1579.8 1405.0M1531.1 1394.3L1573.9 1405.4M1531.1 1394.3L1488.4 1382.6M1457.3 1343.8L1484.2 1379.6M1457.3 1343.8L1422.6 1314.4M1398.1 1274.6L1421.8 1313.5M1398.1 1274.6L1363.7 1244.8M1339.3 1205.2L1363.0 1244.0M1339.3 1205.2L1304.8 1175.3M1280.4 1135.7L1304.2 1174.5M1280.4 1135.7L1246.0 1105.9M1221.5 1066.2L1245.4 1105.1M1221.5 1066.2L1186.7 1036.9M1161.7 997.6L1186.0 1036.1M1161.7 997.6L1126.9 968.3M1101.9 929.0L1126.2 967.5M1101.9 929.0L1067.0 899.6M1042.1 860.3L1066.4 898.8M1042.1 860.3L1007.5 830.8M983.6 790.6L1006.7 829.8M983.6 790.6L949.7 760.2M925.9 720.1L949.0 759.4M925.9 720.1L892.0 689.7M868.2 649.7L891.3 688.9M868.2 649.7L833.9 619.6M805.8 583.6L833.8 619.5M805.8 583.6L768.2 557.9M739.4 521.3L767.5 557.2M739.4 521.3L701.8 495.6M673.1 459.0L701.1 494.9M673.1 459.0L635.5 433.3M607.5 423.4L644.9 442.1M607.5 423.4L581.8 461.0M555.1 489.5L587.6 463.7M555.1 489.5L589.1 513.2M606.4 537.6L585.0 509.3M606.4 537.6L636.0 557.2M657.6 585.7L636.2 557.4M657.6 585.7L687.2 605.3M708.9 633.9L687.5 605.5M708.9 633.9L738.5 653.4M760.1 682.0L738.8 653.7M760.1 682.0L787.3 704.0M805.5 735.6L788.0 704.8M805.5 735.6L832.3 758.9M850.0 790.0L832.5 759.2M850.0 790.0L876.8 813.3M894.6 844.4L877.0 813.6M894.6 844.4L921.4 867.7M939.1 898.8L921.6 868.0M939.1 898.8L966.7 921.5M985.2 951.9L966.8 921.6M985.2 951.9L1012.8 974.3M1031.4 1004.9L1013.0 974.6M1031.4 1004.9L1059.0 1027.3M1077.6 1057.9L1059.2 1027.5M1077.6 1057.9L1105.2 1080.3M1123.8 1110.9L1105.4 1080.5M1123.8 1110.9L1151.3 1133.3M1169.6 1164.2L1151.6 1133.6M1169.6 1164.2L1196.8 1187.0M1215.0 1217.9L1197.0 1187.3M1215.0 1217.9L1242.2 1240.7M1260.5 1271.5L1242.4 1240.9M1260.5 1271.5L1287.7 1294.4M1305.9 1325.2L1287.9 1294.6M1305.9 1325.2L1333.1 1348.0M1351.3 1378.8L1333.3 1348.2M1351.3 1378.8L1378.8 1401.4M1397.4 1432.0L1379.0 1401.6M1397.4 1432.0L1424.9 1454.4M1443.5 1485.0L1425.1 1454.7M1443.5 1485.0L1471.0 1507.5M1489.6 1538.1L1471.1 1507.7M1489.6 1538.1L1517.2 1560.4M1536.0 1590.9L1517.4 1560.7M1536.0 1590.9L1563.6 1613.2M1582.4 1643.7L1563.8 1613.5M1582.4 1643.7L1610.1 1666.0M1628.9 1696.5L1610.3 1666.3M1628.9 1696.5L1656.5 1718.8M1675.3 1749.3L1656.7 1719.1M1675.3 1749.3L1702.9 1771.6M1721.7 1802.1L1703.1 1771.9M1721.7 1802.1L1749.3 1824.4M1768.1 1854.9L1749.5 1824.7M1768.1 1854.9L1795.7 1877.2M1814.5 1907.7L1795.9 1877.5M1814.5 1907.7L1842.1 1930.1M1860.8 1960.6L1842.3 1930.3M1860.8 1960.6L1888.4 1983.0M1909.5 1977.7L1880.7 1974.2M1909.5 1977.7L1931.9 1950.2M1962.4 1931.4L1927.8 1953.7M1962.4 1931.4L1931.1 1904.3M1916.5 1878.6L1935.1 1908.9M1916.5 1878.6L1889.0 1856.2M1870.2 1825.7L1888.8 1856.0M1870.2 1825.7L1842.6 1803.3M1823.8 1772.9L1842.4 1803.1M1823.8 1772.9L1796.2 1750.5M1777.4 1720.1L1796.0 1750.3M1777.4 1720.1L1749.8 1697.7M1731.0 1667.3L1749.6 1697.5M1731.0 1667.3L1703.6 1644.8M1689.8 1610.7L1702.3 1643.1M1689.8 1610.7L1674.1 1579.8M1678.3 1542.1L1673.5 1576.4M1678.3 1542.1L1679.6 1507.4M1701.6 1476.6L1680.7 1504.2M1701.6 1476.6L1719.6 1446.8M1753.6 1430.3L1721.8 1444.8M1753.6 1430.3L1781.1 1407.9M1814.8 1395.7L1781.4 1407.7M1814.8 1395.7L1842.3 1373.3M1876.0 1361.2L1842.6 1373.2M1876.0 1361.2L1903.6 1338.7M1937.1 1326.4L1903.7 1338.6M1937.1 1326.4L1964.3 1303.5M1998.3 1291.9L1964.5 1303.3M1998.3 1291.9L2025.3 1268.9M2058.8 1256.1L2025.6 1268.7M2058.8 1256.1L2086.1 1233.3M2119.8 1221.1L2086.4 1233.1M2119.8 1221.1L2147.5 1198.9M2181.3 1187.1L2147.8 1198.7M2181.3 1187.1L2209.1 1165.0M2242.5 1152.4L2209.2 1165.0M2242.5 1152.4L2269.5 1129.5M2303.2 1117.1L2269.9 1129.3M2303.2 1117.1L2331.2 1095.5M2367.0 1087.9L2332.7 1094.8M2367.0 1087.9L2399.3 1073.7M2435.9 1074.3L2400.7 1073.4M2435.9 1074.3L2425.4 1039.3M2423.3 1020.6L2432.5 1054.9M2423.3 1020.6L2402.0 991.9M2391.1 958.1L2402.0 991.9M2391.1 958.1L2368.4 943.3M2353.5 951.4L2378.3 946.6M2353.5 951.4L2332.6 979.6M2300.3 997.1L2331.4 980.7M2300.3 997.1L2274.4 1021.2M2241.4 1035.5L2274.0 1021.5M2241.4 1035.5L2214.9 1059.2M2181.7 1072.7L2214.6 1059.3M2181.7 1072.7L2155.1 1096.1M2121.7 1109.3L2154.6 1096.4M2121.7 1109.3L2093.5 1130.3M2060.1 1142.9L2093.4 1130.4M2060.1 1142.9L2033.0 1165.8M1999.5 1178.5L2032.7 1166.0M1999.5 1178.5L1972.3 1201.4M1938.8 1214.1L1972.1 1201.5M1938.8 1214.1L1911.7 1236.9M1878.2 1249.6L1911.4 1237.1M1878.2 1249.6L1850.8 1272.1M1817.0 1284.2L1850.4 1272.3M1817.0 1284.2L1789.5 1306.7M1755.8 1318.8L1789.2 1306.8M1755.8 1318.8L1728.3 1341.3M1694.6 1353.4L1728.0 1341.4M1694.6 1353.4L1667.1 1375.8M1633.4 1388.0L1666.7 1376.0M1633.4 1388.0L1603.9 1406.4M1566.1 1405.7L1600.7 1407.3M1566.1 1405.7L1531.4 1407.7M1498.7 1388.7L1528.1 1406.9M1498.7 1388.7L1467.3 1373.7M1446.6 1342.2L1465.6 1372.0M1446.6 1342.2L1419.2 1319.7M1400.9 1288.8L1418.9 1319.4M1400.9 1288.8L1373.7 1266.0M1355.5 1235.1L1373.5 1265.7M1355.5 1235.1L1328.3 1212.3M1310.0 1181.5L1328.1 1212.1M1310.0 1181.5L1282.8 1158.6M1264.6 1127.8L1282.6 1158.4M1264.6 1127.8L1237.4 1105.0M1219.2 1074.2L1237.2 1104.8M1219.2 1074.2L1191.6 1051.7M1173.0 1021.2L1191.5 1051.5M1173.0 1021.2L1145.5 998.7M1126.8 968.2L1145.3 998.5M1126.8 968.2L1099.3 945.7M1080.6 915.2L1099.1 945.5M1080.6 915.2L1053.1 892.7M1034.4 862.2L1052.9 892.5M1034.4 862.2L1007.0 839.7M989.1 808.4L1006.7 839.3M989.1 808.4L962.3 785.1M944.6 754.0L962.1 784.9M944.6 754.0L917.8 730.7M900.1 699.6L917.6 730.5M900.1 699.6L873.2 676.3M855.5 645.2L873.1 676.1M855.5 645.2L828.1 622.4M807.1 594.4L828.5 622.8M807.1 594.4L777.5 574.8M755.8 546.3L777.2 574.6M755.8 546.3L726.2 526.7M704.6 498.2L726.0 526.5M704.6 498.2L675.0 478.6M653.3 450.0L674.7 478.4M653.3 450.0L623.7 430.5M603.2 438.2L632.2 438.5M603.2 438.2L583.7 467.9M563.6 489.2L599.5 459.8M563.6 489.2L601.2 516.3M622.4 544.5L597.4 512.7M622.4 544.5L655.7 567.5M681.3 599.7L656.2 568.0M681.3 599.7L714.6 622.7M740.1 655.0L715.1 623.2M740.1 655.0L773.2 678.3M795.3 713.7L774.2 679.4M795.3 713.7L825.3 740.9M846.5 776.2L825.8 741.5M846.5 776.2L876.4 803.4M897.6 838.7L876.9 803.9M897.6 838.7L927.6 865.8M948.9 901.0L927.9 866.2M948.9 901.0L979.7 927.2M1001.9 961.9L980.2 927.8M1001.9 961.9L1032.7 988.1M1055.0 1022.7L1033.2 988.6M1055.0 1022.7L1085.8 1048.9M1108.0 1083.6L1086.3 1049.5M1108.0 1083.6L1138.8 1109.8M1160.9 1144.6L1139.4 1110.4M1160.9 1144.6L1191.3 1171.3M1213.0 1206.2L1191.8 1171.8M1213.0 1206.2L1243.5 1232.9M1265.2 1267.8L1243.9 1233.4M1265.2 1267.8L1295.6 1294.5M1317.4 1329.4L1296.1 1295.0M1317.4 1329.4L1347.8 1356.1M1369.7 1390.9L1348.2 1356.6M1369.7 1390.9L1400.5 1417.2M1422.6 1451.9L1400.9 1417.7M1422.6 1451.9L1453.4 1478.1M1475.6 1512.8L1453.9 1478.7M1475.6 1512.8L1506.4 1539.0M1528.7 1573.5L1506.8 1539.5M1528.7 1573.5L1559.7 1599.6M1582.0 1634.2L1560.1 1600.2M1582.0 1634.2L1613.0 1660.3M1635.4 1694.8L1613.4 1660.8M1635.4 1694.8L1666.3 1720.9M1688.7 1755.4L1666.7 1721.4M1688.7 1755.4L1719.6 1781.5M1742.0 1816.1L1720.0 1782.1M1742.0 1816.1L1772.9 1842.1M1795.3 1876.7L1773.3 1842.7M1795.3 1876.7L1826.1 1902.8M1848.5 1937.4L1826.6 1903.4M1848.5 1937.4L1879.3 1963.6M1903.1 1975.3L1871.9 1955.1M1903.1 1975.3L1929.3 1944.5M1945.7 1920.9L1920.8 1951.9M1945.7 1920.9L1914.8 1894.8M1892.5 1860.2L1914.3 1894.2M1892.5 1860.2L1861.6 1834.1M1839.2 1799.5L1861.1 1833.5M1839.2 1799.5L1808.3 1773.4M1785.9 1738.9L1807.8 1772.9M1785.9 1738.9L1755.0 1712.8M1732.6 1678.2L1754.5 1712.3M1732.6 1678.2L1701.8 1652.1M1684.6 1613.8L1700.2 1650.2M1684.6 1613.8L1667.7 1578.1M1673.1 1535.0L1667.1 1574.2M1673.1 1535.0L1677.6 1495.8M1705.0 1462.0L1679.4 1491.9M1705.0 1462.0L1729.7 1431.0M1769.5 1414.4L1732.1 1429.4M1769.5 1414.4L1801.4 1389.5M1839.8 1374.7L1802.1 1389.2M1839.8 1374.7L1871.7 1349.8M1910.1 1335.0L1872.3 1349.5M1910.1 1335.0L1941.8 1309.7M1980.4 1295.5L1942.3 1309.4M1980.4 1295.5L2011.8 1269.9M2049.9 1254.4L2012.4 1269.5M2049.9 1254.4L2081.4 1229.1M2119.9 1214.2L2082.2 1228.6M2119.9 1214.2L2152.0 1189.5M2190.6 1175.2L2152.7 1189.1M2190.6 1175.2L2222.6 1150.3M2260.4 1134.7L2223.1 1150.0M2260.4 1134.7L2292.1 1109.6M2331.0 1095.5L2293.2 1109.0M2331.0 1095.5L2365.8 1075.8M2408.0 1072.0L2368.0 1075.1M2408.0 1072.0L2422.5 1047.3M2417.8 1022.8L2429.1 1061.7M2417.8 1022.8L2394.1 989.7M2380.7 951.1L2393.9 989.3M2380.7 951.1L2349.5 972.4M2328.3 983.3L2361.4 960.5M2328.3 983.3L2300.1 1011.7M2262.1 1029.3L2298.9 1012.5M2262.1 1029.3L2231.6 1055.8M2193.8 1072.3L2230.9 1056.3M2193.8 1072.3L2162.9 1098.4M2124.9 1114.4L2162.0 1098.9M2124.9 1114.4L2092.4 1137.9M2054.3 1153.3L2091.8 1138.2M2054.3 1153.3L2022.8 1178.7M1984.6 1194.1L2022.2 1179.1M1984.6 1194.1L1953.2 1219.6M1915.0 1235.0L1952.6 1219.9M1915.0 1235.0L1883.5 1260.4M1845.1 1275.3L1882.8 1260.8M1845.1 1275.3L1813.2 1300.2M1774.8 1315.0L1812.6 1300.5M1774.8 1315.0L1742.9 1339.9M1704.5 1354.7L1742.3 1340.2M1704.5 1354.7L1672.6 1379.6M1634.1 1394.3L1671.8 1380.1M1634.1 1394.3L1599.6 1413.8M1556.3 1411.5L1595.8 1414.6M1556.3 1411.5L1516.9 1409.8M1481.2 1384.9L1513.0 1408.4M1481.2 1384.9L1448.5 1362.7M1425.3 1326.9L1447.0 1361.0M1425.3 1326.9L1394.9 1300.3M1373.1 1265.3L1394.4 1299.7M1373.1 1265.3L1342.7 1238.7M1321.0 1203.7L1342.2 1238.1M1321.0 1203.7L1290.6 1177.0M1268.8 1142.1L1290.1 1176.5M1268.8 1142.1L1238.4 1115.4M1216.6 1080.5L1237.9 1114.9M1216.6 1080.5L1185.8 1054.2M1163.6 1019.6L1185.4 1053.7M1163.6 1019.6L1132.8 993.4M1110.6 958.7L1132.4 992.8M1110.6 958.7L1079.8 932.5M1057.6 897.9L1079.3 932.0M1057.6 897.9L1026.7 871.7M1004.7 836.9L1026.1 871.0M1004.7 836.9L974.7 809.7M953.5 774.4L974.2 809.2M953.5 774.4L923.6 747.3M902.4 711.9L923.1 746.7M902.4 711.9L872.4 684.8M851.3 649.5L872.0 684.2M851.3 649.5L820.3 623.3M795.3 591.5L820.3 623.3M795.3 591.5L762.0 568.5M736.4 536.3L761.5 568.0M736.4 536.3L703.1 513.3M677.6 481.0L702.6 512.8M677.6 481.0L644.3 458.0M618.9 430.4L650.5 463.8M618.9 430.4L594.0 465.6M864.9 744.2L842.8 741.7M945.4 821.5L929.0 845.2M934.1 760.2L919.7 755.6M1855.5 1875.3L1857.1 1900.3M802.6 713.1L828.1 744.3M892.2 777.7L865.5 773.6M1639.9 1690.9L1666.5 1721.1M1833.7 1869.0L1805.3 1862.2M2165.2 1097.0L2150.0 1057.0M1918.8 1941.8L1894.0 1961.1M1505.2 1495.7L1510.8 1520.4M1666.5 1721.1L1693.0 1751.3M1857.1 1900.3L1837.3 1890.9M1949.9 1305.0L1985.1 1285.7M1480.6 1509.5L1505.2 1495.7M1528.5 1475.0L1536.8 1501.3M1985.1 1285.7L2019.7 1265.2M1816.9 1298.1L1781.9 1317.9M1665.9 1558.6L1616.0 1577.6M1746.9 1337.6L1765.1 1338.3M1555.2 1504.6L1577.8 1478.6M1169.4 1035.3L1151.7 1035.3M1781.9 1317.9L1746.9 1337.6M832.2 635.6L803.5 607.5M1682.8 1386.9L1716.5 1390.4M2330.0 1028.6L2289.4 1053.8M1604.7 1412.4L1636.1 1435.9M1722.9 1365.9L1755.4 1363.5M1818.3 1343.6L1848.3 1352.6M2252.8 1157.5L2250.4 1168.7M1413.6 1335.4L1413.9 1368.5M1860.2 1322.7L1888.2 1324.6M2247.2 1077.7L2253.9 1044.5M2362.4 995.1L2393.0 1033.3M2296.0 1130.0L2329.3 1123.2M1445.2 1369.0L1442.7 1400.6M1068.9 957.9L1065.4 989.1M2393.5 1087.7L2372.0 1116.0M1094.5 993.9L1096.9 1016.5M713.2 584.7L721.0 608.8M2441.0 1083.0L2418.7 1106.6M1955.6 1253.3L1970.9 1281.6M2165.2 1097.0L2175.7 1062.3M744.1 615.7L751.8 639.7M1682.9 1696.7L1685.8 1723.0M1995.2 1228.3L2006.1 1254.4M2233.6 1054.6L2201.9 1030.4M959.6 791.3L970.1 830.9M1717.0 1731.7L1717.0 1755.7M2201.9 1030.4L2175.7 1062.3M1639.9 1690.9L1657.8 1664.5M1565.0 1417.7L1525.2 1412.3M1666.5 1721.1L1682.9 1696.7M2159.4 1185.4L2132.0 1182.5M656.9 469.8L627.5 442.3M1427.9 1448.8L1423.4 1424.0M1961.6 1223.6L1995.2 1228.3M2099.2 1187.8L2132.0 1182.5M2290.0 975.0L2238.5 993.3M639.6 471.7L611.9 468.5M2172.5 1126.3L2186.5 1097.3M2514.0 1116.0L2519.1 1128.9M1616.0 1577.6L1589.8 1570.9M1326.1 1219.0L1301.2 1233.2M1266.6 1194.2L1246.4 1191.2M2201.4 1188.7L2150.0 1240.0M1356.5 1270.3L1334.4 1296.4M922.8 815.2L897.2 813.6M1381.5 1304.6L1360.6 1325.6M1004.5 890.3L983.0 914.0M2334.9 1087.1L2358.2 1043.6M853.6 775.4L879.0 806.5M952.3 851.5L929.0 845.2M1888.7 1937.3L1863.2 1926.1M1039.6 927.3L1014.6 948.2M1719.6 1781.6L1746.2 1811.8M1533.7 1570.1L1569.0 1562.6M2054.4 1244.8L2089.2 1224.6M1825.8 1902.4L1833.7 1869.0M1985.1 1285.7L1970.9 1281.6M1586.8 1630.5L1599.5 1622.0M1878.8 1963.0L1863.2 1926.1M1645.1 1410.1L1636.1 1435.9M1297.0 1296.1L1304.7 1285.3M1907.3 1963.7L1894.0 1961.1M1780.6 1365.8L1766.4 1390.4M1613.4 1660.7L1599.5 1622.0M656.9 469.8L666.7 498.7M1767.1 1726.6L1733.7 1712.3M1921.6 1238.1L1921.8 1251.3M1300.1 1188.3L1265.4 1168.6M2301.2 1010.9L2289.4 1053.8M2248.7 1114.3L2210.4 1088.4M1472.8 1409.4L1476.0 1436.1M2233.6 1054.6L2211.9 1057.4M1899.8 1877.7L1914.8 1911.1M2393.5 1087.7L2417.6 1094.4M1496.3 1442.8L1501.6 1472.0M1123.9 1024.2L1128.2 1050.8M1555.2 1504.6L1533.5 1528.3M1152.7 1056.8L1157.1 1086.5M780.1 641.2L782.5 671.9M2402.7 1006.2L2401.4 1005.4M1008.6 960.4L1035.0 990.7M1128.2 1050.8L1104.0 1045.9M1215.7 1128.6L1190.6 1149.4M2362.6 959.2L2388.1 936.2M809.3 675.3L812.2 705.2M1878.8 1963.0L1907.3 1963.7M1525.2 1412.3L1528.5 1475.0M1769.3 1800.1L1771.7 1823.1M2233.6 1054.6L2210.4 1088.4M1907.3 1963.7L1937.6 1937.2M2264.3 1125.6L2299.2 1105.6M934.1 760.2L921.2 789.6M2095.1 1136.3L2113.9 1158.0M630.7 544.0L649.5 524.0M2299.2 1105.6L2334.9 1087.1M1488.3 1396.7L1456.8 1371.8M2412.1 1065.3L2393.0 1033.3M1746.2 1811.8L1742.5 1792.0M689.4 599.1L688.3 576.7M1719.6 1781.6L1741.0 1765.3M1456.8 1371.8L1430.2 1341.6M1480.6 1509.5L1510.8 1520.4M1772.7 1842.0L1771.7 1823.1M1714.0 1666.1L1707.5 1678.8M1169.4 1035.3L1152.7 1056.8M2047.3 1179.9L2073.0 1182.8M1991.0 1197.4L1961.6 1223.6M1616.0 1577.6L1651.5 1612.8M2492.6 1099.0L2461.4 1097.0M706.7 530.9L679.6 526.2M1676.4 1641.8L1679.4 1671.7M2382.9 1061.1L2393.0 1033.3M2358.2 1043.6L2382.9 1061.1M572.1 489.0L599.6 459.6M1852.0 1278.3L1874.2 1297.2M1326.8 1266.7L1334.4 1296.4M1755.4 1363.5L1766.4 1390.4M978.0 888.4L983.0 914.0M1604.5 1435.1L1623.4 1459.5M1845.1 1364.9L1818.3 1343.6M2150.0 1036.0L2175.7 1062.3M1005.6 918.2L1014.6 948.2M1665.9 1558.6L1586.2 1545.5M1746.9 1337.6L1722.9 1365.9M1555.2 1504.6L1536.8 1501.3M2264.3 1125.6L2248.7 1114.3M1143.0 1005.0L1151.7 1035.3M1670.1 1518.7L1586.2 1545.5M2054.4 1244.8L2050.0 1236.7M572.1 489.0L592.3 486.2M1639.9 1690.9L1654.2 1693.0M879.0 806.5L865.5 773.6M2089.2 1224.6L2089.6 1209.3M1722.9 1365.9L1716.5 1390.4M1666.5 1721.1L1685.8 1723.0M2035.3 1205.6L2056.7 1211.1M1222.1 1096.2L1235.1 1130.0M1860.2 1322.7L1848.3 1352.6M2296.0 1130.0L2250.4 1168.7M1445.2 1369.0L1413.9 1368.5M2201.9 1030.4L2238.5 993.3M919.7 755.6L893.6 756.2M1904.4 1298.2L1888.2 1324.6M2343.7 1103.9L2329.3 1123.2M2290.0 975.0L2288.6 938.0M1094.5 993.9L1065.4 989.1M1883.6 1882.3L1855.5 1875.3M639.6 471.7L616.7 493.7M744.1 615.7L721.0 608.8M1533.8 1502.9L1505.2 1495.7M1738.6 1740.7L1741.0 1765.3M1616.0 1577.6L1598.5 1600.5M1061.5 1021.1L1087.9 1051.4M2247.2 1077.7L2210.4 1088.4M1907.3 1963.7L1918.8 1941.8M1391.9 1357.0L1389.6 1391.4M1266.6 1194.2L1250.1 1215.4M1741.0 1765.3L1717.0 1755.7M1037.2 883.7L1036.1 899.2M2441.0 1083.0L2464.4 1050.5M1921.6 1238.1L1886.9 1258.4M2384.1 970.5L2362.4 995.1M934.1 760.2L908.6 729.0M1915.1 1325.3L1929.0 1301.4M1404.1 1311.1L1378.1 1280.4M2492.0 1120.0L2517.1 1131.8M1533.7 1570.1L1569.5 1594.9M1825.8 1902.4L1837.3 1890.9M1561.6 1455.5L1588.8 1454.3M1641.8 1397.0L1670.4 1408.7M2514.0 1116.0L2498.0 1110.0M768.3 589.1L773.4 617.4M2124.3 1204.9L2150.0 1240.0M1700.4 1417.4L1730.4 1414.2M2523.0 1131.0L2519.1 1128.9M2247.2 1077.7L2288.5 1081.4M1767.1 1726.6L1738.6 1740.7M1300.1 1188.3L1266.6 1194.2M857.7 666.8L828.1 652.1M616.7 493.7L621.9 518.3M1831.0 1319.7L1848.3 1352.6M1413.9 1368.5L1414.9 1395.3M1245.0 1234.6L1271.0 1265.4M1682.8 1386.9L1700.4 1417.4M1598.5 1600.5L1599.5 1622.0M1065.4 989.1L1070.9 1013.8M2428.4 1021.4L2425.1 996.8M2264.3 1125.6L2252.8 1157.5M2165.2 1097.0L2172.5 1126.3M1803.0 1317.5L1831.0 1319.7M656.9 469.8L639.6 471.7M630.7 544.0L654.8 549.9M2301.2 1010.9L2330.0 1028.6M1939.2 1275.9L1970.9 1281.6M1719.6 1781.6L1742.5 1792.0M2461.4 1097.0L2459.2 1108.8M1847.1 1293.3L1831.0 1319.7M1978.2 1252.6L2006.1 1254.4M2393.5 1087.7L2370.0 1104.0M1496.3 1442.8L1476.0 1436.1M2199.4 1075.9L2211.9 1057.4M2252.2 1001.9L2298.9 1009.7M970.1 830.9L945.4 821.5M2441.0 1083.0L2417.6 1094.4M1152.7 1056.8L1128.2 1050.8M2211.9 1057.4L2175.7 1062.3M706.7 530.9L677.3 550.1M1182.0 1097.4L1157.1 1086.5M809.3 675.3L782.5 671.9M748.0 654.2L776.9 682.2M834.4 709.2L812.2 705.2M1769.3 1800.1L1742.5 1792.0M2201.9 1030.4L2253.9 1044.5M1140.8 1112.0L1193.0 1173.2M1613.4 1660.7L1639.9 1690.9M1801.4 1831.1L1771.7 1823.1M2199.4 1075.9L2210.4 1088.4M1427.9 1448.8L1448.4 1425.7M1915.1 1325.3L1949.9 1305.0M2194.8 1166.1L2204.8 1127.0M2047.3 1179.9L2035.3 1205.6M2082.7 1159.1L2073.0 1182.8M1793.7 1756.8L1768.9 1746.9M1956.3 1217.7L1961.6 1223.6M2201.4 1188.7L2150.0 1228.0M1381.5 1304.6L1387.1 1334.9M2343.7 1103.9L2372.0 1116.0M1445.2 1369.0L1414.9 1395.3M1039.6 927.3L1037.2 952.0M919.7 755.6L892.2 777.7M1404.1 1311.1L1381.5 1304.6M904.5 837.7L930.0 868.8M1005.6 918.2L983.0 914.0M2420.2 1042.4L2423.3 1047.2M1094.5 993.9L1070.9 1013.8M677.3 550.1L688.3 576.7M1883.6 1882.3L1857.1 1900.3M930.0 868.8L955.7 899.8M1772.7 1842.0L1799.3 1872.2M1657.8 1664.5L1654.2 1693.0M1533.8 1502.9L1510.8 1520.4M1799.3 1872.2L1825.8 1902.4M828.1 744.3L834.4 709.2M1711.8 1357.4L1722.9 1365.9M2159.4 1185.4L2194.8 1166.1M2150.0 1218.0L2201.4 1188.7M1613.4 1660.7L1625.2 1629.0M1604.7 1412.4L1565.0 1417.7M2089.2 1224.6L2050.0 1236.7M1666.5 1721.1L1654.2 1693.0M1222.1 1096.2L1207.9 1096.6M686.2 497.3L656.9 469.8M1887.0 1274.5L1912.3 1272.5M1496.3 1442.8L1528.5 1475.0M1921.8 1251.3L1955.6 1253.3M2418.7 1106.6L2492.0 1120.0M2018.6 1230.8L2050.0 1236.7M2252.2 1001.9L2238.5 993.3M1555.2 1504.6L1558.3 1536.3M1820.2 1787.0L1822.5 1810.1M2056.7 1211.1L2089.6 1209.3M2330.0 1028.6L2358.2 1043.6M803.5 607.5L768.3 589.1M1215.7 1128.6L1217.5 1155.2M1886.9 1258.4L1912.3 1272.5M2358.2 1043.6L2362.4 995.1M1586.2 1545.5L1558.3 1536.3M1241.0 1160.5L1217.5 1155.2M892.2 777.7L897.2 813.6M1565.0 1417.7L1561.6 1455.5M857.7 666.8L831.3 683.2M1857.1 1900.3L1863.2 1926.1M1772.7 1842.0L1801.4 1831.1M1799.3 1872.2L1833.7 1869.0M2362.6 959.2L2362.4 995.1M1588.8 1454.3L1577.8 1478.6M1505.2 1495.7L1520.7 1478.7M2320.0 918.0L2358.1 927.8M801.6 622.4L773.4 617.4M2412.5 969.7L2401.4 1005.4M656.9 469.8L640.4 491.6M1746.9 1337.6L1755.4 1363.5M1768.9 1746.9L1738.6 1740.7M2298.9 1009.7L2313.8 981.8M1413.9 1368.5L1391.9 1357.0M832.2 635.6L828.1 652.1M2441.0 1083.0L2459.2 1108.8M1496.3 1442.8L1477.9 1465.5M970.1 830.9L952.3 851.5M1442.7 1400.6L1414.9 1395.3M955.7 899.8L982.1 930.1M1065.4 989.1L1042.2 984.2M1152.7 1056.8L1129.0 1084.8M982.1 930.1L1008.6 960.4M1096.9 1016.5L1070.9 1013.8M1825.8 1902.4L1852.3 1932.7M1182.0 1097.4L1156.6 1118.5M1852.3 1932.7L1878.8 1963.0M2194.8 1166.1L2229.7 1146.1M879.0 806.5L892.2 777.7M2229.7 1146.1L2264.3 1125.6M904.5 837.7L922.8 815.2M630.7 544.0L621.9 518.3M2252.8 1157.5L2296.0 1130.0M601.4 516.5L616.7 493.7M1525.2 1412.3L1488.3 1396.7M1427.9 1448.8L1446.7 1458.2M660.1 571.6L654.8 549.9M1719.6 1781.6L1717.0 1755.7M627.5 442.3L599.6 459.6M1978.2 1252.6L1970.9 1281.6M2290.0 975.0L2300.9 947.4M639.6 471.7L640.4 491.6M2267.5 1032.9L2298.9 1009.7M2393.5 1087.7L2382.9 1061.1M2005.3 1201.2L2035.3 1205.6M2319.0 942.0L2320.0 918.0M666.7 498.7L679.6 526.2M1616.0 1577.6L1621.1 1605.8M1586.2 1545.5L1616.0 1577.6M1793.7 1756.8L1772.4 1773.1M1651.5 1612.8L1652.2 1639.3M1266.6 1194.2L1271.8 1221.4M1301.2 1233.2L1302.6 1258.9M922.8 815.2L929.0 845.2M2201.9 1030.4L2211.9 1057.4M1140.8 1112.0L1167.0 1142.5M1520.7 1478.7L1536.8 1501.3M1775.0 1404.4L1741.7 1391.1M952.3 851.5L950.4 881.7M2252.2 1001.9L2253.9 1044.5M1873.4 1847.4L1846.8 1817.2M1404.1 1311.1L1387.1 1334.9M776.9 682.2L809.3 675.3M1825.8 1902.4L1857.1 1900.3M1061.5 1021.1L1065.4 989.1M1352.1 1249.7L1326.1 1219.0M828.1 744.3L842.8 741.7M2229.7 1146.1L2204.8 1127.0M1326.1 1219.0L1300.1 1188.3M2372.8 1073.7L2370.0 1104.0M2124.3 1204.9L2150.0 1228.0M1528.5 1475.0L1561.6 1455.5M1613.4 1660.7L1625.7 1661.8M2250.4 1168.7L2250.2 1180.7M1670.4 1408.7L1662.5 1433.0M1767.1 1726.6L1768.9 1746.9M1921.6 1238.1L1961.6 1223.6M1222.1 1096.2L1215.7 1128.6M858.7 692.4L831.3 683.2M2288.5 1081.4L2320.3 1065.0M2060.4 1156.7L2047.3 1179.9M1822.5 1810.1L1802.8 1808.9M1765.1 1338.3L1780.6 1365.8M1378.1 1280.4L1381.5 1304.6M1476.0 1436.1L1448.4 1425.7M1128.2 1050.8L1129.0 1084.8M1803.0 1317.5L1818.3 1343.6M803.5 607.5L773.4 617.4M2019.7 1265.2L2018.6 1230.8M1586.2 1545.5L1569.0 1562.6M1157.1 1086.5L1129.0 1084.8M1241.0 1160.5L1216.2 1186.4M2372.8 1073.7L2343.7 1103.9M1676.8 1377.2L1682.8 1386.9M1245.0 1234.6L1271.8 1221.4M1037.2 883.7L1004.5 890.3M955.7 899.8L978.0 888.4M1772.7 1842.0L1805.3 1862.2M1008.6 960.4L1014.6 948.2M1921.8 1251.3L1912.3 1272.5M2418.7 1106.6L2459.2 1108.8M718.7 626.6L721.0 608.8M1195.9 1065.7L1182.8 1063.7M1820.2 1787.0L1792.4 1781.3M1991.0 1197.4L2005.3 1201.2M2056.7 1211.1L2050.0 1236.7M2492.6 1099.0L2498.0 1110.0M706.7 530.9L707.7 554.5M1060.1 933.8L1039.6 927.3M739.0 557.3L741.9 589.9M707.7 554.5L677.3 550.1M2289.4 1053.8L2253.9 1044.5M801.6 622.4L780.1 641.2M1707.5 1678.8L1712.1 1706.9M1679.4 1671.7L1657.8 1664.5M2358.1 927.8L2388.1 936.2M1768.9 1746.9L1741.0 1765.3M1359.0 1300.2L1360.6 1325.6M1193.0 1173.2L1219.0 1203.9M1334.4 1296.4L1304.7 1285.3M1413.9 1368.5L1389.6 1391.4M1010.8 853.4L1000.5 860.2M1219.0 1203.9L1245.0 1234.6M1820.2 1787.0L1793.7 1756.8M1442.7 1400.6L1423.4 1424.0M1793.7 1756.8L1767.1 1726.6M2384.1 970.5L2362.6 959.2M2267.5 1032.9L2252.2 1001.9M2333.4 986.9L2362.4 995.1M2299.2 1105.6L2320.3 1065.0M2362.6 959.2L2333.4 986.9M879.0 806.5L897.2 813.6M803.5 607.5L774.2 580.0M1845.1 1364.9L1806.8 1368.1M1274.1 1157.6L1248.1 1126.9M904.5 837.7L929.0 845.2M601.4 516.5L621.9 518.3M2370.0 1104.0L2372.0 1116.0M919.7 755.6L921.2 789.6M1904.4 1298.2L1929.0 1301.4M2343.7 1103.9L2370.0 1104.0M2417.6 1094.4L2418.7 1106.6M627.5 442.3L611.9 468.5M832.2 635.6L801.6 622.4M946.6 790.2L945.4 821.5M1883.6 1882.3L1891.2 1906.2M1914.8 1911.1L1918.8 1941.8M1533.8 1502.9L1533.5 1528.3M2358.2 1043.6L2393.0 1033.3M2035.3 1205.6L2050.0 1236.7M1558.3 1536.3L1569.0 1562.6M908.6 729.0L891.0 721.1M1887.0 1274.5L1904.4 1298.2M1741.0 1765.3L1742.5 1792.0M1217.5 1155.2L1216.2 1186.4M1665.9 1558.6L1670.1 1518.7M1607.9 1488.5L1645.2 1463.6M1090.1 944.4L1063.7 914.0M776.9 682.2L812.2 705.2M1061.5 1021.1L1070.9 1013.8M2005.3 1201.2L1995.2 1228.3M2319.0 942.0L2300.9 947.4M666.7 498.7L640.4 491.6M2338.4 908.3L2320.0 918.0M1651.5 1612.8L1621.1 1605.8M1118.3 1001.2L1094.5 993.9M1301.2 1233.2L1271.8 1221.4M857.7 666.8L858.7 692.4M773.4 617.4L744.1 615.7M1937.6 1937.2L1914.8 1911.1M858.7 692.4L834.4 709.2M2267.5 1032.9L2253.9 1044.5M1822.5 1810.1L1801.4 1831.1M2264.3 1125.6L2296.0 1130.0M1476.0 1436.1L1446.7 1458.2M599.6 459.6L592.3 486.2M1533.8 1502.9L1536.8 1501.3M2089.2 1224.6L2124.3 1204.9M1852.3 1932.7L1857.1 1900.3M1676.8 1377.2L1641.8 1397.0M2372.8 1073.7L2382.9 1061.1M1528.5 1475.0L1520.7 1478.7M744.8 552.4L715.5 524.9M1245.0 1234.6L1275.6 1252.8M955.7 899.8L983.0 914.0M2464.4 1050.5L2423.3 1047.2M2194.8 1166.1L2157.5 1175.7M1847.1 1293.3L1874.2 1297.2M2150.0 1046.0L2150.0 1036.0M1874.2 1297.2L1904.4 1298.2M2267.5 1032.9L2289.4 1053.8M2025.7 1177.0L2047.3 1179.9M970.1 830.9L974.2 859.5M1195.9 1065.7L1182.0 1097.4M2441.0 1083.0L2461.4 1097.0M1378.1 1280.4L1356.5 1270.3M2498.0 1110.0L2492.0 1120.0M1820.2 1787.0L1802.8 1808.9M974.2 859.5L952.3 851.5M1182.0 1097.4L1186.7 1125.4M1060.1 933.8L1037.2 952.0M1035.0 990.7L1061.5 1021.1M640.4 491.6L649.5 524.0M2301.2 1010.9L2313.8 981.8M748.0 654.2L802.6 713.1M834.4 709.2L842.8 741.7M707.7 554.5L688.3 576.7M1456.8 1371.8L1445.2 1369.0M2113.9 1158.0L2132.0 1182.5M1621.1 1605.8L1625.2 1629.0M1801.4 1831.1L1805.3 1862.2M1679.4 1671.7L1654.2 1693.0M1271.8 1221.4L1275.6 1252.8M2124.3 1204.9L2150.0 1218.0M660.1 571.6L677.3 550.1M2334.9 1087.1L2372.8 1073.7M1010.8 853.4L1004.5 890.3M1430.2 1341.6L1404.1 1311.1M1672.3 1598.2L1616.0 1577.6M1781.9 1317.9L1765.1 1338.3M1799.3 1872.2L1805.3 1862.2M2082.7 1159.1L2113.9 1158.0M1793.7 1756.8L1792.4 1781.3M1651.5 1612.8L1676.4 1641.8M1548.4 1481.5L1536.8 1501.3M739.0 557.3L707.7 554.5M2428.4 1021.4L2464.4 1050.5M2201.4 1188.7L2250.4 1168.7M1707.5 1678.8L1679.4 1671.7M1873.4 1847.4L1883.6 1882.3M2329.3 1123.2L2372.0 1116.0M1733.7 1712.3L1712.1 1706.9M1404.1 1311.1L1413.6 1335.4M1359.0 1300.2L1334.4 1296.4M1645.1 1410.1L1662.5 1433.0M832.2 635.6L802.9 652.0M1880.1 1345.1L1860.2 1322.7M1387.1 1334.9L1360.6 1325.6M1037.2 952.0L1014.6 948.2M1799.3 1872.2L1852.3 1932.7M908.6 729.0L893.6 756.2M1090.1 944.4L1060.1 933.8M1140.8 1112.0L1157.1 1086.5M2150.0 1057.0L2175.7 1062.3M2334.9 1087.1L2320.3 1065.0M853.6 775.4L864.9 744.2M1533.5 1528.3L1536.8 1501.3M2172.5 1126.3L2157.5 1175.7M904.5 837.7L897.2 813.6M1689.0 1634.7L1676.4 1641.8M601.4 516.5L592.3 486.2M1816.9 1298.1L1847.1 1293.3M930.0 868.8L929.0 845.2M1533.8 1502.9L1520.7 1478.7M1711.8 1357.4L1716.5 1390.4M2233.6 1054.6L2247.2 1077.7M946.6 790.2L921.2 789.6M599.6 459.6L611.9 468.5M803.5 607.5L801.6 622.4M1914.8 1911.1L1891.2 1906.2M666.7 498.7L649.5 524.0M1586.2 1545.5L1589.8 1570.9M1558.3 1536.3L1533.5 1528.3M2289.4 1053.8L2288.5 1081.4M1651.5 1612.8L1625.2 1629.0M1708.5 1449.1L1700.4 1417.4M1241.0 1160.5L1246.4 1191.2M1118.3 1001.2L1096.9 1016.5M1589.8 1570.9L1569.0 1562.6M1087.9 1051.4L1114.3 1081.7M1217.5 1155.2L1190.6 1149.4M883.2 697.9L891.0 721.1M1301.2 1233.2L1275.6 1252.8M1740.0 1424.3L1741.7 1391.1M1565.0 1417.7L1604.5 1435.1M2124.3 1204.9L2099.2 1187.8M773.4 617.4L751.8 639.7M1114.3 1081.7L1140.8 1112.0M1246.4 1191.2L1216.2 1186.4M1926.3 1908.0L1899.8 1877.7M1937.6 1937.2L1918.8 1941.8M2290.0 975.0L2313.8 981.8M2130.8 1117.8L2157.5 1175.7M1899.8 1877.7L1873.4 1847.4M1008.6 960.4L1037.2 952.0M2201.9 1030.4L2252.2 1001.9M718.7 626.6L744.1 615.7M2412.1 1065.3L2420.2 1042.4M1035.0 990.7L1065.4 989.1M2299.2 1105.6L2329.3 1123.2M776.9 682.2L782.5 671.9M2252.2 1001.9L2290.0 975.0M2468.6 1087.1L2492.6 1099.0M748.0 654.2L780.1 641.2M1378.1 1280.4L1352.1 1249.7M1588.8 1454.3L1623.4 1459.5M802.6 713.1L812.2 705.2M1852.3 1932.7L1863.2 1926.1M2492.6 1099.0L2514.0 1116.0M1087.9 1051.4L1070.9 1013.8M801.6 622.4L802.9 652.0M686.2 497.3L666.7 498.7M2150.0 1228.0L2150.0 1240.0M1636.1 1435.9L1623.4 1459.5M2289.4 1053.8L2247.2 1077.7M828.1 652.1L831.3 683.2M1768.9 1746.9L1772.4 1773.1M2204.8 1127.0L2210.4 1088.4M2186.5 1097.3L2175.7 1062.3M1792.4 1781.3L1802.8 1808.9M1442.7 1400.6L1448.4 1425.7M1378.1 1280.4L1359.0 1300.2M1722.9 1365.9L1741.7 1391.1M1949.9 1305.0L1939.2 1275.9M1096.9 1016.5L1104.0 1045.9M974.2 859.5L950.4 881.7M1740.5 1696.3L1714.0 1666.1M2299.2 1105.6L2296.0 1130.0M1985.1 1285.7L1978.2 1252.6M2334.9 1087.1L2343.7 1103.9M2301.2 1010.9L2267.5 1032.9M1456.8 1371.8L1442.7 1400.6M2441.0 1083.0L2423.3 1047.2M1193.0 1173.2L1217.5 1155.2M1222.1 1096.2L1195.9 1065.7M2412.1 1065.3L2382.9 1061.1M1245.0 1234.6L1250.1 1215.4M660.1 571.6L688.3 576.7M955.7 899.8L950.4 881.7M627.5 442.3L639.6 471.7M1874.2 1297.2L1860.2 1322.7M982.1 930.1L983.0 914.0M2025.7 1177.0L2005.3 1201.2M1912.3 1272.5L1904.4 1298.2M1000.5 860.2L974.2 859.5M2348.0 876.0L2358.1 927.8M715.5 524.9L739.0 557.3M640.4 491.6L616.7 493.7M739.0 557.3L713.2 584.7M2247.2 1077.7L2248.7 1114.3M1961.6 1223.6L1978.2 1252.6M1274.1 1157.6L1241.0 1160.5M2464.4 1050.5L2450.0 1008.6M679.6 526.2L649.5 524.0M1621.1 1605.8L1598.5 1600.5M1707.5 1678.8L1682.9 1696.7M1430.2 1341.6L1445.2 1369.0M1652.2 1639.3L1625.2 1629.0M1271.8 1221.4L1250.1 1215.4M1733.7 1712.3L1717.0 1731.7M1359.0 1300.2L1330.9 1321.5M1167.0 1142.5L1193.0 1173.2M1302.6 1258.9L1275.6 1252.8M2159.4 1185.4L2150.0 1218.0M1387.1 1334.9L1365.1 1351.5M1846.8 1817.2L1820.2 1787.0M2229.7 1146.1L2248.7 1114.3M1090.1 944.4L1068.9 957.9M2514.0 1116.0L2523.0 1131.0M1140.8 1112.0L1156.6 1118.5M1670.4 1408.7L1700.4 1417.4M853.6 775.4L865.5 773.6M1716.5 1390.4L1741.7 1391.1M1248.1 1126.9L1235.1 1130.0M858.7 692.4L866.1 715.0M1689.0 1634.7L1679.4 1671.7M1873.4 1847.4L1856.2 1848.5M2060.4 1156.7L2082.7 1159.1M2329.3 1123.2L2329.9 1135.2M891.0 721.1L893.6 756.2M1822.5 1810.1L1828.8 1839.1M866.1 715.0L834.4 709.2M946.6 790.2L922.8 815.2M1856.2 1848.5L1855.5 1875.3M1476.0 1436.1L1477.9 1465.5M1828.8 1839.1L1801.4 1831.1M1528.5 1475.0L1548.4 1481.5M1914.8 1911.1L1888.7 1937.3M1921.6 1238.1L1955.6 1253.3M1501.6 1472.0L1505.2 1495.7M1488.3 1396.7L1472.8 1409.4M1323.0 1326.8L1349.0 1357.5M1477.9 1465.5L1446.7 1458.2M1558.3 1536.3L1541.5 1555.4M1157.1 1086.5L1156.6 1118.5M1349.0 1357.5L1375.1 1388.0M1689.0 1634.7L1672.3 1598.2M2372.8 1073.7L2393.5 1087.7M1589.8 1570.9L1569.5 1594.9M1672.3 1598.2L1665.9 1558.6M2412.1 1065.3L2441.0 1083.0M1063.7 914.0L1036.1 899.2M1816.9 1298.1L1803.0 1317.5M1169.4 1035.3L1143.0 1005.0M1008.6 960.4L1042.2 984.2M2019.7 1265.2L2006.1 1254.4M2229.7 1146.1L2250.4 1168.7M1672.3 1598.2L1676.4 1641.8M1143.0 1005.0L1116.5 974.7M718.7 626.6L751.8 639.7M1670.1 1518.7L1607.9 1488.5M2300.9 947.4L2288.6 938.0M1195.9 1065.7L1207.9 1096.6M1323.0 1326.8L1330.9 1321.5M748.0 654.2L782.5 671.9M1955.6 1253.3L1939.2 1275.9M1676.8 1377.2L1670.4 1408.7M1060.1 933.8L1068.9 957.9M1995.2 1228.3L1978.2 1252.6M2089.2 1224.6L2150.0 1240.0M707.7 554.5L713.2 584.7M686.2 497.3L679.6 526.2M883.2 697.9L858.7 692.4M1679.4 1671.7L1682.9 1696.7M2047.3 1179.9L2056.7 1211.1M1712.1 1706.9L1717.0 1731.7M1991.0 1197.4L1995.2 1228.3M1334.4 1296.4L1330.9 1321.5M2082.7 1159.1L2099.2 1187.8M2172.5 1126.3L2204.8 1127.0M2319.0 942.0L2313.8 981.8M1360.6 1325.6L1365.1 1351.5M2194.8 1166.1L2201.4 1188.7M1525.2 1412.3L1561.6 1455.5M2229.7 1146.1L2252.8 1157.5M2334.9 1087.1L2329.3 1123.2M985.1 822.4L959.6 791.3M1845.1 1364.9L1848.3 1352.6M1193.0 1173.2L1216.2 1186.4M2159.4 1185.4L2157.5 1175.7M828.1 652.1L802.9 652.0M1555.2 1504.6L1569.5 1509.0M1623.4 1459.5L1645.2 1463.6M2333.4 986.9L2330.0 1028.6M1794.0 1342.6L1818.3 1343.6M1792.4 1781.3L1772.4 1773.1M1265.4 1168.6L1241.0 1160.5M2420.2 1042.4L2428.4 1021.4M1586.2 1545.5L1569.5 1509.0M921.2 789.6L892.2 777.7M1000.5 860.2L978.0 888.4M2412.5 969.7L2450.0 1008.6M908.6 729.0L919.7 755.6M1891.2 1906.2L1857.1 1900.3M640.4 491.6L621.9 518.3M1375.1 1388.0L1401.5 1418.4M1533.5 1528.3L1510.8 1520.4M679.6 526.2L654.8 549.9M1621.1 1605.8L1599.5 1622.0M1401.5 1418.4L1427.9 1448.8M1652.2 1639.3L1625.7 1661.8M930.0 868.8L952.3 851.5M1670.1 1518.7L1684.6 1481.3M2130.8 1117.8L2095.1 1136.3M1708.5 1449.1L1730.4 1414.2M2300.9 947.4L2320.0 918.0M715.5 524.9L706.7 530.9M2073.0 1182.8L2099.2 1187.8M1118.3 1001.2L1123.9 1024.2M1151.7 1035.3L1152.7 1056.8M773.4 617.4L780.1 641.2M1248.1 1126.9L1241.0 1160.5M1430.2 1341.6L1413.6 1335.4M1873.4 1847.4L1855.5 1875.3M1561.6 1455.5L1577.8 1478.6M802.9 652.0L809.3 675.3M689.4 599.1L718.7 626.6M1810.1 1384.6L1780.6 1365.8M2401.4 1005.4L2362.4 995.1M2330.0 1028.6L2320.3 1065.0M866.1 715.0L842.8 741.7M2412.1 1065.3L2423.3 1047.2M2348.0 876.0L2388.1 936.2M1772.4 1773.1L1769.3 1800.1M1560.2 1600.3L1586.8 1630.5M1828.8 1839.1L1805.3 1862.2M1414.9 1395.3L1423.4 1424.0M1845.1 1364.9L1880.1 1345.1M802.6 713.1L834.4 709.2M1087.9 1051.4L1096.9 1016.5M1140.8 1112.0L1129.0 1084.8M1114.3 1081.7L1128.2 1050.8M2412.1 1065.3L2417.6 1094.4M853.6 775.4L842.8 741.7M1852.0 1278.3L1847.1 1293.3M1716.5 1390.4L1700.4 1417.4M1063.7 914.0L1039.6 927.3M908.6 729.0L883.2 697.9M2150.0 1057.0L2150.0 1046.0M1755.4 1363.5L1741.7 1391.1M891.0 721.1L866.1 715.0M1558.3 1536.3L1569.5 1509.0M1856.2 1848.5L1828.8 1839.1M1846.8 1817.2L1822.5 1810.1M1323.7 1234.7L1301.2 1233.2M974.2 859.5L978.0 888.4M2384.1 970.5L2412.5 969.7M1501.6 1472.0L1477.9 1465.5M1555.2 1504.6L1548.4 1481.5M2296.0 1130.0L2250.2 1180.7M1456.8 1371.8L1472.8 1409.4M883.2 697.9L866.1 715.0M1186.7 1125.4L1156.6 1118.5M2025.7 1177.0L2035.3 1205.6M2412.1 1065.3L2393.5 1087.7M1625.2 1629.0L1625.7 1661.8M2089.2 1224.6L2056.7 1211.1M2514.0 1116.0L2464.4 1050.5M1937.6 1937.2L1926.3 1908.0M982.1 930.1L1005.6 918.2M1672.3 1598.2L1651.5 1612.8M1781.9 1317.9L1803.0 1317.5M1035.0 990.7L1042.2 984.2M748.0 654.2L751.8 639.7M2441.0 1083.0L2468.6 1087.1M1349.0 1357.5L1330.9 1321.5M1548.4 1481.5L1577.8 1478.6M2130.8 1117.8L2172.5 1126.3M1274.1 1157.6L1265.4 1168.6M2329.9 1135.2L2372.0 1116.0M828.1 652.1L809.3 675.3M1528.5 1475.0L1501.6 1472.0M1733.7 1712.3L1738.6 1740.7M1712.1 1706.9L1682.9 1696.7M1792.4 1781.3L1769.3 1800.1M1387.1 1334.9L1391.9 1357.0M1265.4 1168.6L1246.4 1191.2M2514.0 1116.0L2492.0 1120.0M1360.6 1325.6L1330.9 1321.5M1037.2 952.0L1042.2 984.2M921.2 789.6L897.2 813.6M2229.7 1146.1L2201.4 1188.7M1915.1 1325.3L1904.4 1298.2M1891.2 1906.2L1863.2 1926.1M1767.1 1726.6L1740.5 1696.3M1090.1 944.4L1091.5 965.3M1641.8 1397.0L1645.1 1410.1M2348.0 876.0L2348.0 848.7M2333.4 986.9L2301.2 1010.9M2420.2 1042.4L2393.0 1033.3M1454.3 1479.2L1477.9 1465.5M1880.1 1345.1L1848.3 1352.6M1193.0 1173.2L1190.6 1149.4M1167.0 1142.5L1186.7 1125.4M1248.1 1126.9L1222.1 1096.2M2402.7 1006.2L2425.1 996.8M930.0 868.8L950.4 881.7M1623.4 1459.5L1607.9 1488.5M1219.0 1203.9L1216.2 1186.4M1794.0 1342.6L1780.6 1365.8M857.7 666.8L832.2 635.6M1831.0 1319.7L1818.3 1343.6M2402.7 1006.2L2428.4 1021.4M715.5 524.9L707.7 554.5M1816.9 1298.1L1831.0 1319.7M1589.8 1570.9L1598.5 1600.5M1921.8 1251.3L1939.2 1275.9M1246.4 1191.2L1250.1 1215.4M2150.0 1046.0L2175.7 1062.3M1430.2 1341.6L1413.9 1368.5M985.1 822.4L970.1 830.9M1708.5 1449.1L1686.8 1440.9M1740.0 1424.3L1730.4 1414.2M1565.0 1417.7L1588.8 1454.3M1087.9 1051.4L1104.0 1045.9M2124.3 1204.9L2089.6 1209.3M1375.1 1388.0L1365.1 1351.5M1693.0 1751.3L1685.8 1723.0M2073.0 1182.8L2056.7 1211.1M1114.3 1081.7L1129.0 1084.8M1401.5 1418.4L1389.6 1391.4M686.2 497.3L706.7 530.9M1636.1 1435.9L1662.5 1433.0M1151.7 1035.3L1123.9 1024.2M1182.8 1063.7L1152.7 1056.8M802.9 652.0L780.1 641.2M891.0 721.1L864.9 744.2M1588.8 1454.3L1607.9 1488.5M831.3 683.2L809.3 675.3M1772.4 1773.1L1741.0 1765.3M1856.2 1848.5L1833.7 1869.0M1846.8 1817.2L1828.8 1839.1M1323.7 1234.7L1302.6 1258.9M1802.8 1808.9L1769.3 1800.1M1271.0 1265.4L1297.0 1296.1M1414.9 1395.3L1389.6 1391.4M1501.6 1472.0L1483.6 1494.2M1297.0 1296.1L1323.0 1326.8M1448.4 1425.7L1423.4 1424.0M2468.6 1087.1L2464.4 1050.5M1714.0 1666.1L1689.0 1634.7M2339.7 819.8L2325.0 790.0M1507.1 1539.8L1533.5 1528.3M1949.9 1305.0L1929.0 1301.4M1560.2 1600.3L1569.5 1594.9M1195.9 1065.7L1169.4 1035.3M982.1 930.1L1014.6 948.2M1604.5 1435.1L1588.8 1454.3M1271.0 1265.4L1275.6 1252.8M2238.5 993.3L2229.9 984.1M1912.3 1272.5L1939.2 1275.9M1741.7 1391.1L1730.4 1414.2M1000.5 860.2L1004.5 890.3M2519.1 1128.9L2517.1 1131.8M1036.1 899.2L1039.6 927.3M2201.9 1030.4L2150.0 1036.0M679.6 526.2L677.3 550.1M572.1 489.0L601.4 516.5M2186.5 1097.3L2210.4 1088.4M1652.2 1639.3L1657.8 1664.5M1454.3 1479.2L1480.6 1509.5M2005.3 1201.2L2018.6 1230.8M1625.2 1629.0L1599.5 1622.0M2401.4 1005.4L2393.0 1033.3M1712.1 1706.9L1685.8 1723.0M1302.6 1258.9L1304.7 1285.3M2159.4 1185.4L2201.4 1188.7M1480.6 1509.5L1507.1 1539.8M1708.5 1449.1L1740.0 1424.3M1740.0 1424.3L1775.0 1404.4M2060.4 1156.7L2025.7 1177.0M2264.3 1125.6L2288.5 1081.4M2025.7 1177.0L1991.0 1197.4M1037.2 883.7L1010.8 853.4M1775.0 1404.4L1766.4 1390.4M1116.5 974.7L1091.5 965.3M1740.5 1696.3L1707.5 1678.8M1010.8 853.4L985.1 822.4M1886.9 1258.4L1887.0 1274.5M1810.1 1384.6L1806.8 1368.1M1454.3 1479.2L1483.6 1494.2M1167.0 1142.5L1190.6 1149.4M1577.8 1478.6L1607.9 1488.5M1207.9 1096.6L1182.0 1097.4M1352.1 1249.7L1323.7 1234.7M866.1 715.0L864.9 744.2M1235.1 1130.0L1215.7 1128.6M1828.8 1839.1L1833.7 1869.0M2211.9 1057.4L2210.4 1088.4M1670.4 1408.7L1686.8 1440.9M1488.3 1396.7L1496.3 1442.8M893.6 756.2L864.9 744.2M1477.9 1465.5L1483.6 1494.2M1716.5 1390.4L1730.4 1414.2M1855.5 1875.3L1833.7 1869.0M2060.4 1156.7L2073.0 1182.8M611.9 468.5L592.3 486.2M1505.2 1495.7L1483.6 1494.2M1604.7 1412.4L1645.1 1410.1M2362.6 959.2L2319.0 942.0M1063.7 914.0L1060.1 933.8M2402.7 1006.2L2393.0 1033.3M985.1 822.4L974.2 859.5M2019.7 1265.2L2050.0 1236.7M1670.1 1518.7L1645.2 1463.6M1684.6 1481.3L1686.8 1440.9M1955.6 1253.3L1978.2 1252.6M1682.8 1386.9L1670.4 1408.7M1995.2 1228.3L2018.6 1230.8M1818.3 1343.6L1806.8 1368.1M2428.4 1021.4L2423.3 1047.2M1413.6 1335.4L1387.1 1334.9M1091.5 965.3L1094.5 993.9M1068.9 957.9L1037.2 952.0M1151.7 1035.3L1128.2 1050.8M741.9 589.9L744.1 615.7M630.7 544.0L660.1 571.6M713.2 584.7L688.3 576.7M1182.8 1063.7L1157.1 1086.5M802.9 652.0L782.5 671.9M660.1 571.6L689.4 599.1M1507.1 1539.8L1533.7 1570.1M1682.9 1696.7L1654.2 1693.0M831.3 683.2L812.2 705.2M1772.4 1773.1L1742.5 1792.0M1533.7 1570.1L1560.2 1600.3M959.6 791.3L946.6 790.2M1775.0 1404.4L1810.1 1384.6M1717.0 1731.7L1685.8 1723.0M1802.8 1808.9L1771.7 1823.1M1349.0 1357.5L1360.6 1325.6M1810.1 1384.6L1845.1 1364.9M1991.0 1197.4L1956.3 1217.7M1569.5 1509.0L1607.9 1488.5M1956.3 1217.7L1921.6 1238.1M1114.3 1081.7L1104.0 1045.9M959.6 791.3L934.1 760.2M1961.6 1223.6L1955.6 1253.3M2459.2 1108.8L2492.0 1120.0M1507.1 1539.8L1541.5 1555.4M2099.2 1187.8L2089.6 1209.3M1265.4 1168.6L1266.6 1194.2M2199.4 1075.9L2186.5 1097.3M774.2 580.0L768.3 589.1M1586.2 1545.5L1607.9 1488.5M1662.5 1433.0L1686.8 1440.9M1292.0 1203.4L1301.2 1233.2M2319.0 942.0L2358.1 927.8M921.2 789.6L922.8 815.2M945.4 821.5L952.3 851.5M1891.2 1906.2L1888.7 1937.3M828.1 744.3L853.6 775.4M2333.4 986.9L2313.8 981.8M1533.5 1528.3L1541.5 1555.4M1693.0 1751.3L1719.6 1781.6M1794.0 1342.6L1806.8 1368.1M2130.8 1117.8L2150.0 1057.0M1569.0 1562.6L1569.5 1594.9M2019.7 1265.2L2054.4 1244.8M2492.6 1099.0L2464.4 1050.5M1219.0 1203.9L1246.4 1191.2M1746.9 1337.6L1711.8 1357.4M1711.8 1357.4L1676.8 1377.2M1586.8 1630.5L1569.5 1594.9M774.2 580.0L744.8 552.4M1765.1 1338.3L1794.0 1342.6M1116.5 974.7L1094.5 993.9M1036.1 899.2L1004.5 890.3M1740.5 1696.3L1712.1 1706.9M1472.8 1409.4L1442.7 1400.6M2288.5 1081.4L2248.7 1114.3M1899.8 1877.7L1883.6 1882.3M1123.9 1024.2L1096.9 1016.5M1207.9 1096.6L1186.7 1125.4M2492.6 1099.0L2492.0 1120.0M1352.1 1249.7L1326.8 1266.7M780.1 641.2L751.8 639.7M1235.1 1130.0L1217.5 1155.2M2073.0 1182.8L2089.6 1209.3M2412.5 969.7L2425.1 996.8M718.7 626.6L748.0 654.2M893.6 756.2L865.5 773.6M1525.2 1412.3L1496.3 1442.8M2299.2 1105.6L2288.5 1081.4M1375.1 1388.0L1391.9 1357.0M1693.0 1751.3L1717.0 1731.7M1855.5 1875.3L1837.3 1890.9M1401.5 1418.4L1414.9 1395.3M2338.4 908.3L2348.0 876.0M1810.1 1384.6L1766.4 1390.4M1454.3 1479.2L1446.7 1458.2M1300.1 1188.3L1274.1 1157.6M1645.2 1463.6L1686.8 1440.9M1852.0 1278.3L1887.0 1274.5M1167.0 1142.5L1156.6 1118.5M1480.6 1509.5L1483.6 1494.2M2229.9 984.1L2288.6 938.0M1755.4 1363.5L1780.6 1365.8M1577.8 1478.6L1569.5 1509.0M2204.8 1127.0L2248.7 1114.3M1501.6 1472.0L1520.7 1478.7M1846.8 1817.2L1856.2 1848.5M1326.1 1219.0L1323.7 1234.7M2150.0 1218.0L2150.0 1228.0M1323.7 1234.7L1326.8 1266.7M1676.4 1641.8L1652.2 1639.3M1356.5 1270.3L1359.0 1300.2M1326.8 1266.7L1302.6 1258.9M2296.0 1130.0L2329.9 1135.2M1413.6 1335.4L1391.9 1357.0M1847.1 1293.3L1860.2 1322.7M1004.5 890.3L1005.6 918.2M879.0 806.5L904.5 837.7M978.0 888.4L950.4 881.7M1186.7 1125.4L1190.6 1149.4M1068.9 957.9L1042.2 984.2M2372.8 1073.7L2358.2 1043.6M649.5 524.0L654.8 549.9M1604.7 1412.4L1604.5 1435.1M1746.2 1811.8L1772.7 1842.0M2330.0 1028.6L2362.4 995.1M2333.4 986.9L2319.0 942.0M2165.2 1097.0L2130.8 1117.8M1271.0 1265.4L1302.6 1258.9M1878.8 1963.0L1888.7 1937.3M959.6 791.3L945.4 821.5M1297.0 1296.1L1334.4 1296.4M1116.5 974.7L1090.1 944.4M1143.0 1005.0L1118.3 1001.2M1684.6 1481.3L1645.2 1463.6M1641.8 1397.0L1604.7 1412.4M1349.0 1357.5L1365.1 1351.5M1639.9 1690.9L1625.7 1661.8M715.5 524.9L686.2 497.3M2035.3 1205.6L2018.6 1230.8M1472.8 1409.4L1496.3 1442.8M1091.5 965.3L1068.9 957.9M1781.9 1317.9L1794.0 1342.6M2290.0 975.0L2229.9 984.1M2186.5 1097.3L2204.8 1127.0M741.9 589.9L713.2 584.7M2300.9 947.4L2313.8 981.8M2514.0 1116.0L2517.1 1131.8M2384.1 970.5L2401.4 1005.4M2428.4 1021.4L2450.0 1008.6M1738.6 1740.7L1717.0 1731.7M864.9 744.2L865.5 773.6M2132.0 1182.5L2150.0 1218.0M1391.9 1357.0L1365.1 1351.5M934.1 760.2L946.6 790.2M1833.7 1869.0L1837.3 1890.9M1746.2 1811.8L1769.3 1800.1M689.4 599.1L713.2 584.7M1880.1 1345.1L1888.2 1324.6M2348.0 848.7L2339.7 819.8M1219.0 1203.9L1250.1 1215.4M1507.1 1539.8L1510.8 1520.4M1169.4 1035.3L1182.8 1063.7M1915.1 1325.3L1888.2 1324.6M1533.7 1570.1L1541.5 1555.4M1831.0 1319.7L1860.2 1322.7M774.2 580.0L739.0 557.3M1561.6 1455.5L1548.4 1481.5M1662.5 1433.0L1645.2 1463.6M1292.0 1203.4L1266.6 1194.2M2450.0 1008.6L2425.1 996.8M2165.2 1097.0L2186.5 1097.3M768.3 589.1L741.9 589.9M1700.4 1417.4L1686.8 1440.9M2338.4 908.3L2358.1 927.8M945.4 821.5L922.8 815.2M744.8 552.4L739.0 557.3M2194.8 1166.1L2172.5 1126.3M1036.1 899.2L1005.6 918.2M611.9 468.5L616.7 493.7M1918.8 1941.8L1888.7 1937.3M2393.5 1087.7L2418.7 1106.6M1472.8 1409.4L1448.4 1425.7M616.7 493.7L592.3 486.2M2199.4 1075.9L2175.7 1062.3M1569.0 1562.6L1541.5 1555.4M985.1 822.4L1000.5 860.2M1899.8 1877.7L1891.2 1906.2M1123.9 1024.2L1104.0 1045.9M1427.9 1448.8L1454.3 1479.2M1598.5 1600.5L1569.5 1594.9M2428.4 1021.4L2393.0 1033.3M1684.6 1481.3L1708.5 1449.1M2095.1 1136.3L2060.4 1156.7M1765.1 1338.3L1755.4 1363.5M2124.3 1204.9L2132.0 1182.5M1375.1 1388.0L1389.6 1391.4M1693.0 1751.3L1717.0 1755.7M1063.7 914.0L1037.2 883.7M1803.0 1317.5L1794.0 1342.6M2250.2 1180.7L2329.9 1135.2M1401.5 1418.4L1423.4 1424.0M2301.2 1010.9L2298.9 1009.7M1939.2 1275.9L1929.0 1301.4M2113.9 1158.0L2099.2 1187.8M1714.0 1666.1L1679.4 1671.7M1182.8 1063.7L1182.0 1097.4M2095.1 1136.3L2082.7 1159.1M2492.6 1099.0L2459.2 1108.8M831.3 683.2L834.4 709.2M1802.8 1808.9L1801.4 1831.1M1676.4 1641.8L1657.8 1664.5M1586.8 1630.5L1613.4 1660.7M1636.1 1435.9L1645.2 1463.6M2289.4 1053.8L2320.3 1065.0M2201.4 1188.7L2250.2 1180.7M1448.4 1425.7L1446.7 1458.2M1326.8 1266.7L1304.7 1285.3M1880.1 1345.1L1915.1 1325.3M1886.9 1258.4L1852.0 1278.3M2113.9 1158.0L2157.5 1175.7M1888.7 1937.3L1894.0 1961.1M1852.0 1278.3L1816.9 1298.1M1949.9 1305.0L1970.9 1281.6M883.2 697.9L857.7 666.8M1985.1 1285.7L2006.1 1254.4M1604.5 1435.1L1636.1 1435.9M1271.0 1265.4L1304.7 1285.3M2132.0 1182.5L2157.5 1175.7M1878.8 1963.0L1894.0 1961.1M1645.1 1410.1L1670.4 1408.7M1741.7 1391.1L1766.4 1390.4M1297.0 1296.1L1330.9 1321.5M1143.0 1005.0L1123.9 1024.2M1326.1 1219.0L1292.0 1203.4M1780.6 1365.8L1806.8 1368.1M2358.2 1043.6L2320.3 1065.0M1356.5 1270.3L1326.8 1266.7M2362.6 959.2L2358.1 927.8M1300.1 1188.3L1292.0 1203.4M2201.9 1030.4L2229.9 984.1M1381.5 1304.6L1359.0 1300.2M1926.3 1908.0L1914.8 1911.1M1004.5 890.3L978.0 888.4M1091.5 965.3L1065.4 989.1M2233.6 1054.6L2253.9 1044.5M1874.2 1297.2L1888.2 1324.6M1039.6 927.3L1005.6 918.2M649.5 524.0L621.9 518.3M1912.3 1272.5L1929.0 1301.4M741.9 589.9L721.0 608.8M2401.4 1005.4L2425.1 996.8M601.4 516.5L630.7 544.0M677.3 550.1L654.8 549.9M2384.1 970.5L2388.1 936.2M1657.8 1664.5L1625.7 1661.8M1586.8 1630.5L1598.5 1600.5M1738.6 1740.7L1717.0 1755.7M1711.8 1357.4L1682.8 1386.9M2130.8 1117.8L2113.9 1158.0M1116.5 974.7L1118.3 1001.2M1740.5 1696.3L1733.7 1712.3M1886.9 1258.4L1921.8 1251.3M1746.2 1811.8L1771.7 1823.1M689.4 599.1L721.0 608.8M1887.0 1274.5L1874.2 1297.2M2372.0 1116.0L2418.7 1106.6M2018.6 1230.8L2006.1 1254.4M1207.9 1096.6L1215.7 1128.6M2468.6 1087.1L2461.4 1097.0M1352.1 1249.7L1356.5 1270.3M2290.0 975.0L2298.9 1009.7M1235.1 1130.0L1241.0 1160.5M774.2 580.0L741.9 589.9M1215.7 1128.6L1186.7 1125.4M1292.0 1203.4L1271.8 1221.4M2523.0 1131.0L2517.1 1131.8M893.6 756.2L892.2 777.7M768.3 589.1L744.1 615.7M2412.5 969.7L2388.1 936.2M776.9 682.2L802.6 713.1" stroke="#8a8a8a" stroke-width="2" fill="none"/><polyline points="2150.0,1057.0 2156.3,1053.7 2164.8,1049.4 2175.0,1044.2 2186.2,1038.5 2197.9,1032.4 2209.5,1026.3 2220.4,1020.4 2230.0,1015.0 2238.6,1010.0 2246.9,1005.1 2254.8,1000.3 2262.5,995.5 2269.8,990.6 2276.9,985.7 2283.6,980.5 2290.0,975.0 2296.1,969.2 2301.9,963.2 2307.4,956.9 2312.6,950.6 2317.5,944.1 2322.0,937.7 2326.2,931.3 2330.0,925.0 2333.4,918.8 2336.5,912.5 2339.3,906.2 2341.7,899.9 2343.8,893.7 2345.5,887.7 2346.9,881.7 2348.0,876.0 2348.7,870.5 2349.1,865.3 2349.2,860.2 2348.9,855.2 2348.3,850.3 2347.4,845.3 2346.3,840.3 2345.0,835.0 2343.3,829.5 2341.2,823.7 2338.8,817.8 2336.2,811.9 2333.4,806.0 2330.5,800.4 2327.7,795.0 2325.0,790.0 2322.2,785.2 2319.1,780.5 2315.9,776.0 2312.8,771.7 2309.7,767.7 2307.0,764.2 2304.7,761.3 2303.0,759.0" fill="none" stroke="#8a8a8a" stroke-width="2.2"/><polyline points="2150.0,1046.0 2160.6,1039.6 2175.5,1030.9 2193.2,1020.5 2212.5,1009.0 2232.1,997.2 2250.8,985.6 2267.2,975.0 2280.0,966.0 2289.5,958.4 2296.9,951.6 2302.6,945.4 2307.1,939.6 2310.6,934.2 2313.7,928.8 2316.7,923.5 2320.0,918.0 2323.4,912.5 2326.4,907.4 2329.0,902.3 2331.3,897.4 2333.2,892.4 2334.8,887.2 2336.1,881.8 2337.0,876.0 2337.6,869.9 2337.9,863.6 2337.8,857.0 2337.4,850.3 2336.6,843.4 2335.5,836.4 2333.9,829.3 2332.0,822.0 2329.3,814.1 2325.8,805.4 2321.6,796.3 2317.2,787.1 2312.8,778.4 2308.8,770.5 2305.4,763.9 2303.0,759.0" fill="none" stroke="#8a8a8a" stroke-width="2.2"/><polyline points="2150.0,1218.0 2156.3,1214.4 2164.7,1209.6 2174.8,1203.9 2185.9,1197.6 2197.5,1191.0 2209.1,1184.3 2220.1,1177.9 2230.0,1172.0 2238.9,1166.5 2247.3,1161.1 2255.5,1155.7 2263.5,1150.4 2271.4,1145.1 2279.4,1140.0 2287.6,1134.9 2296.0,1130.0 2304.7,1125.0 2313.6,1120.0 2322.5,1115.0 2331.6,1110.1 2340.7,1105.4 2349.8,1101.1 2358.9,1097.3 2368.0,1094.0 2377.3,1091.3 2387.0,1089.0 2396.8,1087.2 2406.6,1085.7 2416.1,1084.6 2425.1,1083.8 2433.5,1083.2 2441.0,1083.0 2447.5,1083.1 2453.3,1083.5 2458.3,1084.3 2462.9,1085.3 2467.2,1086.6 2471.4,1088.2 2475.6,1090.0 2480.0,1092.0 2484.6,1094.3 2489.4,1097.0 2494.1,1100.1 2498.8,1103.3 2503.2,1106.6 2507.2,1109.9 2510.9,1113.1 2514.0,1116.0 2516.6,1118.8 2518.6,1121.8 2520.3,1124.7 2521.6,1127.5 2522.7,1130.1 2523.6,1132.5 2524.3,1134.5 2525.0,1136.0" fill="none" stroke="#8a8a8a" stroke-width="2.2"/><polyline points="2150.0,1228.0 2162.1,1220.9 2178.8,1211.0 2198.8,1199.2 2220.6,1186.2 2243.0,1173.1 2264.6,1160.4 2284.1,1149.1 2300.0,1140.0 2312.6,1132.8 2323.1,1126.7 2332.1,1121.5 2340.0,1117.1 2347.3,1113.3 2354.4,1110.0 2361.8,1106.9 2370.0,1104.0 2378.8,1101.3 2387.8,1099.1 2396.8,1097.2 2405.8,1095.8 2414.6,1094.7 2423.3,1094.1 2431.8,1093.8 2440.0,1094.0 2448.0,1094.7 2456.1,1095.9 2464.0,1097.7 2471.7,1099.8 2479.0,1102.1 2486.0,1104.7 2492.3,1107.3 2498.0,1110.0 2503.0,1112.9 2507.6,1116.4 2511.6,1120.2 2515.1,1124.0 2518.2,1127.7 2520.9,1131.1 2523.1,1133.9 2525.0,1136.0" fill="none" stroke="#8a8a8a" stroke-width="2.2"/><polyline points="760.0,595.0 806.0,651.0 982.0,866.0 1186.0,1100.0 1300.0,1236.0 1395.8,1348.0 1436.8,1391.5 1482.4,1423.4 1528.0,1441.7 1591.8,1448.5 1646.6,1441.7 1696.7,1423.4 1756.0,1387.0 1903.0,1300.0 2450.0,979.0 2461.0,972.0" fill="none" stroke="#000" stroke-width="2"/><polyline points="783.0,595.0 824.0,651.0 1000.0,860.0 1204.0,1100.0 1594.0,1560.0 1861.0,1864.0" fill="none" stroke="#0000ff" stroke-width="2"/><polyline points="792.0,595.0 834.0,651.0 1009.4,860.0 1213.0,1100.0 1603.0,1560.0 1868.0,1864.0" fill="none" stroke="#ff0000" stroke-width="2"/><polyline points="805.0,595.0 1022.0,860.0 1226.0,1100.0 1550.0,1484.0" fill="none" stroke="#00ff00" stroke-width="2"/><polyline points="1522.0,1506.0 1839.0,1864.0" fill="none" stroke="#000" stroke-width="2"/><polyline points="1532.0,1499.7 1852.0,1864.0" fill="none" stroke="#000" stroke-width="2"/><polyline points="1558.8,1486.4 1884.7,1864.0" fill="none" stroke="#000" stroke-width="2"/><polyline points="1568.7,1479.7 1898.7,1864.0" fill="none" stroke="#000" stroke-width="2"/><polyline points="1635.0,1486.4 1650.0,1550.0 1665.0,1612.7 1685.0,1669.0 1750.0,1745.7 1852.0,1864.0" fill="none" stroke="#000" stroke-width="2"/><polyline points="1622.0,1487.0 1650.0,1485.0" fill="none" stroke="#000" stroke-width="2"/><polyline points="1550.0,1490.0 2242.0,1091.7 2169.4,975.8 2074.0,702.0 2293.0,313.0 2462.0,241.0" fill="none" stroke="#0000ff" stroke-width="2"/><polyline points="1550.0,1484.0 2258.0,1060.0" fill="none" stroke="#00ff00" stroke-width="2"/><polyline points="2263.0,953.6 2265.5,1052.5 2313.6,1141.0" fill="none" stroke="#00ff00" stroke-width="2"/><polyline points="2201.0,1052.5 2226.4,1037.3 2265.0,1058.0" fill="none" stroke="#ff00ff" stroke-width="2"/><polyline points="2883.0,249.0 3282.0,249.0" fill="none" stroke="#ff0000" stroke-width="2"/><polyline points="2883.0,240.0 2883.0,259.0" fill="none" stroke="#ff0000" stroke-width="2"/><polyline points="1129.0,1021.0 1159.5,892.6" fill="none" stroke="#0000ff" stroke-width="2"/><polyline points="1141.0,1021.0 1170.0,906.0" fill="none" stroke="#ff0000" stroke-width="2"/><polyline points="1150.0,1020.0 1172.0,906.0" fill="none" stroke="#00ff00" stroke-width="2"/><polyline points="1139.0,1023.0 994.5,1060.0" fill="none" stroke="#0000ff" stroke-width="2"/><polyline points="1139.0,1025.0 998.0,1066.0" fill="none" stroke="#ff0000" stroke-width="2"/><polyline points="1146.0,1028.0 1004.0,1074.0" fill="none" stroke="#00ff00" stroke-width="2"/><polyline points="1154.0,1024.0 1194.8,989.8" fill="none" stroke="#00ff00" stroke-width="2"/><polyline points="1091.0,1080.6 1135.4,1132.5" fill="none" stroke="#ff00ff" stroke-width="2"/><polyline points="1445.0,1227.0 1369.0,1290.0" fill="none" stroke="#0000ff" stroke-width="2"/><polyline points="1448.8,1230.8 1372.7,1292.0" fill="none" stroke="#ff0000" stroke-width="2"/><polyline points="1452.5,1236.3 1383.9,1292.0" fill="none" stroke="#00ff00" stroke-width="2"/><polyline points="1919.8,1864.0 1972.4,1826.8" fill="none" stroke="#0000ff" stroke-width="2"/><polyline points="1933.8,1864.0 1976.0,1830.0" fill="none" stroke="#ff0000" stroke-width="2"/><polyline points="1957.0,1864.0 1981.8,1836.0" fill="none" stroke="#00ff00" stroke-width="2"/><polyline points="1550.0,1484.0 1738.7,1563.0" fill="none" stroke="#00ff00" stroke-width="2"/><polyline points="1550.0,1484.0 1487.3,1554.5" fill="none" stroke="#00ff00" stroke-width="2"/><polyline points="1630.0,1365.0 1661.8,1417.6" fill="none" stroke="#00ff00" stroke-width="2"/><polyline points="1610.0,1383.0 1630.0,1365.0 1655.0,1375.0" fill="none" stroke="#ff00ff" stroke-width="2"/><polyline points="1720.0,1587.0 1738.7,1563.0" fill="none" stroke="#ff00ff" stroke-width="2"/><polyline points="1480.0,1530.0 1487.3,1554.5 1500.0,1560.0" fill="none" stroke="#ff00ff" stroke-width="2"/><polyline points="2290.0,1138.0 2313.6,1142.8" fill="none" stroke="#ff00ff" stroke-width="2"/><circle cx="1139" cy="1023" r="7" fill="none" stroke="#000" stroke-width="2.5"/><circle cx="1154" cy="1024" r="7" fill="none" stroke="#000" stroke-width="2"/><circle cx="1535.5" cy="1484.7" r="8" fill="none" stroke="#000" stroke-width="3"/><circle cx="1550.5" cy="1483.7" r="7" fill="none" stroke="#000" stroke-width="2.5"/><circle cx="2265.5" cy="1058.6" r="8" fill="none" stroke="#000" stroke-width="2.2"/><circle cx="1169.6" cy="906.3" r="8.5" fill="#111" stroke="#00ffff" stroke-width="2"/><line x1="1164.6" y1="911.3" x2="1174.6" y2="901.3" stroke="#00ffff" stroke-width="1.5"/><circle cx="1630.2" cy="1364.8" r="8.5" fill="#111" stroke="#00ffff" stroke-width="2"/><line x1="1625.2" y1="1369.8" x2="1635.2" y2="1359.8" stroke="#00ffff" stroke-width="1.5"/><circle cx="1738.7" cy="1563.2" r="8.5" fill="#111" stroke="#00ffff" stroke-width="2"/><line x1="1733.7" y1="1568.2" x2="1743.7" y2="1558.2" stroke="#00ffff" stroke-width="1.5"/><circle cx="1487.3" cy="1554.5" r="8.5" fill="#111" stroke="#00ffff" stroke-width="2"/><line x1="1482.3" y1="1559.5" x2="1492.3" y2="1549.5" stroke="#00ffff" stroke-width="1.5"/><circle cx="2313.6" cy="1142.8" r="8.5" fill="#111" stroke="#00ffff" stroke-width="2"/><line x1="2308.6" y1="1147.8" x2="2318.6" y2="1137.8" stroke="#00ffff" stroke-width="1.5"/><polyline points="2310.0,781.0 2441.0,985.0 2514.0,1119.0" fill="none" stroke="#8a8a8a" stroke-width="2"/><polyline points="2243.0,846.5 2441.0,985.0" fill="none" stroke="#8a8a8a" stroke-width="2"/><polyline points="2383.0,1107.0 2457.6,1196.0 2368.0,1174.0" fill="none" stroke="#8a8a8a" stroke-width="2"/><polyline points="2150.0,1021.0 2232.0,974.0 2255.6,874.0 2243.0,846.0" fill="none" stroke="#8a8a8a" stroke-width="2"/><polyline points="2150.0,1000.0 2194.0,945.0 2230.0,927.0 2282.0,872.0 2325.0,832.0" fill="none" stroke="#c4c4c4" stroke-width="2"/><polyline points="2194.0,945.0 2215.0,990.0" fill="none" stroke="#c4c4c4" stroke-width="2"/><polyline points="2230.0,927.0 2250.0,975.0" fill="none" stroke="#c4c4c4" stroke-width="2"/><polyline points="2282.0,872.0 2290.0,935.0" fill="none" stroke="#c4c4c4" stroke-width="2"/><polyline points="2255.0,900.0 2300.0,850.0" fill="none" stroke="#c4c4c4" stroke-width="2"/><line x1="1077.5" y1="959.9" x2="1063.7" y2="971.5" stroke="#000" stroke-width="2"/><line x1="1185.7" y1="1088.5" x2="1171.9" y2="1100.1" stroke="#000" stroke-width="2"/><line x1="1296.2" y1="1217.6" x2="1282.4" y2="1229.2" stroke="#000" stroke-width="2"/><line x1="1403.5" y1="1345.4" x2="1390.0" y2="1357.2" stroke="#000" stroke-width="2"/><line x1="1695.8" y1="1416.8" x2="1704.8" y2="1432.2" stroke="#000" stroke-width="2"/><line x1="1838.4" y1="1331.5" x2="1847.6" y2="1347.1" stroke="#000" stroke-width="2"/><line x1="1983.4" y1="1244.6" x2="1992.6" y2="1260.2" stroke="#000" stroke-width="2"/><line x1="2127.6" y1="1158.1" x2="2136.8" y2="1173.7" stroke="#000" stroke-width="2"/><line x1="2271.8" y1="1071.5" x2="2281.0" y2="1087.1" stroke="#000" stroke-width="2"/><line x1="2416.4" y1="987.9" x2="2425.6" y2="1003.5" stroke="#000" stroke-width="2"/><line x1="1683.0" y1="1643.3" x2="1669.5" y2="1655.1" stroke="#000" stroke-width="2"/><line x1="1785.5" y1="1775.5" x2="1772.0" y2="1787.3" stroke="#000" stroke-width="2"/><line x1="1536.5" y1="1433.0" x2="1531.1" y2="1450.0" stroke="#000" stroke-width="2"/><text x="836.0" y="737.0" font-size="26" fill="#000" text-anchor="middle" transform="rotate(50 836.0 728.0)">190</text><text x="1159.5" y="1121.0" font-size="26" fill="#000" text-anchor="middle" transform="rotate(50 1159.5 1112.0)">220</text><text x="1267.0" y="1249.0" font-size="26" fill="#000" text-anchor="middle" transform="rotate(50 1267.0 1240.0)">230</text><text x="1377.5" y="1371.0" font-size="26" fill="#000" text-anchor="middle" transform="rotate(50 1377.5 1362.0)">240</text><text x="1528.0" y="1473.5" font-size="26" fill="#000" text-anchor="middle" transform="rotate(30 1528.0 1464.5)">250</text><text x="1710.0" y="1455.4" font-size="26" fill="#000" text-anchor="middle" transform="rotate(-25 1710.0 1446.4)">260</text><text x="1856.9" y="1370.0" font-size="26" fill="#000" text-anchor="middle" transform="rotate(-30 1856.9 1361.0)">270</text><text x="2002.3" y="1278.0" font-size="26" fill="#000" text-anchor="middle" transform="rotate(-30 2002.3 1269.0)">280</text><text x="2147.8" y="1192.6" font-size="26" fill="#000" text-anchor="middle" transform="rotate(-30 2147.8 1183.6)">290</text><text x="2291.7" y="1110.0" font-size="26" fill="#000" text-anchor="middle" transform="rotate(-30 2291.7 1101.0)">300</text><text x="2433.0" y="1024.0" font-size="26" fill="#000" text-anchor="middle" transform="rotate(-30 2433.0 1015.0)">310</text><text x="2462.0" y="1008.0" font-size="26" fill="#000" text-anchor="middle" transform="rotate(-30 2462.0 999.0)">312</text><text x="1617.0" y="1498.6" font-size="26" fill="#000" text-anchor="middle" transform="rotate(-70 1617.0 1489.6)">0</text><text x="1653.4" y="1669.6" font-size="26" fill="#000" text-anchor="middle" transform="rotate(50 1653.4 1660.6)">10</text><text x="1758.3" y="1808.6" font-size="26" fill="#000" text-anchor="middle" transform="rotate(50 1758.3 1799.6)">20</text><text transform="translate(560.0 685.7) scale(1 1.05)" font-size="43" fill="#00ff40">105.87</text><text transform="translate(1187.5 922.9) scale(1 1.05)" font-size="43" fill="#00ff40">16237</text><text transform="translate(1188.9 957.7) scale(1 1.05)" font-size="43" fill="#00ff40">103.51</text><text transform="translate(1005.5 990.3) scale(1 1.05)" font-size="43" fill="#cc0000">180</text><text transform="translate(954.7 1025.5) scale(1 1.05)" font-size="43" fill="#cc0000">102.39</text><text transform="translate(1216.3 1026.3) scale(1 1.05)" font-size="43" fill="#00ff40">78</text><text transform="translate(1202.1 1060.7) scale(1 1.05)" font-size="43" fill="#00ff40">102.659</text><text transform="translate(2309.9 1041.0) scale(1 1.05)" font-size="43" fill="#00ff40">549</text><text transform="translate(2285.7 1078.8) scale(1 1.05)" font-size="43" fill="#00ff40">100.626</text><text transform="translate(2262.1 1195.0) scale(1 1.05)" font-size="43" fill="#00ff40">38860</text><text transform="translate(2259.7 1229.5) scale(1 1.05)" font-size="43" fill="#00ff40">100.65</text><text transform="translate(1604.7 1313.2) scale(1 1.05)" font-size="43" fill="#00ff40">20450</text><text transform="translate(1603.6 1350.3) scale(1 1.05)" font-size="43" fill="#00ff40">102.67</text><text transform="translate(1762.9 1537.1) scale(1 1.05)" font-size="43" fill="#00ff40">19007</text><text transform="translate(1756.0 1575.5) scale(1 1.05)" font-size="43" fill="#00ff40">102.25</text><text transform="translate(1346.0 1569.5) scale(1 1.05)" font-size="43" fill="#00ff40">16096</text><text transform="translate(1354.3 1604.4) scale(1 1.05)" font-size="43" fill="#00ff40">102.60</text><text transform="translate(1412.5 1474.7) scale(1 1.05)" font-size="43" fill="#cc0000">510</text><text transform="translate(1389.3 1511.3) scale(1 1.05)" font-size="43" fill="#cc0000">101.69</text><text transform="translate(1514.9 1391.5) scale(1 1.05)" font-size="43" fill="#00ff40">500</text><text transform="translate(1483.7 1428.0) scale(1 1.05)" font-size="43" fill="#00ff40">101.966</text><text transform="translate(1747.7 1845.5) scale(1 1.05)" font-size="43" fill="#cc0000">170</text><text transform="translate(1718.7 1881.0) scale(1 1.05)" font-size="43" fill="#cc0000">101.53</text><text transform="translate(2006.5 1882.0) scale(1 1.05)" font-size="43" fill="#00ff40">68</text><text transform="translate(830.4 524.0) scale(1 1.05)" font-size="43" fill="#00ff40">3</text><text transform="translate(831.0 568.0) scale(1 1.05)" font-size="43" fill="#00ff40">4</text><text transform="translate(12.9 1037.8) scale(1 1.05)" font-size="99.3" fill="#00ffff">3306</text><text transform="translate(1654.7 965.9) scale(1 1.05)" font-size="98" fill="#00ffff">13305</text><text x="0" y="0" font-size="50" fill="#00ff40" stroke="#00ff40" stroke-width="0.9" text-anchor="middle" dominant-baseline="central" transform="translate(2512 921.5) rotate(61) scale(1 1.04)">Ylikyläntie</text><rect x="0" y="134" width="1.5" height="1730" fill="#000"/><rect x="0" y="0" width="3282" height="40" fill="#0288ca"/><polygon points="2.0,33.5 30.0,6.0 30.0,33.5" fill="#f6c312"/><polygon points="10.0,29.0 25.0,15.5 25.0,29.0" fill="#0288ca"/><text x="36" y="29" font-size="20.8" fill="#fff">Lehtikangas3.dwg - 3D-Win - Käyttöoikeus: Novatron Oy / Petri Kaihia</text><rect x="0" y="40" width="3282" height="32" fill="#fff"/><rect x="0.5" y="40.5" width="104" height="31.5" fill="#cce8ff" stroke="#99d1ff" stroke-width="1"/><text x="13" y="64.3" font-size="20.3" fill="#000">Tiedosto</text><text x="118" y="64.3" font-size="20.3" fill="#000">Hakemisto</text><text x="242" y="64.3" font-size="20.3" fill="#000">Zoomaus</text><text x="354" y="64.3" font-size="20.3" fill="#000">Editointi</text><text x="456.7" y="64.3" font-size="20.3" fill="#000">Laskenta</text><text x="563.5" y="64.3" font-size="20.3" fill="#000">Maastomalli</text><text x="703" y="64.3" font-size="20.3" fill="#000">Tiegeometria</text><text x="849.3" y="64.3" font-size="20.3" fill="#000">Kairaus</text><text x="942.4" y="64.3" font-size="20.3" fill="#000">Asetukset</text><text x="1058.7" y="64.3" font-size="20.3" fill="#000">Työkalut</text><text x="1161.6" y="64.3" font-size="20.3" fill="#000">Ikkuna</text><text x="1248.3" y="64.3" font-size="20.3" fill="#000">Ohje</text><rect x="0" y="72" width="3282" height="60" fill="#f0f0f0"/><rect x="0" y="132" width="3282" height="1" fill="#fafafa"/><rect x="0" y="133" width="3282" height="1" fill="#000"/><rect x="0" y="134" width="3282" height="1" fill="#333"/><rect x="796.5" y="83.2" width="41" height="32" rx="4" fill="#fff" stroke="#a3a3a3" stroke-width="3.5"/><rect x="808" y="115" width="18" height="5" fill="#a3a3a3"/><rect x="799" y="120" width="36" height="5.4" fill="#a3a3a3"/><rect x="849.5" y="83.2" width="41" height="32" rx="4" fill="#fff" stroke="#a3a3a3" stroke-width="3.5"/><rect x="861" y="115" width="18" height="5" fill="#a3a3a3"/><rect x="852" y="120" width="36" height="5.4" fill="#a3a3a3"/><path d="M856 97 h16 v-6 l13 10 l-13 10 v-6 h-16 z" fill="#fff" stroke="#000" stroke-width="2.2" stroke-linejoin="miter"/><rect x="903.5" y="83.2" width="41" height="32" rx="4" fill="#fff" stroke="#a3a3a3" stroke-width="3.5"/><rect x="915" y="115" width="18" height="5" fill="#a3a3a3"/><rect x="906" y="120" width="36" height="5.4" fill="#a3a3a3"/><circle cx="922" cy="99.5" r="9" fill="#fff" stroke="#000" stroke-width="2"/><line x1="928" y1="105.5" x2="936" y2="113.5" stroke="#000" stroke-width="3.5"/><rect x="916" y="97.7" width="12" height="3.6" fill="#000"/><rect x="920.2" y="93.5" width="3.6" height="12" fill="#000"/><rect x="957.5" y="83.2" width="41" height="32" rx="4" fill="#fff" stroke="#a3a3a3" stroke-width="3.5"/><rect x="969" y="115" width="18" height="5" fill="#a3a3a3"/><rect x="960" y="120" width="36" height="5.4" fill="#a3a3a3"/><circle cx="976" cy="99.5" r="9" fill="#fff" stroke="#000" stroke-width="2"/><line x1="982" y1="105.5" x2="990" y2="113.5" stroke="#000" stroke-width="3.5"/><rect x="970" y="97.7" width="12" height="3.6" fill="#000"/><rect x="1010.0" y="79.5" width="1.2" height="49" fill="#a0a0a0"/><rect x="1127.8" y="79.5" width="1.2" height="49" fill="#a0a0a0"/><rect x="1407.5" y="79.5" width="1.2" height="49" fill="#a0a0a0"/><rect x="1526.0" y="79.5" width="1.2" height="49" fill="#a0a0a0"/><rect x="1751.9" y="79.5" width="1.2" height="49" fill="#a0a0a0"/><path d="M1026 97 l9 -9 v5 h14 a6 6 0 0 1 6 6 v13 a6 6 0 0 1 -6 6 h-14 v-6 h13 v-13 h-13 v5 z" fill="#ff00ff"/><path d="M1112 97 l-9 -9 v5 h-14 a6 6 0 0 0 -6 6 v13 a6 6 0 0 0 6 6 h14 v-6 h-13 v-13 h13 v5 z" fill="#ff00ff"/><rect x="1146.0" y="107.75" width="16" height="4.5" fill="#ff0000"/><rect x="1151.75" y="102.0" width="4.5" height="16" fill="#ff0000"/><path d="M1165.5 93 q0 -6.5 6.2 -6.5 q6.3 0 6.3 6.5 q0 4.5 -5 7.5 v5" fill="none" stroke="#000" stroke-width="3.5"/><rect x="1170" y="108" width="4.5" height="4.5" fill="#000"/><rect x="1206.0" y="101.75" width="16" height="4.5" fill="#ff0000"/><rect x="1211.75" y="96.0" width="4.5" height="16" fill="#ff0000"/><rect x="1250.0" y="91.75" width="16" height="4.5" fill="#ff0000"/><rect x="1255.75" y="86.0" width="4.5" height="16" fill="#ff0000"/><rect x="1270.0" y="101.75" width="16" height="4.5" fill="#ff0000"/><rect x="1275.75" y="96.0" width="4.5" height="16" fill="#ff0000"/><rect x="1256.0" y="113.75" width="16" height="4.5" fill="#ff0000"/><rect x="1261.75" y="108.0" width="4.5" height="16" fill="#ff0000"/><polyline points="1303,85 1316,92" stroke="#00ffff" stroke-width="4" fill="none"/><polyline points="1316,90 1318,108" stroke="#ff00ff" stroke-width="4" fill="none"/><polyline points="1322,113 1341,124" stroke="#00ffff" stroke-width="4" fill="none"/><rect x="1311.0" y="110.0" width="14" height="4" fill="#ff0000"/><rect x="1316.0" y="105.0" width="4" height="14" fill="#ff0000"/><text x="1356" y="116" font-size="31" font-weight="bold" fill="#000" textLength="40" lengthAdjust="spacingAndGlyphs">TXT</text><line x1="1420" y1="121" x2="1460" y2="121" stroke="#000" stroke-width="2.5"/><line x1="1421" y1="118" x2="1421" y2="125" stroke="#000" stroke-width="2"/><line x1="1457" y1="118" x2="1457" y2="125" stroke="#000" stroke-width="2"/><line x1="1422" y1="120" x2="1440" y2="103" stroke="#ff0000" stroke-width="1.5"/><line x1="1440" y1="103" x2="1455" y2="88" stroke="#888" stroke-width="1.2"/><rect x="1451.0" y="85.75" width="8" height="2.5" fill="#000"/><rect x="1453.75" y="83.0" width="2.5" height="8" fill="#000"/><line x1="1440" y1="103" x2="1457" y2="119" stroke="#00cc00" stroke-width="1.5"/><text x="1421" y="102" font-size="14" fill="#ff0000">A</text><text x="1436" y="119" font-size="13" fill="#00cc00">B</text><text x="1451" y="101" font-size="14" fill="#ff00ff">α</text><path d="M1445 96 Q1455 105 1456 118" stroke="#ff00ff" stroke-width="1.5" fill="none"/><path d="M1475 85 h31 l7 7 v31 h-18 v-13 h-20 z" fill="#00ff00" stroke="#000" stroke-width="2.5"/><text x="1481" y="104" font-size="15" font-weight="bold" fill="#000">m</text><text x="1496" y="99" font-size="12" font-weight="bold" fill="#000">2</text><circle cx="1545" cy="91" r="6" fill="none" stroke="#000" stroke-width="1.8"/><circle cx="1545" cy="91" r="1.3" fill="#000"/><line x1="1546" y1="110" x2="1573" y2="83" stroke="#000" stroke-width="1.5"/><rect x="1564.5" y="101.9" width="13" height="2.2" fill="#000"/><rect x="1569.9" y="96.5" width="2.2" height="13" fill="#000"/><text x="1539" y="126" font-size="14" fill="#000" letter-spacing="4">XYZ</text><text x="1590" y="90" font-size="12" fill="#000">x  x</text><text x="1591" y="111" font-size="12" fill="#000">x x</text><text x="1591" y="124" font-size="12" fill="#000">x</text><path d="M1597 101 l10 21 l23 -38" stroke="#ff0000" stroke-width="5" fill="none"/><polygon points="1649,121 1663,98 1677,121" fill="none" stroke="#00dd00" stroke-width="1.8"/><text x="1656" y="119" font-size="12" fill="#000">x</text><text x="1669" y="104" font-size="15" fill="#000">12</text><rect x="1645" y="82" width="13" height="13" fill="none" stroke="#000" stroke-width="1.2"/><text x="1647" y="93" font-size="11" fill="#000">x</text><rect x="1693.5" y="77.5" width="52" height="52" fill="#f0f0f0" stroke="#a0a0a0" stroke-width="1"/><line x1="1700" y1="96" x2="1729" y2="124" stroke="#999" stroke-width="1.3"/><text x="1703" y="121" font-size="11" fill="#000">x</text><text x="1718" y="107" font-size="11" fill="#000">x</text><text x="1724" y="99" font-size="16" fill="#000">21</text><circle cx="1784" cy="104" r="20.3" fill="#00ffff"/><path d="M1775.5 110 q-5 -7 -2 -14 q4 -8 10.5 -8 q6.5 0 10.5 8 q3 7 -2 14" stroke="#000" stroke-width="3.5" fill="none"/><rect x="1771" y="97" width="4" height="9" fill="#000"/><rect x="1793" y="97" width="4" height="9" fill="#000"/><rect x="1782" y="113" width="8" height="2.5" fill="#000"/><circle cx="1838" cy="104" r="20.3" fill="#00ffff"/><path d="M1826 94 l5 20 l7 -12 l6 12 l5 -20" stroke="#000" stroke-width="4.5" fill="none"/><rect x="1362" y="313" width="1864" height="389" fill="#fff"/><rect x="1362" y="313" width="1864" height="52" fill="#0288ca"/><polygon points="1375.0,352.5 1403.0,325.0 1403.0,352.5" fill="#f6c312"/><polygon points="1383.0,348.0 1398.0,334.5 1398.0,348.0" fill="#0288ca"/><text x="1409" y="348" font-size="20.7" fill="#fff">Lehtikangas3.dwg - Elementtien valinta</text><path d="M3015 339.5 h15" stroke="#fff" stroke-width="1.3"/><rect x="3096.5" y="332" width="14.5" height="14.5" fill="none" stroke="#fff" stroke-width="1.3"/><path d="M3177 332 L3192 347 M3192 332 L3177 347" stroke="#fff" stroke-width="1.5"/><rect x="1362" y="365" width="1864" height="60" fill="#f0f0f0"/><rect x="1362" y="424" width="1864" height="1.2" fill="#a0a0a0"/><path d="M1378 396 v-8 q0 -4 4 -4 h4" fill="none" stroke="#000" stroke-width="3.5"/><path d="M1385 379 v11 l7 -5.5 z" fill="#000"/><path d="M1396 375 h11 l6 6 v18 h-17 z" fill="#fff" stroke="#000" stroke-width="2"/><path d="M1431 396 v-8 q0 -4 4 -4 h4" fill="none" stroke="#000" stroke-width="3.5"/><path d="M1438 379 v11 l7 -5.5 z" fill="#000"/><path d="M1449 375 h11 l6 6 v18 h-17 z" fill="#fff" stroke="#000" stroke-width="2"/><rect x="1427" y="404" width="21" height="10" fill="#e8e8e8" stroke="#000" stroke-width="1.8"/><rect x="1431" y="407.5" width="6" height="2" fill="#ff0000"/><path d="M1483 396 v-8 q0 -4 4 -4 h4" fill="none" stroke="#000" stroke-width="3.5"/><path d="M1490 379 v11 l7 -5.5 z" fill="#000"/><rect x="1481" y="404" width="21" height="10" fill="#e8e8e8" stroke="#000" stroke-width="1.8"/><rect x="1485" y="407.5" width="6" height="2" fill="#ff0000"/><g stroke="#000" stroke-width="1.4"><line x1="1497" y1="372" x2="1523" y2="398"/><line x1="1501" y1="372" x2="1523" y2="394"/><line x1="1505" y1="372" x2="1523" y2="390"/><line x1="1509" y1="372" x2="1523" y2="386"/><line x1="1513" y1="372" x2="1523" y2="382"/><line x1="1517" y1="372" x2="1523" y2="378"/><line x1="1497" y1="378" x2="1505" y2="372" stroke-dasharray="2 2"/><line x1="1500" y1="382" x2="1508" y2="376" stroke-dasharray="2 2"/><line x1="1503" y1="386" x2="1511" y2="380" stroke-dasharray="2 2"/><line x1="1506" y1="390" x2="1514" y2="384" stroke-dasharray="2 2"/><line x1="1509" y1="394" x2="1517" y2="388" stroke-dasharray="2 2"/></g><rect x="1532.5" y="370" width="1.2" height="50" fill="#a0a0a0"/><rect x="1596.5" y="370" width="1.2" height="50" fill="#a0a0a0"/><rect x="1822.5" y="370" width="1.2" height="50" fill="#a0a0a0"/><rect x="1940.5" y="370" width="1.2" height="50" fill="#a0a0a0"/><rect x="2004.9" y="370" width="1.2" height="50" fill="#a0a0a0"/><rect x="2122.5" y="370" width="1.2" height="50" fill="#a0a0a0"/><rect x="2186.9" y="370" width="1.2" height="50" fill="#a0a0a0"/><rect x="2305.1" y="370" width="1.2" height="50" fill="#a0a0a0"/><path d="M1543 380 h16 v24 h-16 z" fill="#ff0000" stroke="#000" stroke-width="1.5"/><path d="M1547 376 h12 l6 6 v16 h-18 z" fill="#fff" stroke="#000" stroke-width="2"/><path d="M1567 381 h8 q3 0 3 4 v6" fill="none" stroke="#000" stroke-width="3"/><path d="M1573 389 h11 l-5.5 7 z" fill="#000"/><path d="M1576 404 v12 M1570 410 h12" stroke="#000" stroke-width="4.5"/><path d="M1576 405 v10 M1571 410 h10" stroke="#fff" stroke-width="2"/><path d="M1610 376 h11 l6 6 v17 h-17 z" fill="#fff" stroke="#000" stroke-width="2"/><path d="M1630 386 h8 q3 0 3 4 v6" fill="none" stroke="#000" stroke-width="3"/><path d="M1636 394 h11 l-5.5 7 z" fill="#000"/><rect x="1628" y="404" width="21" height="10" fill="#e8e8e8" stroke="#000" stroke-width="1.8"/><rect x="1632" y="407.5" width="6" height="2" fill="#ff0000"/><path d="M1664 376 h11 l6 6 v17 h-17 z" fill="#fff" stroke="#000" stroke-width="2"/><path d="M1686 378 h8 q3 0 3 4 v6" fill="none" stroke="#000" stroke-width="3"/><path d="M1692 386 h11 l-5.5 7 z" fill="#000"/><path d="M1688 394 h11 l6 6 v16 h-17 z" fill="#fff" stroke="#000" stroke-width="2"/><text x="1718" y="402" font-size="30" fill="#ff0000">?</text><path d="M1740 386 h8 q3 0 3 4 v6" fill="none" stroke="#000" stroke-width="3"/><path d="M1746 394 h11 l-5.5 7 z" fill="#000"/><rect x="1736" y="404" width="21" height="10" fill="#e8e8e8" stroke="#000" stroke-width="1.8"/><rect x="1740" y="407.5" width="6" height="2" fill="#ff0000"/><path d="M1769 380 h16 v24 h-16 z" fill="#ff0000" stroke="#000" stroke-width="1.5"/><path d="M1773 376 h12 l6 6 v16 h-18 z" fill="#fff" stroke="#000" stroke-width="2"/><path d="M1791 386 h8 q3 0 3 4 v6" fill="none" stroke="#000" stroke-width="3"/><path d="M1797 394 h11 l-5.5 7 z" fill="#000"/><rect x="1790" y="404" width="21" height="10" fill="#e8e8e8" stroke="#000" stroke-width="1.8"/><rect x="1794" y="407.5" width="6" height="2" fill="#ff0000"/><path d="M1835 376 h11 l6 6 v17 h-17 z" fill="#fff" stroke="#000" stroke-width="2"/><path d="M1855 388 h8 q3 0 3 4 v6" fill="none" stroke="#000" stroke-width="3"/><path d="M1861 396 h11 l-5.5 7 z" fill="#000"/><path d="M1886 380 h16 v24 h-16 z" fill="#ff0000" stroke="#000" stroke-width="1.5"/><path d="M1890 376 h12 l6 6 v16 h-18 z" fill="#fff" stroke="#000" stroke-width="2"/><path d="M1909 388 h8 q3 0 3 4 v6" fill="none" stroke="#000" stroke-width="3"/><path d="M1915 396 h11 l-5.5 7 z" fill="#000"/><path d="M1957 376 v9 M1952.5 380.5 h9" stroke="#ff0000" stroke-width="3"/><path d="M1960 390 h16 v24 h-16 z" fill="#fff" stroke="#000" stroke-width="1.5"/><path d="M1964 386 h16 v24 h-16 z" fill="#ff0000" stroke="#000" stroke-width="1.5"/><path d="M1968 380 h16 l6 6 v22 h-22 z" fill="#fff" stroke="#000" stroke-width="2"/><rect x="2017" y="375.5" width="40" height="33" rx="4" fill="#fff" stroke="#a3a3a3" stroke-width="3.5"/><rect x="2027" y="409" width="20" height="3" fill="#a3a3a3"/><rect x="2019" y="412" width="36" height="4.5" fill="#a3a3a3"/><rect x="2071" y="375.5" width="40" height="33" rx="4" fill="#fff" stroke="#a3a3a3" stroke-width="3.5"/><rect x="2081" y="409" width="20" height="3" fill="#a3a3a3"/><rect x="2073" y="412" width="36" height="4.5" fill="#a3a3a3"/><path d="M2024 390 v-7 h7 M2024 383 l7 7 M2049 390 v-7 h-7 M2049 383 l-7 7 M2024 397 v7 h7 M2024 404 l7 -7 M2049 397 v7 h-7 M2049 404 l-7 -7" stroke="#000" stroke-width="1.5" fill="none"/><path d="M2077 403 q15 0 20 -14 l4 -6 l2 10 q-3 10 -10 11 z" fill="#ffff00" stroke="#000" stroke-width="1.5"/><g fill="#000"><rect x="2134" y="374" width="2" height="2"/><rect x="2141" y="385" width="2" height="2"/><rect x="2148" y="396" width="2" height="2"/><rect x="2155" y="381" width="2" height="2"/><rect x="2134" y="392" width="2" height="2"/><rect x="2141" y="377" width="2" height="2"/><rect x="2148" y="388" width="2" height="2"/><rect x="2155" y="399" width="2" height="2"/><rect x="2134" y="384" width="2" height="2"/><rect x="2141" y="395" width="2" height="2"/><rect x="2148" y="380" width="2" height="2"/><rect x="2155" y="391" width="2" height="2"/><rect x="2134" y="376" width="2" height="2"/><rect x="2141" y="387" width="2" height="2"/></g><path d="M2152 385 h8 q3 0 3 4 v6" fill="none" stroke="#000" stroke-width="3"/><path d="M2158 393 h11 l-5.5 7 z" fill="#000"/><rect x="2154" y="406" width="21" height="10" fill="#e8e8e8" stroke="#000" stroke-width="1.8"/><rect x="2158" y="409.5" width="6" height="2" fill="#ff0000"/><text x="2197" y="384" font-size="11" fill="#000">x  x</text><text x="2198" y="413" font-size="11" fill="#000">x</text><path d="M2203 392 l11 21 l16 -37" stroke="#ff0000" stroke-width="5" fill="none"/><polygon points="2256,412 2270,390 2284,412" fill="none" stroke="#00dd00" stroke-width="1.8"/><text x="2264" y="410" font-size="11" fill="#000">x</text><text x="2276" y="395" font-size="15" fill="#000">12</text><rect x="2251" y="373" width="12" height="12" fill="none" stroke="#000" stroke-width="1.2"/><circle cx="2337" cy="395.5" r="20" fill="#ff0000"/><text x="2337" y="406" font-size="28" font-weight="bold" fill="#fff" text-anchor="middle">?</text><path d="M3144 379 l16 16 h-9 v14 h-14 v-14 h-9 z" fill="#00ffff" stroke="#000" stroke-width="2.2"/><path d="M3196 411 l16 -16 h-9 v-13 h-14 v13 h-9 z" fill="#00ffff" stroke="#000" stroke-width="2.2"/><rect x="1892.5" y="427" width="1" height="37" fill="#e5e5e5"/><rect x="1989.0" y="427" width="1" height="37" fill="#e5e5e5"/><rect x="2128.9" y="427" width="1" height="37" fill="#e5e5e5"/><rect x="2268.8" y="427" width="1" height="37" fill="#e5e5e5"/><rect x="2408.7" y="427" width="1" height="37" fill="#e5e5e5"/><rect x="2548.9" y="427" width="1" height="37" fill="#e5e5e5"/><rect x="2688.8" y="427" width="1" height="37" fill="#e5e5e5"/><text x="1372" y="454.6" font-size="19.7" fill="#000">Nimi</text><text x="1906" y="454.6" font-size="19.7" fill="#000">Editoitu</text><text x="2059.45" y="454.6" font-size="19.7" fill="#000" text-anchor="middle">Käytössä</text><text x="2199.3500000000004" y="454.6" font-size="19.7" fill="#000" text-anchor="middle">Piilossa</text><text x="2339.25" y="454.6" font-size="19.7" fill="#000" text-anchor="middle">Asetukset</text><text x="2479.3" y="454.6" font-size="19.7" fill="#000" text-anchor="middle">Väri</text><text x="2683" y="454.6" font-size="19.7" fill="#000" text-anchor="end">Pisteitä</text><text x="2696.5" y="454.6" font-size="19.7" fill="#000">Tyyppi</text><rect x="1369.5" y="472.5" width="19" height="19" fill="#fff" stroke="#333" stroke-width="1.2"/><text x="1394.7" y="491.5" font-size="19.7" fill="#000">Lehtikangas3_KOLMIOINTI_LEIKKAUS.dwg</text><text x="2059.5" y="491.5" font-size="19.7" fill="#000" text-anchor="middle">[X]</text><text x="2199.4" y="491.5" font-size="19.7" fill="#000" text-anchor="middle">[X]</text><text x="2339.3" y="491.5" font-size="19.7" fill="#000" text-anchor="middle">[  ]</text><rect x="2412" y="467" width="136" height="31" fill="#fff" stroke="#000" stroke-width="1.5"/><text x="2683" y="491.5" font-size="19.7" fill="#000" text-anchor="end">37965</text><text x="2696.5" y="491.5" font-size="19.7" fill="#000">Maastomalli, Pinta KOLMIOINTI_LEIKKAUS</text><rect x="1369.5" y="506.5" width="19" height="19" fill="#fff" stroke="#333" stroke-width="1.2"/><text x="1394.7" y="525.5" font-size="19.7" fill="#000">Lehtikangas3_KOLMIOINTI_KANTAVA.dwg</text><text x="2059.5" y="525.5" font-size="19.7" fill="#000" text-anchor="middle">[X]</text><text x="2199.4" y="525.5" font-size="19.7" fill="#000" text-anchor="middle">[X]</text><text x="2339.3" y="525.5" font-size="19.7" fill="#000" text-anchor="middle">[  ]</text><rect x="2412" y="501" width="136" height="31" fill="#fff" stroke="#000" stroke-width="1.5"/><text x="2683" y="525.5" font-size="19.7" fill="#000" text-anchor="end">21702</text><text x="2696.5" y="525.5" font-size="19.7" fill="#000">Maastomalli, Pinta KOLMIOINTI_KANTAVA</text><rect x="1369.5" y="540.5" width="19" height="19" fill="#fff" stroke="#333" stroke-width="1.2"/><text x="1394.7" y="559.5" font-size="19.7" fill="#000">Lehtikangas3_KOLMIOINTI_SUODATIN.dwg</text><text x="2059.5" y="559.5" font-size="19.7" fill="#000" text-anchor="middle">[X]</text><text x="2199.4" y="559.5" font-size="19.7" fill="#000" text-anchor="middle">[  ]</text><text x="2339.3" y="559.5" font-size="19.7" fill="#000" text-anchor="middle">[  ]</text><rect x="2412" y="535" width="136" height="31" fill="#808080" stroke="#000" stroke-width="1.5"/><text x="2683" y="559.5" font-size="19.7" fill="#000" text-anchor="end">22467</text><text x="2696.5" y="559.5" font-size="19.7" fill="#000">Maastomalli, Pinta KOLMIOINTI_SUODATIN</text><rect x="1369.5" y="574.5" width="19" height="19" fill="#fff" stroke="#333" stroke-width="1.2"/><text x="1394.7" y="593.5" font-size="19.7" fill="#000">Lehtikangas3_KOLMIOINTI_LEIKKAUS_VESIHU.dwg</text><text x="2059.5" y="593.5" font-size="19.7" fill="#000" text-anchor="middle">[X]</text><text x="2199.4" y="593.5" font-size="19.7" fill="#000" text-anchor="middle">[X]</text><text x="2339.3" y="593.5" font-size="19.7" fill="#000" text-anchor="middle">[  ]</text><rect x="2412" y="569" width="136" height="31" fill="#fff" stroke="#000" stroke-width="1.5"/><text x="2683" y="593.5" font-size="19.7" fill="#000" text-anchor="end">3171</text><text x="2696.5" y="593.5" font-size="19.7" fill="#000">Maastomalli, Pinta KOLMIOINTI_LEIKKAUS_VESIHU</text><rect x="1369.5" y="608.5" width="19" height="19" fill="#fff" stroke="#333" stroke-width="1.2"/><rect x="1392.2" y="601" width="172.4" height="33.6" fill="#0078d7"/><rect x="1392.7" y="601.5" width="171.4" height="32.6" fill="none" stroke="#000" stroke-width="0.8" stroke-dasharray="1 1" opacity="0.5"/><polyline points="1371,618.5 1377.5,624.5 1387.5,612.5" fill="none" stroke="#333" stroke-width="1.6"/><text x="1394.7" y="627.5" font-size="19.7" fill="#fff">Lehtikangas3.dwg</text><text x="2059.5" y="627.5" font-size="19.7" fill="#000" text-anchor="middle">[X]</text><text x="2199.4" y="627.5" font-size="19.7" fill="#000" text-anchor="middle">[  ]</text><text x="2339.3" y="627.5" font-size="19.7" fill="#000" text-anchor="middle">[  ]</text><rect x="2412" y="603" width="136" height="31" fill="#fff" stroke="#000" stroke-width="1.5"/><text x="2683" y="627.5" font-size="19.7" fill="#000" text-anchor="end">2739</text><text x="2696.5" y="627.5" font-size="19.7" fill="#000">Vektoritiedosto</text><rect x="1362" y="669" width="1864" height="33" fill="#f0f0f0"/><rect x="1362" y="669" width="1864" height="1.2" fill="#a0a0a0"/><rect x="1892.5" y="669" width="1.2" height="33" fill="#a0a0a0"/><rect x="1989.0" y="669" width="1.2" height="33" fill="#a0a0a0"/><rect x="2128.9" y="669" width="1.2" height="33" fill="#a0a0a0"/><rect x="2268.8" y="669" width="1.2" height="33" fill="#a0a0a0"/><rect x="2408.7" y="669" width="1.2" height="33" fill="#a0a0a0"/><rect x="2548.9" y="669" width="1.2" height="33" fill="#a0a0a0"/><rect x="2688.8" y="669" width="1.2" height="33" fill="#a0a0a0"/><text x="1375" y="695" font-size="19.7" fill="#000">1 / 5</text><text x="2059.5" y="695" font-size="19.7" fill="#000" text-anchor="middle">5</text><text x="2199.4" y="695" font-size="19.7" fill="#000" text-anchor="middle">3</text><text x="2479.3" y="695" font-size="19.7" fill="#000" text-anchor="middle">1</text><text x="2560" y="695" font-size="19.7" fill="#000">5206 / 88044</text><rect x="1362.5" y="313.5" width="1863" height="388" fill="none" stroke="#2a8fd6" stroke-width="1"/><rect x="847" y="136" width="492" height="729" fill="#f0f0f0"/><rect x="847" y="136" width="492" height="52" fill="#0288ca"/><rect x="847.5" y="136.5" width="491" height="728" fill="none" stroke="#2a8fd6" stroke-width="1"/><text x="861" y="170.5" font-size="20.7" fill="#fff">Lue vektoritiedosto</text><path d="M1302 156 L1317 171 M1317 156 L1302 171" stroke="#fff" stroke-width="1.6"/><rect x="858.5" y="200.5" width="349" height="34" fill="#e5e5e5" stroke="#c4c4c4" stroke-width="1"/><text x="858" y="265.3" font-size="18.7" fill="#000">Muuntimet</text><rect x="858.5" y="269.5" width="349" height="509" fill="#fff" stroke="#828790" stroke-width="1"/><rect x="860" y="317" width="346" height="22.7" fill="#0078d7"/><text x="862" y="289.5" font-size="18.7" fill="#000">3D</text><text x="862" y="312.5" font-size="18.7" fill="#000">Dgn2</text><text x="862" y="335.5" font-size="18.7" fill="#fff">Dwg2</text><text x="862" y="358.5" font-size="18.7" fill="#000">Excel</text><text x="862" y="381.5" font-size="18.7" fill="#000">GeoJSON</text><text x="862" y="404.5" font-size="18.7" fill="#000">Geonic</text><text x="862" y="427.5" font-size="18.7" fill="#000">GeoTiff</text><text x="862" y="450.5" font-size="18.7" fill="#000">GML</text><text x="862" y="473.5" font-size="18.7" fill="#000">GPKG</text><text x="862" y="496.5" font-size="18.7" fill="#000">Infra maastomalli</text><text x="862" y="519.5" font-size="18.7" fill="#000">LandXml</text><text x="862" y="542.5" font-size="18.7" fill="#000">LandXml (Xsite)</text><text x="862" y="565.5" font-size="18.7" fill="#000">LandXmlOpen</text><text x="862" y="588.5" font-size="18.7" fill="#000">LAS</text><text x="862" y="611.5" font-size="18.7" fill="#000">LatLonH</text><text x="862" y="634.5" font-size="18.7" fill="#000">MapInfo</text><text x="862" y="657.5" font-size="18.7" fill="#000">MM ascii</text><text x="862" y="680.5" font-size="18.7" fill="#000">Shapefile</text><text x="862" y="703.5" font-size="18.7" fill="#000">Trimble Locus</text><text x="862" y="726.5" font-size="18.7" fill="#000">Xsite Manage Asbuilt CSV</text><rect x="1220.3" y="202" width="105.29999999999995" height="30.69999999999999" fill="#e1e1e1" stroke="#0078d7" stroke-width="2"/><text x="1272.9499999999998" y="224.3" font-size="18.7" fill="#000" text-anchor="middle">OK *</text><rect x="1219.8" y="247.9" width="106.29999999999995" height="30.99999999999997" fill="#e1e1e1" stroke="#adadad" stroke-width="1"/><text x="1272.9499999999998" y="270.7" font-size="18.7" fill="#000" text-anchor="middle">Peruuta</text><rect x="1219.8" y="293.8" width="106.29999999999995" height="31.0" fill="#e1e1e1" stroke="#adadad" stroke-width="1"/><text x="1272.9499999999998" y="316.6" font-size="18.7" fill="#000" text-anchor="middle">Ohje *</text><rect x="1219.8" y="350.5" width="106.29999999999995" height="31" fill="#e1e1e1" stroke="#adadad" stroke-width="1"/><text x="1272.9499999999998" y="373.3" font-size="18.7" fill="#000" text-anchor="middle">Sisältö</text><rect x="1219.8" y="569.5" width="106.29999999999995" height="31.799999999999955" fill="#e1e1e1" stroke="#adadad" stroke-width="1"/><text x="1272.9499999999998" y="592.3" font-size="18.7" fill="#000" text-anchor="middle">Lisää *</text><rect x="1219.8" y="615.9" width="106.29999999999995" height="31.100000000000023" fill="#e1e1e1" stroke="#adadad" stroke-width="1"/><text x="1272.9499999999998" y="638.6999999999999" font-size="18.7" fill="#000" text-anchor="middle">Editoi *</text><rect x="1219.8" y="662.0" width="106.29999999999995" height="30.899999999999977" fill="#e1e1e1" stroke="#adadad" stroke-width="1"/><text x="1272.9499999999998" y="684.8" font-size="18.7" fill="#000" text-anchor="middle">Poista</text><rect x="1219.8" y="718.7" width="106.29999999999995" height="31.09999999999991" fill="#e1e1e1" stroke="#adadad" stroke-width="1"/><text x="1272.9499999999998" y="741.5" font-size="18.7" fill="#000" text-anchor="middle">Tuonti</text><rect x="1219.8" y="764.9" width="106.29999999999995" height="31.100000000000023" fill="#e1e1e1" stroke="#adadad" stroke-width="1"/><text x="1272.9499999999998" y="787.6999999999999" font-size="18.7" fill="#000" text-anchor="middle">Vienti *</text><rect x="1219.8" y="822.7" width="106.29999999999995" height="31.299999999999955" fill="#e1e1e1" stroke="#adadad" stroke-width="1"/><text x="1272.9499999999998" y="845.5" font-size="18.7" fill="#000" text-anchor="middle">Suosikki *</text><text x="858.5" y="840" font-size="18.7" fill="#000">Haku</text><rect x="958.5" y="821.5" width="249" height="30" fill="#fff" stroke="#7a7a7a" stroke-width="1"/><polyline points="1187,834 1192,839 1197,834" fill="none" stroke="#444" stroke-width="1.2"/><rect x="3" y="75" width="834" height="579" fill="#000" opacity="0.10"/><rect x="2" y="74" width="833" height="578" fill="#000" opacity="0.12"/><rect x="1" y="73" width="833" height="578" fill="#000" opacity="0.15"/><rect x="0.5" y="72.5" width="832" height="577.5" fill="#f2f2f2" stroke="#cccccc" stroke-width="1"/><rect x="2" y="140" width="828" height="32" fill="#91c9f7"/><text x="44.8" y="100.6" font-size="20.2" fill="#000">Uusi</text><text x="806" y="100.6" font-size="20.2" fill="#000" text-anchor="end">Ctrl+N</text><text x="44.8" y="132" font-size="20.2" fill="#000">Avaa...</text><text x="806" y="132" font-size="20.2" fill="#000" text-anchor="end">Ctrl+O</text><text x="44.8" y="164.6" font-size="20.2" fill="#000">Avaa CAD...</text><text x="44.8" y="197" font-size="20.2" fill="#000">Avaa LandXML...</text><text x="44.8" y="229" font-size="20.2" fill="#000">Yhdistä</text><polyline points="813.5,215 818.8,220 813.5,225" fill="none" stroke="#333" stroke-width="1.3"/><text x="44.8" y="268.3" font-size="20.2" fill="#000">Tallenna</text><polyline points="813.5,254.3 818.8,259.3 813.5,264.3" fill="none" stroke="#333" stroke-width="1.3"/><text x="44.8" y="299.6" font-size="20.2" fill="#000">Sulje</text><polyline points="813.5,285.6 818.8,290.6 813.5,295.6" fill="none" stroke="#333" stroke-width="1.3"/><text x="44.8" y="332" font-size="20.2" fill="#000">Formaatit</text><polyline points="813.5,318 818.8,323 813.5,328" fill="none" stroke="#333" stroke-width="1.3"/><text x="44.8" y="364.5" font-size="20.2" fill="#000">Elementit</text><polyline points="813.5,350.5 818.8,355.5 813.5,360.5" fill="none" stroke="#333" stroke-width="1.3"/><text x="44.8" y="403" font-size="20.2" fill="#000">Kuvatiedosto...</text><text x="44.8" y="435" font-size="20.2" fill="#000">Tulostus</text><polyline points="813.5,421 818.8,426 813.5,431" fill="none" stroke="#333" stroke-width="1.3"/><text x="44.8" y="474" font-size="20.2" fill="#000">Lopeta</text><text x="806" y="474" font-size="20.2" fill="#000" text-anchor="end">Alt+F4</text><rect x="40" y="238.5" width="792" height="1" fill="#d7d7d7"/><rect x="40" y="373.8" width="792" height="1" fill="#d7d7d7"/><rect x="40" y="444.8" width="792" height="1" fill="#d7d7d7"/><rect x="40" y="483.5" width="792" height="1" fill="#d7d7d7"/><defs><filter id="bl" x="-20%" y="-50%" width="140%" height="200%"><feGaussianBlur stdDeviation="9"/></filter><clipPath id="blc"><rect x="40" y="492" width="792" height="156"/></clipPath></defs><g clip-path="url(#blc)"><rect x="40" y="492" width="792" height="156" fill="#f2f2f2"/><g filter="url(#bl)"><rect x="20" y="470" width="620" height="200" fill="#cdcdcd"/><rect x="20" y="470" width="70" height="200" fill="#d9d9d9"/><rect x="420" y="540" width="280" height="70" fill="#d0d0d0"/><rect x="440" y="525" width="200" height="22" fill="#e9e9e9"/><rect x="640" y="470" width="40" height="60" fill="#e8e8e8"/><rect x="100" y="630" width="520" height="30" fill="#c8c8c8"/></g></g><rect x="12.1" y="130.4" width="157.6" height="45.9" rx="5" fill="none" stroke="#0a8dff" stroke-width="4.8"/><rect x="850.7" y="310.3" width="96" height="34.9" rx="5" fill="none" stroke="#0a8dff" stroke-width="4.6"/><rect x="2693.8" y="466.9" width="486.7" height="133.5" rx="6" fill="none" stroke="#ff0a0a" stroke-width="5"/><rect x="2689.5" y="606.8" width="160.9" height="30.5" rx="5" fill="none" stroke="#0a1eff" stroke-width="5"/><path d="M84.5 153.5 v24 l5.5 -5 l4 9 l3.5 -1.6 l-4 -8.6 h7.5 z" fill="#fff" stroke="#000" stroke-width="1.2" stroke-linejoin="round"/>
</svg></body></html>
